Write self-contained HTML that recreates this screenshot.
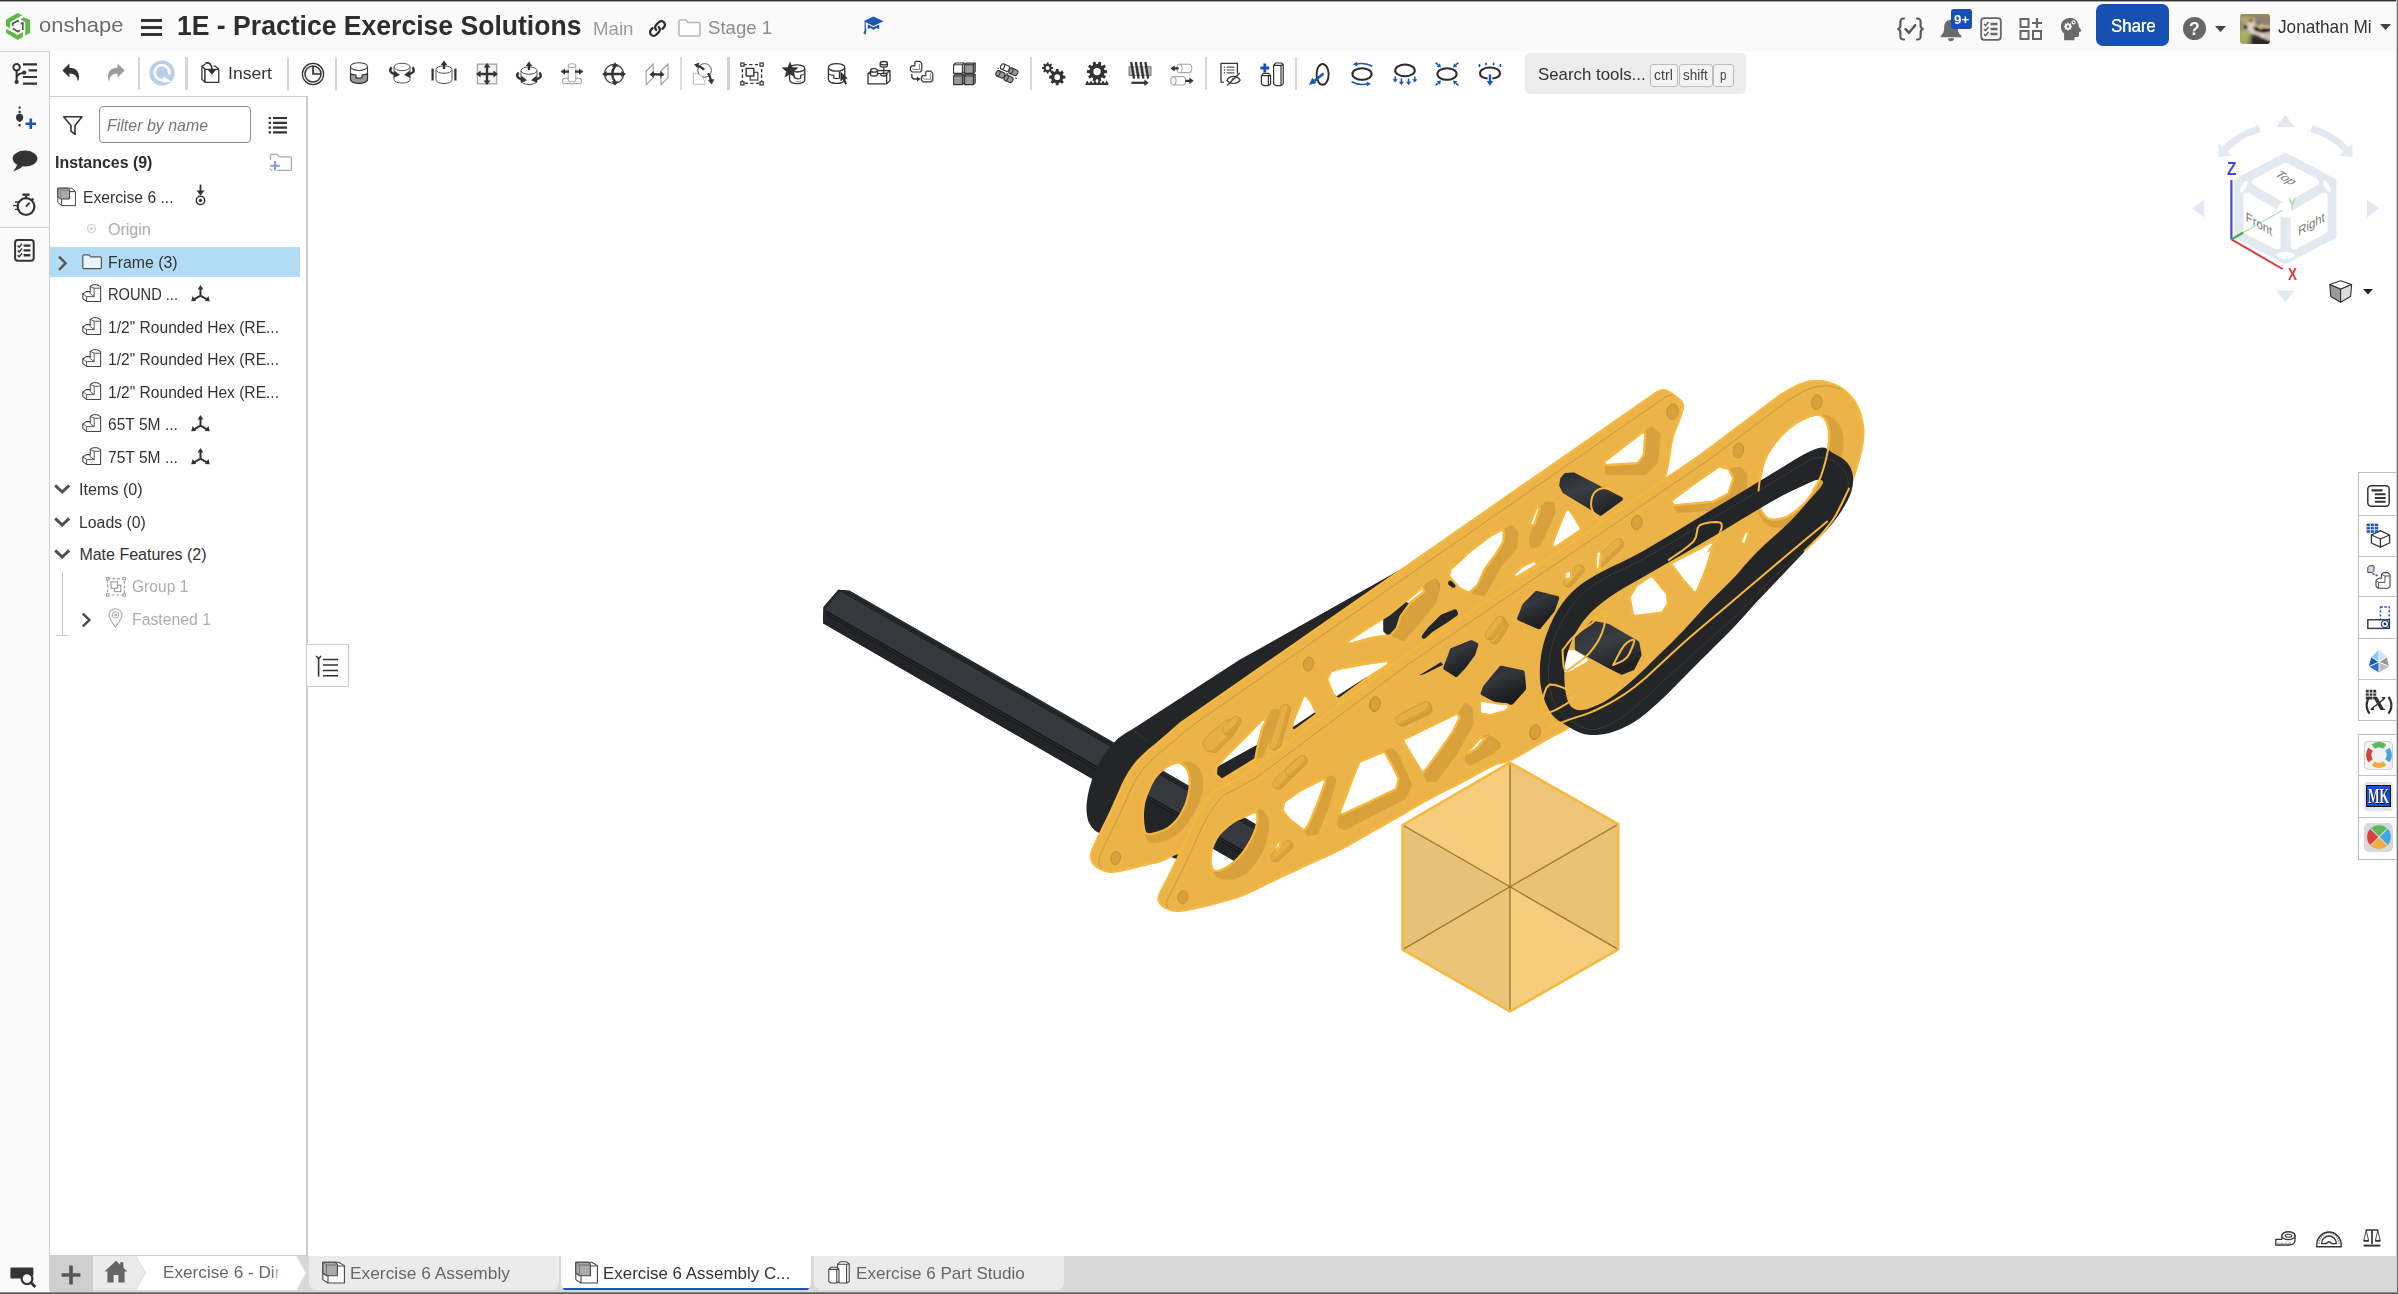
<!DOCTYPE html>
<html><head><meta charset="utf-8"><title>Onshape</title>
<style>
*{box-sizing:border-box;margin:0;padding:0}
html,body{width:2398px;height:1294px;overflow:hidden;background:#fff}
body{font-family:"Liberation Sans",sans-serif;color:#333;position:relative}
.abs{position:absolute}
.t{position:absolute;white-space:nowrap;transform-origin:0 0;line-height:1}
svg{position:absolute;overflow:visible}
#hdr{position:absolute;left:0;top:0;width:2398px;height:51px;background:#fafafa}
#topline{position:absolute;left:0;top:0;width:2398px;height:1px;background:#333;z-index:50}
#topline2{position:absolute;left:0;top:1px;width:2398px;height:1px;background:#a8a8a8;z-index:50}
#rightline{position:absolute;left:2396px;top:0;width:2px;height:1294px;background:linear-gradient(90deg,#d0d0d0 0,#d0d0d0 50%,#707070 50%);z-index:50}
#botline{position:absolute;left:0;top:1292px;width:2398px;height:2px;background:linear-gradient(#9a9a9a,#4a4a4a);z-index:50}
#side{position:absolute;left:0;top:51px;width:50px;height:1240px;background:#fafafa;border-right:1px solid #d0d0d0;border-top:1px solid #d6d6d6}
#panel{position:absolute;left:50px;top:96px;width:258px;height:1160px;background:#fff;border-top:1px solid #ccc;border-right:2px solid #ccc;border-bottom:1px solid #ccc}
#tabs{position:absolute;left:50px;top:1256px;width:2346px;height:36px;background:#d8d8d8}
.sep{position:absolute;top:57px;width:2px;height:33px;background:#d0d0d0}
.row{position:absolute;left:51px;width:249px;height:31px}
</style></head><body>
<div id="hdr"></div>
<div id="side"></div>
<div id="panel"></div>
<div id="tabs"></div>
<svg style="left:5.9px;top:12.9px" width="24.2" height="27.1" viewBox="100 150 415 465" preserveAspectRatio="none">
<polygon points="100,265 300,150 380,190 172,308 172,412 100,375" fill="#5cb947"/>
<polygon points="345,262 400,222 515,272 515,490 430,540 430,305" fill="#5cb947"/>
<polygon points="100,420 100,490 300,615 392,560 392,475 300,527" fill="#5cb947"/>
<path d="M215,372 L215,330 L300,285 L322,298 M352,332 L388,322 L388,440 M215,418 L300,468 L340,448" fill="none" stroke="#5a5a5a" stroke-width="30"/>
</svg>
<div class="t" style="left:39.1px;top:14.7px;font-size:20.8px;color:#6b6b6b;transform:scaleX(1.0576);">onshape</div>
<div class="abs" style="left:141px;top:18.5px;width:21px;height:3.2px;background:#333"></div>
<div class="abs" style="left:141px;top:25.7px;width:21px;height:3.2px;background:#333"></div>
<div class="abs" style="left:141px;top:33px;width:21px;height:3.2px;background:#333"></div>
<div class="t" style="left:177.2px;top:12.8px;font-size:26.8px;color:#2d2d2d;font-weight:bold;transform:scaleX(0.9911);">1E - Practice Exercise Solutions</div>
<div class="t" style="left:593.3px;top:20.1px;font-size:18.2px;color:#9a9a9a;transform:scaleX(1.0267);">Main</div>
<svg style="left:648px;top:19px" width="19" height="19" viewBox="0 0 19 19"><g fill="none" stroke="#2f2f2f" stroke-width="2.3" stroke-linecap="round">
<path d="M8.2,11 a3.6,3.6 0 0 1 0,-5.1 l2.6,-2.6 a3.6,3.6 0 0 1 5.1,5.1 l-1.5,1.5"/>
<path d="M10.8,8 a3.6,3.6 0 0 1 0,5.1 l-2.6,2.6 a3.6,3.6 0 0 1 -5.1,-5.1 l1.5,-1.5"/></g></svg>
<svg style="left:678px;top:18.5px" width="23" height="18" viewBox="0 0 23 18"><path d="M1,2.5 a1.5,1.5 0 0 1 1.5,-1.5 h5.5 l2,2.4 h10.5 a1.5,1.5 0 0 1 1.5,1.5 v10.6 a1.5,1.5 0 0 1 -1.5,1.5 h-18 a1.5,1.5 0 0 1 -1.5,-1.5 z" fill="#fdfdfd" stroke="#b8b8b8" stroke-width="1.5"/></svg>
<div class="t" style="left:707.5px;top:17.9px;font-size:19.2px;color:#8c8c8c;transform:scaleX(0.9700);">Stage 1</div>
<svg style="left:863px;top:16px" width="21" height="20" viewBox="0 0 21 20"><g fill="#1c55b3">
<polygon points="10.5,0.5 20.5,5.2 10.5,9.9 0.5,5.2"/>
<path d="M4.8,8.6 v4.6 c2,-1.6 3.8,-1.2 5.7,0.8 c1.9,-2 3.7,-2.4 5.7,-0.8 v-4.6 l-5.7,2.7 z"/>
<path d="M1.6,6.2 l1.2,0.5 v5.6 c0.9,1.6 0.6,4 -0.4,6.2 c-0.9,-0.3 -1.5,-0.8 -2,-1.6 c1.2,-1.6 1.4,-3.2 1.2,-4.6 z"/></g></svg>
<svg style="left:1897px;top:17px" width="27" height="24" viewBox="0 0 27 24"><g fill="none" stroke="#5a5a5a" stroke-width="2.2" stroke-linecap="round" stroke-linejoin="round">
<path d="M7,1.5 c-3,0 -3.6,1 -3.6,3.4 v3.6 c0,2 -1,3 -2.2,3.5 c1.2,0.5 2.2,1.5 2.2,3.5 v3.6 c0,2.4 0.6,3.4 3.6,3.4"/>
<path d="M20,1.5 c3,0 3.6,1 3.6,3.4 v3.6 c0,2 1,3 2.2,3.5 c-1.2,0.5 -2.2,1.5 -2.2,3.5 v3.6 c0,2.4 -0.6,3.4 -3.6,3.4"/>
<path d="M8.6,12.2 l3.4,3.6 l6.2,-7.6" stroke-width="2.6"/></g></svg>
<svg style="left:1940px;top:19px" width="22" height="22" viewBox="0 0 22 22"><path d="M11,0.8 c-4.4,0 -6.8,3.4 -6.8,7.4 c0,4.6 -1.2,6.6 -3.6,8.6 v1.4 h20.8 v-1.4 c-2.4,-2 -3.6,-4 -3.6,-8.6 c0,-4 -2.4,-7.4 -6.8,-7.4 z M8,19.2 a3,3 0 0 0 6,0 z" fill="#6a6a6a"/></svg>
<div class="abs" style="left:1951px;top:9px;width:20.5px;height:20px;background:#1650b3;border-radius:3px"></div>
<div class="t" style="left:1953.6px;top:12.8px;font-size:13px;color:#fff;font-weight:bold;transform:scaleX(1.0255);">9+</div>
<svg style="left:1980px;top:17px" width="22" height="24" viewBox="0 0 22 24"><rect x="1.2" y="1.2" width="19.6" height="21.6" rx="3" fill="none" stroke="#666" stroke-width="1.8"/>
<g stroke="#666" stroke-width="2.6"><path d="M10.5,7 h7 M10.5,12 h7 M10.5,17 h7"/></g>
<g fill="none" stroke="#666" stroke-width="1.5"><path d="M4,7 l1.6,1.6 l3,-3.6 M4,12 l1.6,1.6 l3,-3.6 M4,17 l1.6,1.6 l3,-3.6"/></g></svg>
<svg style="left:2019px;top:17px" width="24" height="24" viewBox="0 0 24 24"><g fill="none" stroke="#666" stroke-width="2"><rect x="1.5" y="2" width="8" height="8"/><rect x="1.5" y="14" width="8" height="8"/><rect x="14" y="14" width="8" height="8"/><path d="M18,1 v10 M13,6 h10" stroke-width="2.2"/></g></svg>
<svg style="left:2060px;top:17px" width="22" height="24" viewBox="0 0 22 24"><path d="M10.5,0.8 c-5.6,0 -9.6,3.8 -9.6,8.8 c0,3.4 1.4,5.4 3.2,7.2 v6.4 h10.4 v-3.2 h2.6 c1.2,0 1.9,-0.8 1.9,-2 v-2.8 l1.8,-0.8 c0.5,-0.3 0.5,-0.8 0.2,-1.3 l-2.2,-3.6 c-0.4,-5.2 -3.8,-8.7 -8.3,-8.7 z" fill="#6a6a6a"/>
<g fill="#fafafa"><circle cx="8" cy="9.5" r="3.1"/><circle cx="13.6" cy="5.4" r="2.1"/></g><g fill="#6a6a6a"><circle cx="8" cy="9.5" r="1.3"/><circle cx="13.6" cy="5.4" r="0.9"/></g>
<g stroke="#fafafa" stroke-width="1.3"><path d="M8,5.4 v8.2 M3.9,9.5 h8.2 M5.1,6.6 l5.8,5.8 M10.9,6.6 l-5.8,5.8"/></g><circle cx="8" cy="9.5" r="2.3" fill="#fafafa"/><circle cx="8" cy="9.5" r="1.2" fill="#6a6a6a"/></svg>
<div class="abs" style="left:2096px;top:4px;width:73px;height:42px;background:#1650b3;border-radius:7px"></div>
<div class="t" style="left:2110.5px;top:16.6px;font-size:18.4px;color:#fff;transform:scaleX(0.9064);text-shadow:0.4px 0 0 #fff;">Share</div>
<div class="abs" style="left:2183px;top:17px;width:23px;height:23px;background:#666;border-radius:50%"></div>
<div class="t" style="left:2189.3px;top:19.1px;font-size:19px;color:#fafafa;font-weight:bold;transform:scaleX(0.9220);">?</div>
<svg style="left:2215px;top:25.5px" width="11" height="6" viewBox="0 0 11 6"><polygon points="0,0 11,0 5.5,6" fill="#444"/></svg>
<svg style="left:2240px;top:14px" width="30" height="30" viewBox="0 0 30 30"><defs><clipPath id="av"><rect width="30" height="30" rx="2.4"/></clipPath><filter id="avb" x="-10%" y="-10%" width="120%" height="120%"><feGaussianBlur stdDeviation="1.15"/></filter></defs>
<g clip-path="url(#av)"><g filter="url(#avb)"><rect x="-2" y="-2" width="34" height="34" fill="#b3a27f"/>
<rect x="-2" y="-2" width="34" height="5" fill="#8c9550"/><path d="M-2,17 L12,19 L10,32 L-2,32 Z" fill="#a4ad5c"/><path d="M-2,6 L3,8 L2,18 L-2,18Z" fill="#8f9858"/>
<path d="M14,2 L32,3 L32,12 L22,10 L15,6 Z" fill="#8f8071"/>
<path d="M6,11 C9,7 14,6 18,8 L24,13 L31,12 L31,27 L20,24 L11,19 C8,17 6,14 6,11 Z" fill="#dcd2c4"/>
<path d="M13,13 L19,12 L24,14 L31,14 L31,18 L22,19 L15,17 Z" fill="#1d1916"/>
<path d="M11,20 L20,23 L31,27 L31,32 L8,32 Z" fill="#2c2722"/><path d="M8,24 L12,21 L11,32 L7,32Z" fill="#8d7b66"/>
<path d="M23,19 L31,18.5 L31,26 L25,25 Z" fill="#cfc2b0"/><path d="M14,20 L20,22 L18,25 L13,23Z" fill="#4a3a30"/>
<circle cx="5.6" cy="13.2" r="2.1" fill="#0d0c0b"/>
<path d="M8.4,5.4 L13.6,4.6 L15,8 L21.6,9.6 L23,14 L20.6,15.4 L15,11 L9.4,8.6 Z" fill="#d6bf78"/>
<ellipse cx="11" cy="6.3" rx="2.1" ry="1.3" fill="#3a332e" transform="rotate(-12 11 6.3)"/>
<ellipse cx="17.9" cy="9.2" rx="2.9" ry="1.9" fill="#56616e" transform="rotate(24 17.9 9.2)"/><ellipse cx="17.4" cy="8.6" rx="1.1" ry="0.7" fill="#aeb8c2" transform="rotate(24 17.4 8.6)"/>
</g></g></svg>
<div class="t" style="left:2278.0px;top:17.9px;font-size:18.2px;color:#333;transform:scaleX(0.9451);">Jonathan Mi</div>
<svg style="left:2379.5px;top:24px" width="11" height="6" viewBox="0 0 11 6"><polygon points="0,0 11,0 5.5,6" fill="#444"/></svg>
<svg style="left:12.0px;top:60.5px" width="26" height="26" viewBox="-13.0 -13.0 26 26"><g fill="none" stroke="#333" stroke-width="2"><circle cx="-8.4" cy="-6.8" r="3.2"/><path d="M-8.4,-3.6 V7.8 M-8.4,4.5 C-8.4,0 -5,-0.5 -1.6,-1.2"/></g>
<circle cx="-8.4" cy="8" r="2.1" fill="#333"/><circle cx="-0.8" cy="-1.4" r="2.1" fill="#333"/>
<g stroke="#333" stroke-width="2.1"><path d="M-2,-9.6 H12 M3.6,-3.6 H12 M-2,3 H12 M-2,9.6 H12"/></g></svg>
<svg style="left:58.0px;top:60.0px" width="26" height="26" viewBox="-13.0 -13.0 26 26"><path d="M-8.6,-2.6 L-1.6,-9.6 V-5.2 C5,-5.2 8.4,-1.2 8,4.6 C7.8,6.4 7.4,7.6 6.8,8.4 C6.4,3.2 3.6,0.4 -1.6,0.4 V4.4 Z" fill="#333"/></svg>
<svg style="left:102.5px;top:60.0px" width="26" height="26" viewBox="-13.0 -13.0 26 26"><path d="M8.6,-2.6 L1.6,-9.6 V-5.2 C-5,-5.2 -8.4,-1.2 -8,4.6 C-7.8,6.4 -7.4,7.6 -6.8,8.4 C-6.4,3.2 -3.6,0.4 1.6,0.4 V4.4 Z" fill="#9b9b9b"/></svg>
<div class="sep" style="left:137.8px;width:2px;background:#d6d6d6"></div>
<svg style="left:149.3px;top:60.3px" width="26" height="26" viewBox="-13.0 -13.0 26 26"><circle r="12.6" fill="#b9cfe8"/><path d="M3.5,6.2 A7.4,7.4 0 1 1 7.2,1.5" fill="none" stroke="#fff" stroke-width="2.6"/><polygon points="1.2,3.2 9.5,8.8 1.2,9.6" fill="#fff"/></svg>
<div class="sep" style="left:185.2px;width:2.4px;background:#d6d6d6"></div>
<svg style="left:197.0px;top:60.2px" width="26" height="26" viewBox="-13.0 -13.0 26 26"><g fill="#fff" stroke="#333" stroke-width="1.25" stroke-linejoin="round"><path d="M-8.1,-6.8 L-5,-3.7 V9.4 L-8.1,6.3 Z"/><path d="M-5,-3.7 H8.75 V9.4 H-5 Z"/><path d="M-8.1,-6.8 L-4.6,-9 M8.75,-3.7 L5.4,-6.9 H3.6" fill="none"/></g>
<path d="M-4.8,-9.8 C-1,-11.2 2,-9 1.9,-3.4" fill="none" stroke="#333" stroke-width="1.7"/><polygon points="-2,-3 5.8,-3 1.9,1.8" fill="#333"/><polygon points="-0.4,2.2 4.2,2.2 1.9,4.2" fill="#c8c8c8"/></svg>
<div class="t" style="left:228.0px;top:66.0px;font-size:16.6px;color:#333;transform:scaleX(1.0599);">Insert</div>
<div class="sep" style="left:286.9px;width:2.4px;background:#d6d6d6"></div>
<svg style="left:299.6px;top:60.599999999999994px" width="26" height="26" viewBox="-13.0 -13.0 26 26"><circle r="10.6" fill="#fff" stroke="#333" stroke-width="1.3"/><path d="M0,0 V-8 A8,8 0 0 1 8,0 Z" fill="#e9e9e9"/><circle r="8" fill="none" stroke="#333" stroke-width="1.5"/><path d="M0,-8 V0 H8" fill="none" stroke="#333" stroke-width="1.7"/></svg>
<div class="sep" style="left:335px;width:1.6px;background:#d6d6d6"></div>
<svg style="left:346.3px;top:60.2px" width="26" height="26" viewBox="-13.0 -13.0 26 26"><path d="M-8.5,-6.4 V6.5 A8.5,3.8 0 0 0 8.5,6.5 V-6.4" fill="#fff" stroke="#444" stroke-width="1.1"/><ellipse cx="0" cy="-6.4" rx="8.5" ry="3.9" fill="#fff" stroke="#444" stroke-width="1.1"/><path d="M-8.5,0.8 C-6,1.8 -4,2 -3,2 V4.6 C-1,5.4 1,5.4 3,4.6 V2 C4,2 6,1.8 8.5,0.8 V6.5 A8.5,3.8 0 0 1 -8.5,6.5 Z" fill="#9a9a9a" stroke="#333" stroke-width="1.2"/></svg>
<svg style="left:389.4px;top:60.2px" width="26" height="26" viewBox="-13.0 -13.0 26 26"><path d="M-8,-5.6 V6.5 A8,3.6 0 0 0 8,6.5 V-5.6" fill="#fff" stroke="#555" stroke-width="1"/><ellipse cx="0" cy="-6" rx="8" ry="3.7" fill="#fff" stroke="#555" stroke-width="1"/><g transform="translate(0,-2.2)"><path d="M-10.5,-3.6 C-13.4,0.4 -11,2.6 -6.6,3.4" fill="none" stroke="#333" stroke-width="2.4"/><polygon points="-7.6,-0.4 -2,4.2 -8.2,7" fill="#333"/>
<path d="M10.5,-3.6 C13.4,0.4 11,2.6 6.6,3.4" fill="none" stroke="#333" stroke-width="2.4"/><polygon points="7.6,-0.4 2,4.2 8.2,7" fill="#333"/></g></svg>
<svg style="left:431.3px;top:60.2px" width="26" height="26" viewBox="-13.0 -13.0 26 26"><path d="M-8,-3 V7 A8,3.5 0 0 0 8,7 V-3" fill="#fff" stroke="#555" stroke-width="1"/><ellipse cx="0" cy="-3.4" rx="8" ry="3.7" fill="#fff" stroke="#555" stroke-width="1"/>
<path d="M0,-4 V-9" stroke="#333" stroke-width="2.4"/><polygon points="-3.2,-8 3.2,-8 0,-12.4" fill="#333"/><path d="M-11.4,-4.6 V7.4 M11.4,-4.6 V7.4" stroke="#333" stroke-width="2.2"/></svg>
<svg style="left:474.4px;top:60.599999999999994px" width="26" height="26" viewBox="-13.0 -13.0 26 26"><rect x="-9.6" y="-9.8" width="19.2" height="19.6" fill="#f3f3f3" stroke="#aaa" stroke-width="1.4"/><path d="M0,-7 V7 M-7,0 H7" stroke="#333" stroke-width="2.4"/>
<polygon points="-3.4,-6.4 3.4,-6.4 0,-11" fill="#333"/><polygon points="-3.4,6.4 3.4,6.4 0,11" fill="#333"/><polygon points="-6.4,-3.4 -6.4,3.4 -11,0" fill="#333"/><polygon points="6.4,-3.4 6.4,3.4 11,0" fill="#333"/></svg>
<svg style="left:516.3px;top:60.8px" width="26" height="26" viewBox="-13.0 -13.0 26 26"><path d="M-8,-3 V7 A8,3.5 0 0 0 8,7 V-3" fill="#fff" stroke="#555" stroke-width="1"/><ellipse cx="0" cy="-3.4" rx="8" ry="3.7" fill="#fff" stroke="#555" stroke-width="1"/>
<path d="M0,-4 V-9" stroke="#333" stroke-width="2.4"/><polygon points="-3.2,-8 3.2,-8 0,-12.4" fill="#333"/><path d="M-10.5,-1.6 C-13.4,2.4 -11,4.6 -6.6,5.4" fill="none" stroke="#333" stroke-width="2.4"/><polygon points="-7.6,1.6 -2,6.2 -8.2,9" fill="#333"/>
<path d="M10.5,-1.6 C13.4,2.4 11,4.6 6.6,5.4" fill="none" stroke="#333" stroke-width="2.4"/><polygon points="7.6,1.6 2,6.2 8.2,9" fill="#333"/></svg>
<svg style="left:559.4px;top:60.2px" width="26" height="26" viewBox="-13.0 -13.0 26 26"><rect x="-9.4" y="5.4" width="18.8" height="5.2" rx="2.2" fill="#fff" stroke="#aaa" stroke-width="1.2"/><path d="M-3.8,-7 V7 A3.8,1.8 0 0 0 3.8,7 V-7" fill="#fff" stroke="#aaa" stroke-width="1.1"/><ellipse cx="0" cy="-7.4" rx="3.8" ry="1.9" fill="#fff" stroke="#aaa" stroke-width="1.1"/>
<path d="M-8,-1.4 H-3 M8,-1.4 H3" stroke="#333" stroke-width="2.2"/><polygon points="-7,-4.6 -7,1.8 -11.4,-1.4" fill="#333"/><polygon points="7,-4.6 7,1.8 11.4,-1.4" fill="#333"/></svg>
<svg style="left:601.4px;top:60.599999999999994px" width="26" height="26" viewBox="-13.0 -13.0 26 26"><circle r="9.6" fill="#fff" stroke="#444" stroke-width="1.2"/><path d="M-8,0 H8 M1.2,-8 C-2.6,-3 -2.6,3 1.2,8" fill="none" stroke="#333" stroke-width="2.3"/>
<polygon points="-2.4,-7.2 4.2,-7.2 1,-11.8" fill="#333"/><polygon points="-2.4,7.2 4.2,7.2 1,11.8" fill="#333"/><polygon points="-7.4,-3.3 -7.4,3.3 -12,0" fill="#333"/><polygon points="7.4,-3.3 7.4,3.3 12,0" fill="#333"/></svg>
<svg style="left:644.3px;top:60.599999999999994px" width="26" height="26" viewBox="-13.0 -13.0 26 26"><g fill="#fff" stroke="#999" stroke-width="1.1"><polygon points="-10.8,-3 -3.8,-10 -3.8,3.6 -10.8,10.6"/><polygon points="4,-3 11,-10 11,3.6 4,10.6"/></g><path d="M-4,0.4 H4" stroke="#333" stroke-width="2.4"/><polygon points="-3.2,-3 -3.2,3.8 -7.6,0.4" fill="#333"/><polygon points="3.2,-3 3.2,3.8 7.6,0.4" fill="#333"/></svg>
<div class="sep" style="left:680.2px;width:1.4px;background:#dcdcdc"></div>
<svg style="left:691.0px;top:60.599999999999994px" width="26" height="26" viewBox="-13.0 -13.0 26 26"><circle cx="0.6" cy="-3.6" r="6.8" fill="none" stroke="#555" stroke-width="1"/><path d="M-10.6,10.4 V-0.8 C-4,-0.8 1,4 1,10.4 Z" fill="#fff" stroke="#bbb" stroke-width="1"/>
<path d="M-7.6,-8.4 C-4.4,-8 -2,-6.6 0.2,-4.4" fill="none" stroke="#333" stroke-width="2.3"/><polygon points="-10,-9.6 -4.6,-11.4 -6.4,-6" fill="#333"/>
<path d="M4,-0.8 C5.6,1.4 6.6,3.8 7,6.6" fill="none" stroke="#333" stroke-width="2.3"/><polygon points="4,6 10.4,5 7.8,10.6" fill="#333"/></svg>
<div class="sep" style="left:727px;width:2.6px;background:#d2d2d2"></div>
<svg style="left:739.3px;top:60.599999999999994px" width="26" height="26" viewBox="-13.0 -13.0 26 26"><rect x="-9.6" y="-9.4" width="19.2" height="18.8" fill="none" stroke="#333" stroke-width="1.4" stroke-dasharray="3.2 2.4" stroke-dashoffset="-1.2"/>
<g fill="#fff" stroke="#333" stroke-width="1.2"><rect x="-11.2" y="-11" width="3.2" height="3.2"/><rect x="8" y="-11" width="3.2" height="3.2"/><rect x="-11.2" y="7.8" width="3.2" height="3.2"/><rect x="8" y="7.8" width="3.2" height="3.2"/></g>
<rect x="-1.8" y="-1.6" width="7.6" height="7.6" fill="#fff" stroke="#555" stroke-width="1.3"/><rect x="-5.8" y="-5.6" width="7.6" height="7.6" fill="#fff" stroke="#333" stroke-width="1.4"/></svg>
<svg style="left:781.6px;top:60.2px" width="26" height="26" viewBox="-13.0 -13.0 26 26"><path d="M-5.4,-4 V7 A7.6,3.6 0 0 0 9.8,7 V-4" fill="#fff" stroke="#333" stroke-width="1.3"/><ellipse cx="2.2" cy="-4.6" rx="7.6" ry="3.6" fill="#fff" stroke="#333" stroke-width="1.3"/>
<path d="M-1.6,3.6 C-0.6,5.8 3,6.4 5.6,5.2 V2.4 C7.4,2 8.6,1.4 9.8,0.4" fill="none" stroke="#333" stroke-width="1.2"/><path d="M0.6,8.4 C2,9 5,8.6 6,7.6" fill="none" stroke="#888" stroke-width="0.9"/>
<polygon points="-5,-11.6 -2.6,-5.8 3.6,-5.4 -1.2,-1.4 0.4,4.6 -5,1.3 -10.4,4.6 -8.8,-1.4 -13.6,-5.4 -7.4,-5.8" fill="#333"/></svg>
<svg style="left:823.8px;top:60.2px" width="26" height="26" viewBox="-13.0 -13.0 26 26"><path d="M-8.6,-5 V6.6 A8.2,3.8 0 0 0 7.8,6.6 V-5" fill="#fff" stroke="#333" stroke-width="1.3"/><ellipse cx="-0.4" cy="-5.6" rx="8.2" ry="3.8" fill="#fff" stroke="#333" stroke-width="1.3"/>
<path d="M-8.6,1 C-6,2.2 -4,2.4 -3.2,2.4 V5 C-1.4,5.8 0.6,5.8 2.4,5 V-1" fill="none" stroke="#333" stroke-width="1.2"/>
<polygon points="3.4,-1.6 3.4,8.6 5.8,6.6 8.2,11.4 10,10.4 7.8,5.8 11,5.4" fill="#333"/></svg>
<svg style="left:866.2px;top:60.2px" width="26" height="26" viewBox="-13.0 -13.0 26 26"><g fill="#fff" stroke="#333" stroke-width="1.3" stroke-linejoin="round"><path d="M-11,0.6 L-7,-2.4 H11 V7.6 L7.6,10.8 H-11 Z"/><path d="M-11,0.6 H7.6 V10.8 M7.6,0.6 L11,-2.4"/>
<path d="M-8.4,-2.4 V1.4 A3.4,1.6 0 0 0 -1.6,1.4 V-2.4"/><ellipse cx="-5" cy="-2.6" rx="3.4" ry="1.7"/>
<ellipse cx="4.8" cy="1.6" rx="3" ry="1.4"/><path d="M4.8,1.4 V-6" stroke-width="1.2"/>
<path d="M1.2,-9.6 V-7.4 A3.6,1.6 0 0 0 8.4,-7.4 V-9.6"/><ellipse cx="4.8" cy="-9.8" rx="3.6" ry="1.7"/></g></svg>
<svg style="left:909.4px;top:60.2px" width="26" height="26" viewBox="-13.0 -13.0 26 26"><g fill="#fff" stroke="#333" stroke-width="1.2" stroke-linejoin="round"><path d="M-11.6,-5.4 V-2.8 L-9.8,-1 H-1.8 L-0.2,-2.4 V-9.4 L-2.2,-11.6 H-6.4 L-7.2,-10.6 V-7.2 H-10.6 Z"/>
<path d="M-0.6,4.4 V7 L1.2,8.8 H9.2 L10.8,7.4 V0.4 L8.8,-1.8 H4.6 L3.8,-0.8 V2.6 H0.4 Z"/></g>
<path d="M-10.6,-5.6 L-9,-3.6 H-2.6 V-9.2 M-2.6,-3.6 L-0.8,-2.6 M0.4,4.2 L2,6.2 H8.4 V0.6 M8.4,6.2 L10.2,7.2" fill="none" stroke="#777" stroke-width="0.9"/>
<path d="M-10.2,1 V3.6 C-10.2,5.4 -9,6 -7.4,6 H-4" fill="none" stroke="#333" stroke-width="1.3"/><polygon points="-5,3.4 -5,8.6 -1.4,6" fill="#333"/></svg>
<svg style="left:951.6px;top:60.8px" width="26" height="26" viewBox="-13.0 -13.0 26 26"><g stroke="#333" stroke-width="1.1" stroke-linejoin="round"><path d="M-0.4,-9.2 L1.4,-11 H10.2 V-2.4000000000000004 L8.4,-0.5999999999999996 H-0.4 Z" fill="#9a9a9a"/><path d="M-0.4,-9.2 H8.4 V-0.5999999999999996 M8.4,-9.2 L10.2,-11" fill="none"/></g><g stroke="#333" stroke-width="1.1" stroke-linejoin="round"><path d="M-11.4,-9.2 L-9.6,-11 H-0.8000000000000007 V-2.4000000000000004 L-2.5999999999999996,-0.5999999999999996 H-11.4 Z" fill="#fff"/><path d="M-11.4,-9.2 H-2.5999999999999996 V-0.5999999999999996 M-2.5999999999999996,-9.2 L-0.8000000000000007,-11" fill="none"/></g><g stroke="#333" stroke-width="1.1" stroke-linejoin="round"><path d="M-0.4,2.0 L1.4,0.2 H10.2 V8.799999999999999 L8.4,10.6 H-0.4 Z" fill="#9a9a9a"/><path d="M-0.4,2.0 H8.4 V10.6 M8.4,2.0 L10.2,0.2" fill="none"/></g><g stroke="#333" stroke-width="1.1" stroke-linejoin="round"><path d="M-11.4,2.0 L-9.6,0.2 H-0.8000000000000007 V8.799999999999999 L-2.5999999999999996,10.6 H-11.4 Z" fill="#9a9a9a"/><path d="M-11.4,2.0 H-2.5999999999999996 V10.6 M-2.5999999999999996,2.0 L-0.8000000000000007,0.2" fill="none"/></g></svg>
<svg style="left:994.6px;top:60.8px" width="26" height="26" viewBox="-13.0 -13.0 26 26"><g transform="translate(-3,-6.4) rotate(24)" stroke="#333" stroke-width="1.1"><path d="M-2.6,-2.9 H2.6 A1.9,2.9 0 0 1 2.6,2.9 H-2.6 Z" fill="#fff"/><ellipse cx="-2.6" cy="0" rx="1.9" ry="2.9" fill="#fff"/></g><g transform="translate(-7.6,0.4) rotate(24)" stroke="#333" stroke-width="1.1"><path d="M-2.6,-2.9 H2.6 A1.9,2.9 0 0 1 2.6,2.9 H-2.6 Z" fill="#9a9a9a"/><ellipse cx="-2.6" cy="0" rx="1.9" ry="2.9" fill="#9a9a9a"/></g><g transform="translate(5.4,-2.2) rotate(24)" stroke="#333" stroke-width="1.1"><path d="M-2.6,-2.9 H2.6 A1.9,2.9 0 0 1 2.6,2.9 H-2.6 Z" fill="#9a9a9a"/><ellipse cx="-2.6" cy="0" rx="1.9" ry="2.9" fill="#9a9a9a"/></g><g transform="translate(0.6,4.8) rotate(24)" stroke="#333" stroke-width="1.1"><path d="M-2.6,-2.9 H2.6 A1.9,2.9 0 0 1 2.6,2.9 H-2.6 Z" fill="#9a9a9a"/><ellipse cx="-2.6" cy="0" rx="1.9" ry="2.9" fill="#9a9a9a"/></g><path d="M-10.6,-6 l1.6,0.6 M-1.6,-1 l2,0.8 M7,3.8 l2,0.8 M-9,-3 l0.6,0.4" stroke="#333" stroke-width="0.9"/></svg>
<div class="sep" style="left:1030.2px;width:1.6px;background:#d8d8d8"></div>
<svg style="left:1041.2px;top:60.599999999999994px" width="26" height="26" viewBox="-13.0 -13.0 26 26"><path d="M-2.45,-7.08 L-0.88,-6.92 L-0.88,-5.08 L-2.45,-4.92 L-2.84,-3.97 L-1.84,-2.74 L-3.14,-1.44 L-4.37,-2.44 L-5.32,-2.05 L-5.48,-0.48 L-7.32,-0.48 L-7.48,-2.05 L-8.43,-2.44 L-9.66,-1.44 L-10.96,-2.74 L-9.96,-3.97 L-10.35,-4.92 L-11.92,-5.08 L-11.92,-6.92 L-10.35,-7.08 L-9.96,-8.03 L-10.96,-9.26 L-9.66,-10.56 L-8.43,-9.56 L-7.48,-9.95 L-7.32,-11.52 L-5.48,-11.52 L-5.32,-9.95 L-4.37,-9.56 L-3.14,-10.56 L-1.84,-9.26 L-2.84,-8.03 Z M-4.5,-6 A1.9,1.9 0 1 0 -8.3,-6 A1.9,1.9 0 1 0 -4.5,-6 Z" fill="#333" fill-rule="evenodd"/><path d="M9.08,1.59 L11.29,1.85 L11.29,4.55 L9.08,4.81 L8.50,6.22 L9.87,7.97 L7.97,9.87 L6.22,8.50 L4.81,9.08 L4.55,11.29 L1.85,11.29 L1.59,9.08 L0.18,8.50 L-1.57,9.87 L-3.47,7.97 L-2.10,6.22 L-2.68,4.81 L-4.89,4.55 L-4.89,1.85 L-2.68,1.59 L-2.10,0.18 L-3.47,-1.57 L-1.57,-3.47 L0.18,-2.10 L1.59,-2.68 L1.85,-4.89 L4.55,-4.89 L4.81,-2.68 L6.22,-2.10 L7.97,-3.47 L9.87,-1.57 L8.50,0.18 Z M6.1,3.2 A2.9,2.9 0 1 0 0.30000000000000027,3.2 A2.9,2.9 0 1 0 6.1,3.2 Z" fill="#333" fill-rule="evenodd"/></svg>
<svg style="left:1084.2px;top:60.599999999999994px" width="26" height="26" viewBox="-13.0 -13.0 26 26"><path d="M7.43,-4.01 L10.11,-3.74 L10.11,-1.06 L7.43,-0.79 L6.96,0.66 L8.97,2.46 L7.39,4.63 L5.06,3.27 L3.83,4.17 L4.40,6.80 L1.85,7.63 L0.76,5.16 L-0.76,5.16 L-1.85,7.63 L-4.40,6.80 L-3.83,4.17 L-5.06,3.27 L-7.39,4.63 L-8.97,2.46 L-6.96,0.66 L-7.43,-0.79 L-10.11,-1.06 L-10.11,-3.74 L-7.43,-4.01 L-6.96,-5.46 L-8.97,-7.26 L-7.39,-9.43 L-5.06,-8.07 L-3.83,-8.97 L-4.40,-11.60 L-1.85,-12.43 L-0.76,-9.96 L0.76,-9.96 L1.85,-12.43 L4.40,-11.60 L3.83,-8.97 L5.06,-8.07 L7.39,-9.43 L8.97,-7.26 L6.96,-5.46 Z M3.7,-2.4 A3.7,3.7 0 1 0 -3.7,-2.4 A3.7,3.7 0 1 0 3.7,-2.4 Z" fill="#333" fill-rule="evenodd"/><path d="M-11.4,11 H11.4 V9.6 L9.6,6.6 L8,9.4 L6,6.6 L4.2,9.4 L2,6.6 L0,9.4 L-2,6.6 L-4.2,9.4 L-6,6.6 L-8,9.4 L-9.6,6.6 L-11.4,9.6 Z" fill="#333"/></svg>
<svg style="left:1126.6px;top:60.599999999999994px" width="26" height="26" viewBox="-13.0 -13.0 26 26"><rect x="-11" y="-7.2" width="22" height="8.6" fill="#bbb" stroke="#666" stroke-width="0.9"/>
<g stroke="#333" stroke-width="2.3"><path d="M-8.8,-12 L-6,4.6 M-4.2,-12 L-1.4,4.6 M0.6,-12 L3.4,4.6 M5.4,-12 L8.2,4.6"/></g><g stroke="#fff" stroke-width="0.8"><path d="M-6.4,-12 L-3.6,4.6 M-1.8,-12 L1,4.6 M3,-12 L5.8,4.6"/></g>
<path d="M-8.6,8.8 H5.6" stroke="#333" stroke-width="2.2"/><polygon points="4.4,5.6 4.4,12 8.6,8.8" fill="#333"/></svg>
<svg style="left:1169.2px;top:60.599999999999994px" width="26" height="26" viewBox="-13.0 -13.0 26 26"><g fill="#fff" stroke="#aaa" stroke-width="1.1"><path d="M-2.4,-9.8 H7.2 A2.6,4.2 0 0 1 7.2,-1.4 H-2.4"/><ellipse cx="-2.4" cy="-5.6" rx="2.6" ry="4.2"/>
<path d="M-8.6,2.6 H1 A2.6,4.2 0 0 1 1,11 H-8.6"/><ellipse cx="-8.6" cy="6.8" rx="2.6" ry="4.2"/></g>
<path d="M-8,-5.6 H-3.4 M3.4,6.8 H8" stroke="#333" stroke-width="2.2"/><polygon points="-7.4,-8.8 -7.4,-2.4 -11.6,-5.6" fill="#333"/><polygon points="7.4,3.6 7.4,10 11.6,6.8" fill="#333"/></svg>
<div class="sep" style="left:1205px;width:1.6px;background:#d8d8d8"></div>
<svg style="left:1217.4px;top:60.599999999999994px" width="26" height="26" viewBox="-13.0 -13.0 26 26"><path d="M-6.2,8.2 H-9 V-10.6 H7.4 V-0.4" fill="#fff" stroke="#333" stroke-width="1.3"/><g stroke="#555" stroke-width="1.2"><path d="M-3.4,-6.8 H4.4 M-3.4,-4 H4.4 M-3.4,-1.2 H4.4"/><path d="M-6.2,-6.8 H-5 M-6.2,-4 H-5 M-6.2,-1.2 H-5" stroke-width="1.4"/></g>
<path d="M-3.2,6.2 C0,1 7,1 10.2,6.2 C7,10.6 0,10.6 -3.2,6.2 Z" fill="#fff" stroke="#333" stroke-width="1.2"/><path d="M-3,11.6 L9.8,-1" stroke="#333" stroke-width="1.3"/><path d="M1.8,6.4 a2,2 0 0 1 3.4,-1.6" fill="none" stroke="#333" stroke-width="1"/></svg>
<svg style="left:1259.2px;top:60.599999999999994px" width="26" height="26" viewBox="-13.0 -13.0 26 26"><g fill="#fff" stroke="#333" stroke-width="1.2" stroke-linejoin="round"><path d="M1.6,-8.6 L4,-11 H9.6 L11.2,-9.4 V9.8 L9,11.6 H3.8 L1.6,9.8 Z"/><path d="M1.6,-8.6 H9 V11.6 M9,-8.6 L11.2,-9.4" fill="none"/>
<path d="M-10.6,1.6 L-8.6,-0.6 H-3.4 L-1.4,1.6 V10 L-3.4,11.6 H-8.4 L-10.6,10 Z"/><path d="M-10.6,1.6 H-3.6 V11.6 M-3.6,1.6 L-1.4,1.6" fill="none"/></g>
<path d="M-7.2,-10.4 V-1.6 M-11.6,-6 H-2.8" stroke="#1650b3" stroke-width="2.8"/></svg>
<div class="sep" style="left:1295.4px;width:1.6px;background:#d8d8d8"></div>
<svg style="left:1307.2px;top:60.599999999999994px" width="26" height="26" viewBox="-13.0 -13.0 26 26"><ellipse cx="2.6" cy="0.4" rx="6" ry="10.4" fill="none" stroke="#2a2a2a" stroke-width="1.9"/><path d="M3.6,-0.6 L-6.4,7.6" stroke="#1c55b8" stroke-width="2.6"/><polygon points="-11,11 -7.8,3.8 -3.4,9" fill="#1c55b8"/></svg>
<svg style="left:1349.4px;top:60.599999999999994px" width="26" height="26" viewBox="-13.0 -13.0 26 26"><ellipse cx="0" cy="0" rx="9.6" ry="5.8" fill="none" stroke="#2a2a2a" stroke-width="2"/>
<path d="M10.4,-7.8 C5,-10.8 -1,-11 -6,-9.8" fill="none" stroke="#1c55b8" stroke-width="1.6"/><polygon points="-4.8,-12.4 -4.8,-7.4 -8.8,-9.8" fill="#1c55b8"/>
<path d="M-10.4,7.8 C-5,10.8 1,11 6,9.8" fill="none" stroke="#1c55b8" stroke-width="1.6"/><polygon points="4.8,12.4 4.8,7.4 8.8,9.8" fill="#1c55b8"/></svg>
<svg style="left:1391.6px;top:60.599999999999994px" width="26" height="26" viewBox="-13.0 -13.0 26 26"><ellipse cx="0" cy="-3.6" rx="9.8" ry="5.8" fill="none" stroke="#2a2a2a" stroke-width="2"/><path d="M-9.8,2.6 V6.6" stroke="#1c55b8" stroke-width="1.6"/><polygon points="-12.4,5.199999999999999 -7.200000000000001,5.199999999999999 -9.8,8.6" fill="#1c55b8"/><path d="M-3.6,4.6 V9.2" stroke="#1c55b8" stroke-width="1.6"/><polygon points="-6.2,7.799999999999999 -1.0,7.799999999999999 -3.6,11.2" fill="#1c55b8"/><path d="M3.6,4.6 V9.2" stroke="#1c55b8" stroke-width="1.6"/><polygon points="1.0,7.799999999999999 6.2,7.799999999999999 3.6,11.2" fill="#1c55b8"/><path d="M9.8,2.6 V6.6" stroke="#1c55b8" stroke-width="1.6"/><polygon points="7.200000000000001,5.199999999999999 12.4,5.199999999999999 9.8,8.6" fill="#1c55b8"/></svg>
<svg style="left:1434.0px;top:60.599999999999994px" width="26" height="26" viewBox="-13.0 -13.0 26 26"><ellipse cx="0" cy="0" rx="9.6" ry="5.8" fill="none" stroke="#2a2a2a" stroke-width="2"/><path d="M-11.4,-11.4 L-8.7,-9.0" stroke="#1c55b8" stroke-width="1.6"/><polygon points="-10.3,-7.2 -7.1,-10.8 -6,-6.6" fill="#1c55b8"/><path d="M11.4,-11.4 L8.7,-9.0" stroke="#1c55b8" stroke-width="1.6"/><polygon points="7.1,-10.8 10.3,-7.2 6,-6.6" fill="#1c55b8"/><path d="M-11.4,11.4 L-8.7,9.0" stroke="#1c55b8" stroke-width="1.6"/><polygon points="-7.1,10.8 -10.3,7.2 -6,6.6" fill="#1c55b8"/><path d="M11.4,11.4 L8.7,9.0" stroke="#1c55b8" stroke-width="1.6"/><polygon points="10.3,7.2 7.1,10.8 6,6.6" fill="#1c55b8"/></svg>
<svg style="left:1476.6px;top:60.599999999999994px" width="26" height="26" viewBox="-13.0 -13.0 26 26"><path d="M-2.4,4.6 C-7,4 -10,2 -10,-0.8 C-10,-4.2 -5.6,-6.4 0,-6.4 C5.6,-6.4 10,-4.2 10,-0.8 C10,2 7,4 2.4,4.6" fill="none" stroke="#2a2a2a" stroke-width="2"/>
<path d="M0,0.4 V8" stroke="#1c55b8" stroke-width="2.4"/><polygon points="-3.4,7 3.4,7 0,11.8" fill="#1c55b8"/>
<g stroke="#1c55b8" stroke-width="1.8" stroke-linecap="round"><path d="M-10.6,-9.2 V-7.8 M-4,-10.6 V-9.4 M3.6,-10.6 V-9.4 M10.4,-9.2 V-7.8"/></g></svg>
<div class="abs" style="left:1525px;top:53px;width:221px;height:41px;background:#ececec;border-radius:5px"></div>
<div class="t" style="left:1538.0px;top:66.0px;font-size:17px;color:#333;transform:scaleX(0.9903);">Search tools...</div>
<div class="abs" style="left:1650.3px;top:64.2px;width:27.9px;height:22.6px;background:#f3f3f3;border:1px solid #bdbdbd;border-radius:3px"></div>
<div class="t" style="left:1654.4px;top:68.0px;font-size:14.2px;color:#444;transform:scaleX(0.9932);">ctrl</div>
<div class="abs" style="left:1678.7px;top:64.2px;width:33.9px;height:22.6px;background:#f3f3f3;border:1px solid #bdbdbd;border-radius:3px"></div>
<div class="t" style="left:1682.8px;top:68.0px;font-size:14.2px;color:#444;transform:scaleX(0.9523);">shift</div>
<div class="abs" style="left:1712.6px;top:64.2px;width:21.6px;height:22.6px;background:#f3f3f3;border:1px solid #bdbdbd;border-radius:3px"></div>
<div class="t" style="left:1719.6px;top:68.0px;font-size:14.2px;color:#444;transform:scaleX(0.8105);">p</div>
<svg style="left:12px;top:105px" width="26" height="26" viewBox="0 0 26 26"><path d="M7.6,1.4 V23.4" stroke="#333" stroke-width="2" stroke-dasharray="2.4 2"/><circle cx="7.6" cy="12.4" r="3.6" fill="#333"/><path d="M18.8,13.4 V24 M13.6,18.7 H24" stroke="#1650b3" stroke-width="2.6"/></svg>
<svg style="left:12px;top:150px" width="26" height="23" viewBox="0 0 26 23"><ellipse cx="13" cy="8.6" rx="12.4" ry="8" fill="#333"/><path d="M5.2,13 C5,16.4 3.4,19 0.8,21.4 C5.6,20 8.8,18.4 11,15.6 Z" fill="#333"/></svg>
<svg style="left:12px;top:193px" width="26" height="24" viewBox="0 0 26 24"><circle cx="14" cy="13.6" r="8.4" fill="none" stroke="#333" stroke-width="2.2"/><path d="M10.4,1.6 H17.6 M14,1.6 V5" stroke="#333" stroke-width="2.2"/><path d="M19.6,5.6 l1.8,1.6" stroke="#333" stroke-width="2"/><path d="M14,13.6 L17.6,9.6" stroke="#333" stroke-width="2"/>
<path d="M3,9 H8 M1,12.6 H7 M3,16.4 H7" stroke="#333" stroke-width="1.4"/><rect x="0" y="6" width="7.6" height="13" fill="#fafafa" opacity="0"/></svg>
<div class="abs" style="left:0;top:226.6px;width:49px;height:1.4px;background:#d2d2d2"></div>
<svg style="left:14px;top:239px" width="21" height="23" viewBox="0 0 21 23"><rect x="1.1" y="1.1" width="18.6" height="20.6" rx="2.6" fill="none" stroke="#333" stroke-width="2"/><g stroke="#333" stroke-width="2.4"><path d="M9.6,6.6 h6.8 M9.6,11.4 h6.8 M9.6,16.2 h6.8"/></g>
<g fill="none" stroke="#333" stroke-width="1.4"><path d="M3.6,6.6 l1.6,1.6 l2.8,-3.6 M3.6,11.4 l1.6,1.6 l2.8,-3.6 M3.6,16.2 l1.6,1.6 l2.8,-3.6"/></g></svg>
<svg style="left:10px;top:1266px" width="28" height="22" viewBox="0 0 28 22"><path d="M1.6,1.6 h20.6 a1.2,1.2 0 0 1 1.2,1.2 v7 a8,8 0 0 0 -12.8,2.8 h-9 a1.2,1.2 0 0 1 -1.2,-1.2 v-8.6 a1.2,1.2 0 0 1 1.2,-1.2 z" fill="#333"/><circle cx="17" cy="12.6" r="5.4" fill="#fafafa" stroke="#333" stroke-width="2.2"/><path d="M20.8,16.6 L25.4,21" stroke="#333" stroke-width="2.8"/></svg>
<svg style="left:62px;top:115px" width="22" height="22" viewBox="0 0 22 22"><path d="M1.6,1.8 H20 L13,10.4 V19.4 L9,16.2 V10.4 Z" fill="#fff" stroke="#333" stroke-width="1.6" stroke-linejoin="round"/></svg>
<div class="abs" style="left:99px;top:106px;width:152px;height:36.5px;border:1px solid #8e8e8e;border-radius:4px;background:#fff"></div>
<div class="t" style="left:107.4px;top:116.7px;font-size:16.4px;color:#777;font-style:italic;transform:scaleX(0.9741);">Filter by name</div>
<svg style="left:268px;top:115px" width="20" height="20" viewBox="0 0 20 20"><g stroke="#333" stroke-width="2.2"><path d="M5,3 H19 M5,7.8 H19 M5,12.6 H19 M5,17.4 H19"/><path d="M0.6,3 H3 M0.6,7.8 H3 M0.6,12.6 H3 M0.6,17.4 H3"/></g></svg>
<div class="t" style="left:55.0px;top:153.9px;font-size:17px;color:#2d2d2d;font-weight:bold;transform:scaleX(0.9373);">Instances (9)</div>
<svg style="left:269px;top:153px" width="24" height="19" viewBox="0 0 24 19"><path d="M1.4,7 V2.6 a1.2,1.2 0 0 1 1.2,-1.2 h5.6 l2,2.4 h11 a1.2,1.2 0 0 1 1.2,1.2 v11.2 a1.2,1.2 0 0 1 -1.2,1.2 h-13" fill="none" stroke="#a8a8a8" stroke-width="1.3"/><path d="M6,8 V17.6 M1.2,12.8 H10.8" stroke="#7f9fe0" stroke-width="2"/><path d="M1.4,15.6 v1.8 h2" fill="none" stroke="#a8a8a8" stroke-width="1.2" stroke-dasharray="1.4 1"/></svg>
<svg style="left:57px;top:187px" width="20" height="20" viewBox="0 0 20 20"><g stroke="#444" stroke-width="1" stroke-linejoin="round"><path d="M0.8,1.2 H14.6 L18.4,4.4 V18.6 H4.6 L0.8,15.4 Z" fill="#fff"/><path d="M0.8,15.4 H0.8 M4.6,18.6 V4.8 L0.8,1.2 M4.6,4.6 H18.4" fill="none"/><path d="M0.8,1.2 H11.2 L12.6,2.6 V12 H3.4 L0.8,10 Z" fill="#aaa"/><path d="M3.4,12 V3.4 H12.6 M3.4,3.4 L0.8,1.2" fill="none" stroke="#777" stroke-width="0.8"/></g></svg>
<div class="t" style="left:83.2px;top:190.4px;font-size:16px;color:#333;transform:scaleX(0.9787);">Exercise 6 ...</div>
<svg style="left:192px;top:184px" width="17" height="22" viewBox="0 0 17 22"><path d="M8.5,0.6 V8.6" stroke="#333" stroke-width="1.8"/><polygon points="4.4,6.4 12.6,6.4 8.5,11.4" fill="#333"/><circle cx="8.5" cy="16.4" r="4.2" fill="#fff" stroke="#333" stroke-width="1.5"/><circle cx="8.5" cy="16.4" r="1.7" fill="#333"/></svg>
<svg style="left:86px;top:223.4px" width="11" height="11" viewBox="0 0 11 11"><circle cx="5.5" cy="5.5" r="4" fill="none" stroke="#cfcfcf" stroke-width="1.2"/><circle cx="5.5" cy="5.5" r="1.6" fill="#cfcfcf"/></svg>
<div class="t" style="left:108.0px;top:222.0px;font-size:16px;color:#adadad;">Origin</div>
<div class="abs" style="left:50px;top:247px;width:250px;height:30px;background:#b2dcf6"></div>
<svg style="left:57px;top:254.5px" width="11" height="17" viewBox="0 0 11 17"><path d="M2,1.6 L8.6,8.2 L2,14.8" fill="none" stroke="#555" stroke-width="2.4"/></svg>
<svg style="left:81.5px;top:254px" width="20" height="15.5" viewBox="0 0 20 15.5"><path d="M0.8,2 a1.2,1.2 0 0 1 1.2,-1.2 h5 l1.8,2 h9.4 a1.2,1.2 0 0 1 1.2,1.2 v9.4 a1.2,1.2 0 0 1 -1.2,1.2 h-16.2 a1.2,1.2 0 0 1 -1.2,-1.2 z" fill="#eaf4fc" stroke="#555" stroke-width="1.2"/></svg>
<div class="t" style="left:108.0px;top:255.1px;font-size:16px;color:#333;transform:scaleX(0.9897);">Frame (3)</div>
<svg style="left:81.5px;top:284.4px" width="20" height="18.5" viewBox="0 0 20 18.5"><g stroke="#444" stroke-width="1.05" stroke-linejoin="round" fill="#fff"><path d="M0.8,10 L4.2,7.6 H8.2 V2.4 L11.2,0.7 H15.4 L18.6,2.6 V17.4 H4.6 L0.8,14.6 Z"/><path d="M0.8,10 L4.6,12.6 V17.4 M4.6,12.6 H12.2 V4.2 H18.4 M12.2,4.2 L8.2,2.4 M12.2,12.6 L8.2,9.6 V7.6" fill="none" stroke-width="0.9"/></g></svg>
<div class="t" style="left:108.0px;top:287.3px;font-size:16px;color:#333;transform:scaleX(0.9157);">ROUND ...</div>
<svg style="left:191px;top:285px" width="19" height="17" viewBox="0 0 19 17"><path d="M9.5,2 V10.6 L2.6,14.6 M9.5,10.6 L16.4,14.6" fill="none" stroke="#333" stroke-width="2"/><polygon points="6.6,4.6 12.4,4.6 9.5,0" fill="#333"/><polygon points="0.2,16.2 1.6,11 5.2,16" fill="#333"/><polygon points="18.8,16.2 17.4,11 13.8,16" fill="#333"/></svg>
<svg style="left:81.5px;top:316.9px" width="20" height="18.5" viewBox="0 0 20 18.5"><g stroke="#444" stroke-width="1.05" stroke-linejoin="round" fill="#fff"><path d="M0.8,10 L4.2,7.6 H8.2 V2.4 L11.2,0.7 H15.4 L18.6,2.6 V17.4 H4.6 L0.8,14.6 Z"/><path d="M0.8,10 L4.6,12.6 V17.4 M4.6,12.6 H12.2 V4.2 H18.4 M12.2,4.2 L8.2,2.4 M12.2,12.6 L8.2,9.6 V7.6" fill="none" stroke-width="0.9"/></g></svg>
<div class="t" style="left:108.0px;top:319.8px;font-size:16px;color:#333;transform:scaleX(0.9742);">1/2&quot; Rounded Hex (RE...</div>
<svg style="left:81.5px;top:349.4px" width="20" height="18.5" viewBox="0 0 20 18.5"><g stroke="#444" stroke-width="1.05" stroke-linejoin="round" fill="#fff"><path d="M0.8,10 L4.2,7.6 H8.2 V2.4 L11.2,0.7 H15.4 L18.6,2.6 V17.4 H4.6 L0.8,14.6 Z"/><path d="M0.8,10 L4.6,12.6 V17.4 M4.6,12.6 H12.2 V4.2 H18.4 M12.2,4.2 L8.2,2.4 M12.2,12.6 L8.2,9.6 V7.6" fill="none" stroke-width="0.9"/></g></svg>
<div class="t" style="left:108.0px;top:352.3px;font-size:16px;color:#333;transform:scaleX(0.9742);">1/2&quot; Rounded Hex (RE...</div>
<svg style="left:81.5px;top:381.9px" width="20" height="18.5" viewBox="0 0 20 18.5"><g stroke="#444" stroke-width="1.05" stroke-linejoin="round" fill="#fff"><path d="M0.8,10 L4.2,7.6 H8.2 V2.4 L11.2,0.7 H15.4 L18.6,2.6 V17.4 H4.6 L0.8,14.6 Z"/><path d="M0.8,10 L4.6,12.6 V17.4 M4.6,12.6 H12.2 V4.2 H18.4 M12.2,4.2 L8.2,2.4 M12.2,12.6 L8.2,9.6 V7.6" fill="none" stroke-width="0.9"/></g></svg>
<div class="t" style="left:108.0px;top:384.8px;font-size:16px;color:#333;transform:scaleX(0.9742);">1/2&quot; Rounded Hex (RE...</div>
<svg style="left:81.5px;top:414px" width="20" height="18.5" viewBox="0 0 20 18.5"><g stroke="#444" stroke-width="1.05" stroke-linejoin="round" fill="#fff"><path d="M0.8,10 L4.2,7.6 H8.2 V2.4 L11.2,0.7 H15.4 L18.6,2.6 V17.4 H4.6 L0.8,14.6 Z"/><path d="M0.8,10 L4.6,12.6 V17.4 M4.6,12.6 H12.2 V4.2 H18.4 M12.2,4.2 L8.2,2.4 M12.2,12.6 L8.2,9.6 V7.6" fill="none" stroke-width="0.9"/></g></svg>
<div class="t" style="left:107.7px;top:417.0px;font-size:16px;color:#333;transform:scaleX(0.9745);">65T 5M ...</div>
<svg style="left:191px;top:414.6px" width="19" height="17" viewBox="0 0 19 17"><path d="M9.5,2 V10.6 L2.6,14.6 M9.5,10.6 L16.4,14.6" fill="none" stroke="#333" stroke-width="2"/><polygon points="6.6,4.6 12.4,4.6 9.5,0" fill="#333"/><polygon points="0.2,16.2 1.6,11 5.2,16" fill="#333"/><polygon points="18.8,16.2 17.4,11 13.8,16" fill="#333"/></svg>
<svg style="left:81.5px;top:447px" width="20" height="18.5" viewBox="0 0 20 18.5"><g stroke="#444" stroke-width="1.05" stroke-linejoin="round" fill="#fff"><path d="M0.8,10 L4.2,7.6 H8.2 V2.4 L11.2,0.7 H15.4 L18.6,2.6 V17.4 H4.6 L0.8,14.6 Z"/><path d="M0.8,10 L4.6,12.6 V17.4 M4.6,12.6 H12.2 V4.2 H18.4 M12.2,4.2 L8.2,2.4 M12.2,12.6 L8.2,9.6 V7.6" fill="none" stroke-width="0.9"/></g></svg>
<div class="t" style="left:107.7px;top:450.0px;font-size:16px;color:#333;transform:scaleX(0.9745);">75T 5M ...</div>
<svg style="left:191px;top:447.6px" width="19" height="17" viewBox="0 0 19 17"><path d="M9.5,2 V10.6 L2.6,14.6 M9.5,10.6 L16.4,14.6" fill="none" stroke="#333" stroke-width="2"/><polygon points="6.6,4.6 12.4,4.6 9.5,0" fill="#333"/><polygon points="0.2,16.2 1.6,11 5.2,16" fill="#333"/><polygon points="18.8,16.2 17.4,11 13.8,16" fill="#333"/></svg>
<svg style="left:54.4px;top:484.3px" width="17" height="11" viewBox="0 0 17 11"><path d="M1.2,1.4 L8.2,8 L15.2,1.4" fill="none" stroke="#505050" stroke-width="2.9"/></svg>
<div class="t" style="left:79.4px;top:481.9px;font-size:16px;color:#333;transform:scaleX(1.0093);">Items (0)</div>
<svg style="left:54.4px;top:517.0999999999999px" width="17" height="11" viewBox="0 0 17 11"><path d="M1.2,1.4 L8.2,8 L15.2,1.4" fill="none" stroke="#505050" stroke-width="2.9"/></svg>
<div class="t" style="left:79.4px;top:514.7px;font-size:16px;color:#333;transform:scaleX(0.9883);">Loads (0)</div>
<svg style="left:54.4px;top:549.1999999999999px" width="17" height="11" viewBox="0 0 17 11"><path d="M1.2,1.4 L8.2,8 L15.2,1.4" fill="none" stroke="#505050" stroke-width="2.9"/></svg>
<div class="t" style="left:79.4px;top:546.8px;font-size:16px;color:#333;">Mate Features (2)</div>
<div class="abs" style="left:61.6px;top:571px;width:1.2px;height:64px;background:#ccc"></div><div class="abs" style="left:56px;top:634.6px;width:12.4px;height:1.2px;background:#ccc"></div>
<svg style="left:106px;top:577px" width="20" height="20" viewBox="0 0 20 20"><rect x="1.6" y="1.6" width="16.8" height="16.4" fill="none" stroke="#999" stroke-width="1.1" stroke-dasharray="2.8 2"/><g fill="#fff" stroke="#999" stroke-width="0.9"><rect x="0.5" y="0.5" width="2.4" height="2.4"/><rect x="17" y="0.5" width="2.4" height="2.4"/><rect x="0.5" y="16.8" width="2.4" height="2.4"/><rect x="17" y="16.8" width="2.4" height="2.4"/></g>
<rect x="8.4" y="8.2" width="6.4" height="6.4" fill="#fff" stroke="#999" stroke-width="1.1"/><rect x="5" y="4.8" width="6.4" height="6.4" fill="#fff" stroke="#999" stroke-width="1.1"/></svg>
<div class="t" style="left:131.7px;top:579.4px;font-size:16px;color:#adadad;transform:scaleX(0.9739);">Group 1</div>
<svg style="left:81.4px;top:611.6px" width="11" height="17" viewBox="0 0 11 17"><path d="M1.8,1.6 L8.4,8 L1.8,14.4" fill="none" stroke="#444" stroke-width="2.3"/></svg>
<svg style="left:108px;top:608.4px" width="15" height="20" viewBox="0 0 15 20"><path d="M7.5,19 C3.6,13.6 1,10.6 1,7.2 a6.5,6.5 0 0 1 13,0 C14,10.6 11.4,13.6 7.5,19 Z" fill="#fff" stroke="#aaa" stroke-width="1.1"/><circle cx="7.5" cy="7" r="3.2" fill="none" stroke="#aaa" stroke-width="1"/><circle cx="7.5" cy="7" r="1.3" fill="#aaa"/></svg>
<div class="t" style="left:131.7px;top:611.7px;font-size:16px;color:#adadad;transform:scaleX(0.9869);">Fastened 1</div>
<div class="abs" style="left:307px;top:644px;width:41.5px;height:43px;background:#fff;border:1px solid #ccc;border-left:none"></div>
<svg style="left:315px;top:655px" width="24" height="23" viewBox="0 0 24 23"><path d="M1.2,1 L3.6,3.8 L6,1" fill="none" stroke="#333" stroke-width="1.5"/><path d="M3.6,4 V21.6" stroke="#333" stroke-width="1.6"/><g stroke="#333" stroke-width="1.5"><path d="M8,4.6 H23 M8,10 H23 M8,15.4 H23 M8,20.8 H23"/></g></svg>
<div class="abs" style="left:50px;top:1256px;width:42.5px;height:36px;background:#cfcfcf"></div>
<svg style="left:61px;top:1264.5px" width="20" height="20" viewBox="0 0 20 20"><path d="M10,0.6 V19.4 M0.6,10 H19.4" stroke="#555" stroke-width="3.6"/></svg>
<div class="abs" style="left:92.5px;top:1256px;width:52px;height:34px;background:#ebebeb"></div>
<svg style="left:104px;top:1260px" width="24" height="23" viewBox="0 0 24 23"><path d="M12,0.8 L0.6,11.6 H3.4 V22.4 H9.6 V15 H14.4 V22.4 H20.6 V11.6 H23.4 L19.4,7.8 V2.2 H16.2 V4.8 Z" fill="#666"/></svg>
<svg style="left:135px;top:1256px" width="172" height="34" viewBox="0 0 172 34"><polygon points="0.5,0 161.6,0 171,17 161.6,34 0.5,34 10.5,17" fill="#fff"/><path d="M0.5,0 L10.5,17 L0.5,34" fill="none" stroke="#dcdcdc" stroke-width="1"/><path d="M161.6,0 L171,17 L161.6,34" fill="none" stroke="#e4e4e4" stroke-width="1"/></svg>
<div class="abs" style="left:163px;top:1258px;width:119px;height:30px;overflow:hidden"><div class="t" style="left:0.0px;top:5.9px;font-size:16.4px;color:#666;transform:scaleX(1.0478);">Exercise 6 - Dire</div><div class="abs" style="left:108px;top:0;width:11px;height:30px;background:linear-gradient(90deg,rgba(255,255,255,0),#fff)"></div></div>
<div class="abs" style="left:308.7px;top:1256px;width:250.0px;height:33.6px;background:#ebebeb;border-radius:0 0 7px 7px;box-shadow:0 0.6px 0 #cfcfcf;"></div>
<svg style="left:322px;top:1261px" width="24" height="23" viewBox="0 0 24 23"><g stroke="#444" stroke-width="1.1" stroke-linejoin="round"><path d="M0.8,1.2 H16.6 L22.4,4.6 V22 H6 L0.8,18.6 Z" fill="#fff"/><path d="M6,22 V5 L0.8,1.2 M6,5 H22.4" fill="none"/><path d="M0.8,1.2 H13 L15.4,3.2 V14.8 H4.4 L0.8,12 Z" fill="#aaa"/><path d="M4.4,14.8 V4 H15.4 M4.4,4 L0.8,1.2" fill="none" stroke="#666" stroke-width="0.9"/></g></svg>
<div class="t" style="left:350.3px;top:1266.1px;font-size:16.6px;color:#666;transform:scaleX(1.0448);">Exercise 6 Assembly</div>
<div class="abs" style="left:561px;top:1256px;width:250.0px;height:33.6px;background:#fff;border-radius:0 0 7px 7px;"></div><div class="abs" style="left:563px;top:1287.6px;width:246.0px;height:2.6px;background:#1a55b8;border-radius:0 0 3px 3px"></div>
<svg style="left:575px;top:1261px" width="24" height="23" viewBox="0 0 24 23"><g stroke="#444" stroke-width="1.1" stroke-linejoin="round"><path d="M0.8,1.2 H16.6 L22.4,4.6 V22 H6 L0.8,18.6 Z" fill="#fff"/><path d="M6,22 V5 L0.8,1.2 M6,5 H22.4" fill="none"/><path d="M0.8,1.2 H13 L15.4,3.2 V14.8 H4.4 L0.8,12 Z" fill="#aaa"/><path d="M4.4,14.8 V4 H15.4 M4.4,4 L0.8,1.2" fill="none" stroke="#666" stroke-width="0.9"/></g></svg>
<div class="t" style="left:603.0px;top:1266.1px;font-size:16.6px;color:#333;transform:scaleX(1.0203);">Exercise 6 Assembly C...</div>
<div class="abs" style="left:813.7px;top:1256px;width:250.6px;height:33.6px;background:#ebebeb;border-radius:0 0 7px 7px;box-shadow:0 0.6px 0 #cfcfcf;"></div>
<svg style="left:828.4px;top:1261.4px" width="22" height="23" viewBox="0 0 22 23"><g stroke="#444" stroke-width="1.1" stroke-linejoin="round" fill="#fff"><path d="M9.6,3.2 L12.4,0.8 H18.6 L21.2,3 V20.6 L18.6,22 H12 L9.6,20.4 Z"/><path d="M9.6,3.2 H18.6 V22 M18.6,3.2 L21.2,3" fill="none"/>
<path d="M0.8,8.4 L3.2,6.2 H8.6 L11,8.4 V20.4 L8.8,22 H3 L0.8,20.4 Z"/><path d="M0.8,8.4 H8.8 V22 M8.8,8.4 L11,8.4" fill="none"/></g></svg>
<div class="t" style="left:855.7px;top:1266.1px;font-size:16.6px;color:#666;transform:scaleX(1.0285);">Exercise 6 Part Studio</div>
<div class="abs" style="left:2358px;top:472px;width:42px;height:249px;background:#fff;border:1px solid #bdbdbd"></div>
<div class="abs" style="left:2359px;top:514.5px;width:40px;height:1px;background:#c4c4c4"></div>
<div class="abs" style="left:2359px;top:555.8px;width:40px;height:1px;background:#c4c4c4"></div>
<div class="abs" style="left:2359px;top:596.4px;width:40px;height:1px;background:#c4c4c4"></div>
<div class="abs" style="left:2359px;top:637.6px;width:40px;height:1px;background:#c4c4c4"></div>
<div class="abs" style="left:2359px;top:679.2px;width:40px;height:1px;background:#c4c4c4"></div>
<div class="abs" style="left:2358px;top:734px;width:42px;height:125.5px;background:#fff;border:1px solid #bdbdbd"></div>
<div class="abs" style="left:2359px;top:775px;width:40px;height:1px;background:#c4c4c4"></div>
<div class="abs" style="left:2359px;top:816.5px;width:40px;height:1px;background:#c4c4c4"></div>
<svg style="left:2366.6px;top:484.6px" width="23" height="22" viewBox="0 0 23 22"><rect x="0.8" y="0.8" width="21.4" height="20.4" rx="3.4" fill="#fff" stroke="#333" stroke-width="1.5"/><g stroke="#333" stroke-width="1.9"><path d="M4.6,5.4 H15.6 M7.8,9.2 H18.6 M7.8,13 H18.6 M7.8,16.8 H18.6" stroke-width="2.1"/></g></svg>
<svg style="left:2366px;top:523.4px" width="25" height="25" viewBox="0 0 25 25"><g fill="#fff" stroke="#333" stroke-width="1.3" stroke-linejoin="round"><path d="M5.4,12 L14.4,7.6 L23.6,12 V20 L14.4,24.2 L5.4,20 Z"/><path d="M5.4,12 L14.4,16 L23.6,12 M14.4,16 V24.2" fill="none"/></g>
<rect x="0.6" y="0.6" width="11.6" height="9.2" fill="#1c55b8"/><path d="M4.4,0.6 V9.8 M8.4,0.6 V9.8 M0.6,3.6 H12.2 M0.6,6.8 H12.2" stroke="#fff" stroke-width="0.8"/></svg>
<svg style="left:2366.6px;top:565px" width="24" height="24" viewBox="0 0 24 24"><g fill="#ddd" stroke="#444" stroke-width="1" stroke-linejoin="round"><path d="M0.8,2.6 L2.4,0.8 H7 V5.6 L5.4,7.4 H0.8 Z"/></g>
<g fill="#fff" stroke="#444" stroke-width="1.1" stroke-linejoin="round"><path d="M9,15.4 L11.6,13.2 H14.4 V9.4 L16.8,7.6 H20.6 L23,9.4 V21.6 L20.8,23.2 H11.6 L9,21.2 Z"/><path d="M9,15.4 L11.6,17.4 V23.2 M11.6,17.4 H18 V11 H23 M18,11 L14.4,9.4" fill="none" stroke-width="0.9"/></g>
<path d="M5.4,8.6 L11,11" stroke="#1c55b8" stroke-width="1.6" stroke-dasharray="2.2 1.2"/></svg>
<svg style="left:2366.6px;top:606px" width="24" height="24" viewBox="0 0 24 24"><rect x="13.4" y="1" width="8.8" height="14" fill="#fff" stroke="#1c55b8" stroke-width="1.4" stroke-dasharray="2.4 1.6"/><rect x="0.8" y="13.8" width="21.6" height="8.6" fill="#fff" stroke="#333" stroke-width="1.4"/>
<circle cx="18" cy="18" r="3.6" fill="#fff" stroke="#1c55b8" stroke-width="1.4"/><circle cx="18" cy="18" r="1.4" fill="#333"/></svg>
<svg style="left:2367.6px;top:648.6px" width="22" height="24" viewBox="0 0 22 24"><polygon points="11,0.6 3.4,8 11,13" fill="#8dc9ee"/><polygon points="11,0.6 18.6,8 11,13" fill="#c8e6f7"/><polygon points="3.4,8 0.8,17.6 11,13" fill="#1c55b8"/><polygon points="18.6,8 21.2,17.6 11,13" fill="#9a9a9a"/><polygon points="0.8,17.6 11,23.4 11,13" fill="#2f6fd0"/><polygon points="21.2,17.6 11,23.4 11,13" fill="#bdbdbd"/>
<path d="M11,0.6 V23.4 M3.4,8 L11,13 L18.6,8 M0.8,17.6 L11,13 L21.2,17.6" stroke="#fff" stroke-width="0.9" fill="none"/></svg>
<svg style="left:2365px;top:688.6px" width="28" height="26" viewBox="0 0 28 26"><rect x="0.8" y="0.8" width="10.4" height="9.6" fill="#333"/><path d="M4.2,0.8 V10.4 M7.8,0.8 V10.4 M0.8,4 H11.2 M0.8,7.2 H11.2" stroke="#fff" stroke-width="0.9"/>
<path d="M4.6,8 C0.6,12.6 0.6,19.8 4.6,24.6" fill="none" stroke="#333" stroke-width="2.1"/><path d="M23.4,8 C27.4,12.6 27.4,19.8 23.4,24.6" fill="none" stroke="#333" stroke-width="2.1"/></svg>
<div class="t" style="left:2370.6px;top:687.7px;font-size:27px;color:#333;font-weight:bold;font-style:italic;transform:scaleX(1.1322);font-family:'Liberation Serif',serif;">x</div>
<div class="abs" style="left:2364.4px;top:740.6px;width:29px;height:29px;background:#f2f2f2;border:1px solid #d4d4d4;border-radius:4px"></div>
<svg style="left:2366px;top:742px" width="26" height="26" viewBox="0 0 26 26"><g fill="none" stroke-width="5.4"><path d="M7.2,4.6 A10,10 0 0 1 18.8,4.6" stroke="#5cb85c"/><path d="M21.4,7.2 A10,10 0 0 1 21.4,18.8" stroke="#42a5e8"/><path d="M18.8,21.4 A10,10 0 0 1 7.2,21.4" stroke="#f0ad3e"/><path d="M4.6,18.8 A10,10 0 0 1 4.6,7.2" stroke="#d9423a"/></g></svg>
<div class="abs" style="left:2364.4px;top:781.6px;width:29px;height:29px;background:#e4e4e4;border-radius:4px"></div><div class="abs" style="left:2366.4px;top:785.4px;width:25px;height:21.6px;background:#1650d8;border:1.4px solid #111"></div>
<div class="t" style="left:2368.2px;top:786.4px;font-size:21px;font-weight:bold;color:#fff;font-family:'Liberation Serif',serif;transform:scaleX(0.58);text-shadow:0 0 1px #000,0.8px 0.8px 0 #000;">MK</div>
<div class="abs" style="left:2364.4px;top:822.6px;width:29px;height:29px;background:#d9d9d9;border-radius:5px"></div>
<svg style="left:2366px;top:824.4px" width="26" height="26" viewBox="0 0 26 26"><path d="M13,13 L4.6,4.6 A11.9,11.9 0 0 1 21.4,4.6 Z" fill="#5cb85c"/><path d="M13,13 L21.4,4.6 A11.9,11.9 0 0 1 21.4,21.4 Z" fill="#42a5e8"/><path d="M13,13 L21.4,21.4 A11.9,11.9 0 0 1 4.6,21.4 Z" fill="#f0ad3e"/><path d="M13,13 L4.6,21.4 A11.9,11.9 0 0 1 4.6,4.6 Z" fill="#d9423a"/><path d="M4.6,4.6 L21.4,21.4 M21.4,4.6 L4.6,21.4" stroke="#d9d9d9" stroke-width="1.2"/></svg>
<svg style="left:2275px;top:1231px" width="21" height="15" viewBox="0 0 21 15"><path d="M0.8,8.4 H12 V14.2 H0.8 Z" fill="#fff" stroke="#333" stroke-width="1.3"/><path d="M6.8,8 V4.6 A6.6,3.8 0 0 1 20,4.6 V9.6 C20,12.6 17,14.2 12,14.2" fill="#fff" stroke="#333" stroke-width="1.3"/><ellipse cx="13.4" cy="4.8" rx="6.6" ry="3.9" fill="#fff" stroke="#333" stroke-width="1.3"/><ellipse cx="13.4" cy="4.8" rx="3.2" ry="1.5" fill="none" stroke="#333" stroke-width="1.1"/>
<path d="M3,14 V11.6 M5,14 V12.4 M7,14 V11.6 M9,14 V12.4 M11,14 V11.6 M13,14 V12.4 M15,13.4 V11.6" stroke="#333" stroke-width="0.8"/></svg>
<svg style="left:2315.6px;top:1230.6px" width="26" height="17" viewBox="0 0 26 17"><path d="M0.8,15.8 V14 A12.2,13 0 0 1 25.2,14 V15.8 Z" fill="#fff" stroke="#333" stroke-width="1.4" stroke-linejoin="round"/><path d="M5.6,12.6 A7.4,7.6 0 0 1 20.4,12.6 H16 L13,10.6 L10,12.6 Z" fill="#fff" stroke="#333" stroke-width="1.3" stroke-linejoin="round"/>
<path d="M3.2,12.4 A9.8,10.4 0 0 1 22.8,12.4" fill="none" stroke="#333" stroke-width="1.6" stroke-dasharray="0.7 1.5"/></svg>
<svg style="left:2363.4px;top:1229.4px" width="18" height="18" viewBox="0 0 18 18"><path d="M2.6,1 H15.4" stroke="#333" stroke-width="1.5"/><path d="M9,1 V15" stroke="#333" stroke-width="1.7"/><path d="M0.6,16.6 H17.4" stroke="#333" stroke-width="2"/><path d="M3.2,1.4 L0.8,11.4 H5.6 Z M14.8,1.4 L12.4,11.4 H17.2 Z" fill="none" stroke="#333" stroke-width="0.9"/><path d="M0.6,11.8 H5.8 M12.2,11.8 H17.4" stroke="#333" stroke-width="1.8"/></svg>
<svg style="left:2180px;top:105px" width="210" height="205" viewBox="2180 105 210 205">
<g fill="#e2e9f1">
<polygon points="2285.5,115 2276.3,127 2294.7,127"/>
<polygon points="2285.5,302.4 2276.3,290.4 2294.7,290.4"/>
<polygon points="2192.2,208.5 2204.2,199.4 2204.2,217.6"/>
<polygon points="2379,208.5 2367,199.4 2367,217.6"/>
</g>
<path d="M2259.6,128.6 C2245,133 2233,140 2224.6,150" fill="none" stroke="#e2e9f1" stroke-width="7"/><polygon points="2218.4,143.4 2218.6,157 2232,155.6" fill="#e2e9f1"/>
<path d="M2311.4,128.6 C2326,133 2338,140 2346.4,150" fill="none" stroke="#e2e9f1" stroke-width="7"/><polygon points="2352.6,143.4 2352.4,157 2339,155.6" fill="#e2e9f1"/>
<polygon points="2285.5,157.1 2332.5,181.8 2332.5,235.2 2285.5,259.9 2238.5,235.2 2238.5,181.8" fill="#e2e9f1" stroke="#e2e9f1" stroke-width="8" stroke-linejoin="round"/>
<polygon points="2285.5,166.2 2315.6,182.0 2285.5,199.4 2255.4,182.0" fill="#fff" stroke="#fff" stroke-width="7" stroke-linejoin="round"/>
<polygon points="2247.0,196.1 2277.0,213.5 2277.0,246.1 2247.0,230.3" fill="#fff" stroke="#fff" stroke-width="7" stroke-linejoin="round"/>
<polygon points="2294.0,213.5 2324.0,196.1 2324.0,230.3 2294.0,246.1" fill="#fff" stroke="#fff" stroke-width="7" stroke-linejoin="round"/>
<ellipse cx="2285.5" cy="209.5" rx="8.2" ry="8.2" fill="#fff" transform="rotate(0 2285.5 209.5)"/>
<ellipse cx="2244.0" cy="186.3" rx="2.6" ry="6.4" fill="#fff" transform="rotate(30 2244.0 186.3)"/>
<ellipse cx="2327.0" cy="186.3" rx="2.6" ry="6.4" fill="#fff" transform="rotate(-30 2327.0 186.3)"/>
<ellipse cx="2285.5" cy="255.4" rx="9" ry="3.4" fill="#fff" transform="rotate(0 2285.5 255.4)"/>
<path d="M2231.4,180 V239.4" stroke="#4a4ae0" stroke-width="2.2"/>
<path d="M2231.4,239.4 L2282.6,269" stroke="#e03a3a" stroke-width="2"/>
<path d="M2231.4,239.4 L2243,232.8" stroke="#3aa83a" stroke-width="2.2"/><path d="M2243,232.8 L2283,210" stroke="#7fd07f" stroke-width="1" opacity="0.8"/>
<text x="0" y="0" transform="matrix(0.87,0.5,-0.87,0.5,2286.0,178.0) " text-anchor="middle" font-size="12.5" font-style="normal" fill="#7a7a7a" font-family="Liberation Sans" dy="4.2">Top</text>
<text transform="matrix(0.87,0.5,0,1,2259.0,224.0)" text-anchor="middle" font-size="13" fill="#7a7a7a" font-family="Liberation Sans" dy="4.4">Front</text>
<text transform="matrix(0.87,-0.5,0,1,2311.5,224.0)" text-anchor="middle" font-size="13" fill="#7a7a7a" font-family="Liberation Sans" dy="4.4">Right</text>
</svg>
<div class="t" style="left:2226.6px;top:160.9px;font-size:17.6px;color:#4545e0;font-weight:bold;transform:scaleX(0.8744);">Z</div>
<div class="t" style="left:2288.0px;top:266.3px;font-size:17.4px;color:#e03a3a;font-weight:bold;transform:scaleX(0.7754);">X</div>
<div class="t" style="left:2287.6px;top:195.9px;font-size:17.4px;color:#a3dba3;transform:scaleX(0.7237);">Y</div>
<svg style="left:2329px;top:280px" width="24" height="23" viewBox="0 0 24 23"><g stroke="#333" stroke-width="1.1" stroke-linejoin="round"><polygon points="11.6,0.8 22.6,4.6 11.6,9.2 0.8,4.6" fill="#fff"/><polygon points="0.8,4.6 11.6,9.2 11.6,22.2 1.8,16.6" fill="#9a9a9a"/><polygon points="22.6,4.6 11.6,9.2 11.6,22.2 21.6,16.6" fill="#dcdcdc"/></g></svg>
<svg style="left:2363px;top:288.6px" width="10" height="6" viewBox="0 0 10 6"><polygon points="0,0 10,0 5,5.6" fill="#222"/></svg>
<svg style="left:0;top:0" width="2398" height="1294" viewBox="0 0 2398 1294">
<path d="M838.4,589.8 849.6,590.4 1262.0,827.5 1266.0,841.5 1264.0,868.9 1254.0,872.3 823.0,623.2 823.6,607.1Z" fill="#2a2c30" fill-rule="evenodd"/>
<path d="M838.3,589.9 823.6,607.1 823.5,608.9 1264.5,862.5 1266.0,841.5 1264.1,834.7Z" fill="#35383d" fill-rule="evenodd"/>
<path d="M844.6,590.1 842.3,590.0 1263.3,832.1 1262.9,830.6Z" fill="#1d1e21" fill-rule="evenodd"/>
<path d="M840.0,589.9 838.4,589.8 838.2,590.0 1264.1,834.9 1263.7,833.5Z" fill="#1d1e21" fill-rule="evenodd"/>
<path d="M823.5,608.9 823.5,610.4 1264.4,863.9 1264.5,862.5Z" fill="#17181a" fill-rule="evenodd"/>
<path d="M823.4,611.8 823.4,613.3 1264.2,866.8 1264.3,865.3Z" fill="#17181a" fill-rule="evenodd"/>
<path d="M823.4,613.3 823.0,623.2 1254.0,872.3 1264.0,868.9 1264.2,866.8Z" fill="#222427" fill-rule="evenodd"/>
<path d="M838.4,589.8 823.6,607.1 823.0,623.2 825.5,622.0 826.0,608.0 840.0,591.5Z" fill="#26282b" fill-rule="evenodd"/>
<path d="M1414.0,562.0 1240.0,659.6 1132.7,728.9 1130.6,730.2 1127.7,731.8 1124.3,733.9 1120.7,736.4 1117.4,739.1 1114.3,742.3 1111.0,745.8 1107.9,749.7 1104.8,753.7 1102.1,757.8 1099.7,762.0 1097.4,766.4 1095.4,770.9 1093.5,775.4 1091.9,779.9 1090.5,784.4 1089.2,789.0 1088.2,793.5 1087.4,797.9 1086.8,802.0 1086.5,805.9 1086.5,809.5 1086.7,813.0 1087.1,816.1 1087.7,819.0 1088.5,821.6 1089.5,823.8 1090.8,825.8 1092.2,827.6 1093.6,829.2 1095.3,830.7 1097.2,831.9 1099.2,832.9 1100.9,833.7 1102.1,834.3 1180.0,860.0 1300.0,780.0 1420.0,640.0Z" fill="#242527" fill-rule="evenodd"/>
<path d="M1133.1,729.9 L1146.7,740.5" fill="none" stroke="#3a3b3e" stroke-width="1" stroke-linecap="round" stroke-linejoin="round"/>
<path d="M1175.2,853.9 1173.4,854.9 1170.8,856.3 1167.7,857.9 1164.6,859.4 1161.6,860.7 1159.0,861.6 1156.3,862.3 1153.7,862.8 1151.0,863.4 1148.0,864.1 1144.8,864.9 1141.5,865.8 1138.0,866.7 1134.5,867.5 1131.0,868.3 1127.5,869.1 1123.8,870.0 1120.2,870.7 1116.9,871.3 1114.0,871.7 1111.8,871.9 1110.1,871.9 1108.6,871.7 1107.2,871.4 1105.5,870.9 1103.5,870.2 1101.3,869.3 1099.0,868.2 1097.0,867.0 1095.3,865.8 1094.0,864.4 1092.9,862.9 1092.1,861.3 1091.5,859.7 1091.1,858.1 1090.8,856.8 1090.8,855.6 1091.0,854.4 1091.4,853.0 1091.9,851.3 1092.6,849.4 1093.4,847.3 1094.4,845.1 1095.6,842.4 1097.0,839.4 1098.7,835.9 1100.8,831.9 1102.9,827.6 1105.1,823.2 1107.2,819.0 1109.1,814.9 1111.0,810.9 1112.9,806.8 1114.7,802.7 1116.6,798.6 1118.4,794.5 1120.3,790.2 1122.1,786.0 1124.0,782.0 1125.9,778.2 1127.9,774.8 1129.8,771.6 1131.9,768.5 1134.0,765.7 1136.1,762.9 1138.4,760.2 1140.9,757.7 1143.4,755.3 1145.8,753.1 1148.0,751.0 1149.8,749.4 1151.2,748.3 1152.6,747.2 1154.6,745.7 1157.4,743.4 1161.7,739.6 1167.3,734.8 1173.2,729.7 1178.4,725.2 1182.0,722.1 1657.0,392.2 1658.0,391.8 1659.4,391.2 1661.0,390.5 1662.8,390.2 1664.7,390.3 1666.9,391.1 1669.3,392.3 1671.9,393.8 1674.3,395.4 1676.3,397.1 1678.2,398.5 1679.9,400.0 1681.5,401.6 1682.6,403.5 1683.1,405.7 1682.9,408.6 1682.0,411.8 1680.8,415.3 1679.5,418.8 1678.3,422.2 1677.1,425.2 1675.9,428.1 1674.7,430.9 1673.5,434.1 1672.5,437.6 1671.6,441.9 1670.7,446.8 1670.0,451.9 1669.3,456.7 1668.6,460.8 1667.9,464.4 1667.2,467.6 1666.6,470.4 1666.1,472.7 1665.7,474.3 1640.0,560.0 1500.0,640.0 1350.0,740.0 1250.0,830.0Z" fill="#ecb348" fill-rule="evenodd" stroke="#f6b93f" stroke-width="2.2" stroke-linejoin="round"/>
<path d="M1101.5,868.7 L1100.9,867.9 L1100.1,866.3 L1099.5,864.7 L1099.1,863.1 L1098.8,861.8 L1098.8,860.6 L1099.0,859.4 L1099.4,858.0 L1099.9,856.3 L1100.6,854.4 L1101.4,852.3 L1102.4,850.1 L1103.6,847.4 L1105.0,844.4 L1106.7,840.9 L1108.8,836.9 L1110.9,832.6 L1113.1,828.2 L1115.2,824.0 L1117.1,819.9 L1119.0,815.9 L1120.9,811.8 L1122.7,807.7 L1124.6,803.6 L1126.4,799.5 L1128.3,795.2 L1130.1,791.0 L1132.0,787.0 L1133.9,783.2 L1135.9,779.8 L1137.8,776.6 L1139.9,773.5 L1142.0,770.7 L1144.1,767.9 L1146.4,765.2 L1148.9,762.7 L1151.4,760.3 L1153.8,758.1 L1156.0,756.0 L1157.8,754.4 L1159.2,753.3 L1160.6,752.2 L1162.6,750.7 L1165.4,748.4 L1169.7,744.6 L1175.3,739.8 L1181.2,734.7 L1186.4,730.2 L1190.0,727.1 L1665.0,397.2 L1666.0,396.8 L1667.4,396.2 L1669.0,395.5 L1670.8,395.2 L1672.7,395.3 L1673.2,395.5" fill="none" stroke="#b98a2e" stroke-width="0.9" stroke-linecap="round" stroke-linejoin="round" opacity="0.75"/>
<path d="M1206.3,750.1 1206.7,750.6 1207.0,750.9 1207.7,751.2 1207.9,751.2 1214.8,752.5 1215.0,752.5 1215.7,752.5 1216.1,752.3 1216.8,752.0 1216.9,751.8 1232.8,735.9 1232.9,735.9 1233.1,735.5 1233.2,735.4 1238.4,726.5 1238.5,726.3 1238.7,725.7 1238.7,725.3 1238.6,724.6 1238.6,724.4 1237.1,720.5 1237.0,720.3 1236.8,719.9 1236.6,719.7 1236.2,719.4 1236.0,719.2 1235.5,719.1 1235.3,719.0 1234.7,719.0 1234.6,719.0 1226.9,720.3 1226.7,720.4 1225.9,720.7 1225.7,720.8 1209.5,733.8 1209.4,733.9 1209.1,734.2 1209.0,734.2 1203.4,741.3 1203.3,741.5 1203.0,742.0 1202.9,742.3 1202.9,742.8 1202.9,743.1 1203.0,743.7 1203.1,743.8 1206.1,749.9Z" fill="#d9a13b" fill-rule="evenodd"/>
<path d="M1211.4,750.4 1211.6,750.4 1212.3,750.4 1212.7,750.2 1213.4,749.9 1213.5,749.7 1229.4,733.8 1229.5,733.8 1229.7,733.4 1229.8,733.3 1235.0,724.4 1235.1,724.2 1235.3,723.6 1235.3,723.2 1235.2,722.5 1235.2,722.3 1234.0,719.1 1226.9,720.3 1226.7,720.4 1225.9,720.7 1225.7,720.8 1209.5,733.8 1209.4,733.9 1209.1,734.2 1209.0,734.2 1203.4,741.3 1203.3,741.5 1203.0,742.0 1202.9,742.3 1202.9,742.8 1202.9,743.1 1203.0,743.7 1203.1,743.8 1205.9,749.4Z" fill="#e7ae45" fill-rule="evenodd"/>
<path d="M1206.3,750.1 1206.7,750.6 1207.0,750.9 1207.7,751.2 1207.9,751.2 1214.8,752.5 1215.0,752.5 1215.7,752.5 1216.1,752.3 1216.8,752.0 1216.9,751.8 1232.8,735.9 1232.9,735.9 1233.1,735.5 1233.2,735.4 1238.4,726.5 1238.5,726.3 1238.7,725.7 1238.7,725.3 1238.6,724.6 1238.6,724.4 1237.1,720.5 1237.0,720.3 1236.8,719.9 1236.6,719.7 1236.2,719.4 1236.0,719.2 1235.5,719.1 1235.3,719.0 1234.7,719.0 1234.6,719.0 1226.9,720.3 1226.7,720.4 1225.9,720.7 1225.7,720.8 1209.5,733.8 1209.4,733.9 1209.1,734.2 1209.0,734.2 1203.4,741.3 1203.3,741.5 1203.0,742.0 1202.9,742.3 1202.9,742.8 1202.9,743.1 1203.0,743.7 1203.1,743.8 1206.1,749.9Z" fill="none" fill-rule="evenodd" stroke="#b98a2e" stroke-width="0.7" stroke-linejoin="round" opacity="0.7"/>
<path d="M1240.5,724.0 1241.0,722.8 1241.2,721.5 1241.0,720.2 1240.5,719.0 1239.7,718.0 1238.7,717.2 1237.4,716.7 1236.2,716.5 1234.9,716.7 1233.7,717.2 1232.6,718.0 1224.1,726.5 1223.3,727.5 1222.8,728.7 1222.7,730.0 1222.8,731.3 1223.3,732.5 1224.1,733.6 1225.2,734.4 1226.4,734.9 1227.7,735.0 1228.9,734.9 1230.2,734.4 1231.2,733.6 1239.7,725.1Z" fill="#d9a13b" fill-rule="evenodd"/>
<path d="M1237.6,720.7 1237.8,719.4 1237.6,718.1 1237.1,716.9 1236.8,716.6 1236.2,716.5 1234.9,716.7 1233.7,717.2 1232.6,718.0 1224.1,726.5 1223.3,727.5 1222.8,728.7 1222.7,730.0 1222.8,731.3 1223.3,732.5 1223.6,732.8 1224.3,732.9 1225.5,732.8 1226.8,732.3 1227.8,731.5 1236.3,723.0 1237.1,721.9Z" fill="#e7ae45" fill-rule="evenodd"/>
<path d="M1240.5,724.0 1241.0,722.8 1241.2,721.5 1241.0,720.2 1240.5,719.0 1239.7,718.0 1238.7,717.2 1237.4,716.7 1236.2,716.5 1234.9,716.7 1233.7,717.2 1232.6,718.0 1224.1,726.5 1223.3,727.5 1222.8,728.7 1222.7,730.0 1222.8,731.3 1223.3,732.5 1224.1,733.6 1225.2,734.4 1226.4,734.9 1227.7,735.0 1228.9,734.9 1230.2,734.4 1231.2,733.6 1239.7,725.1Z" fill="none" fill-rule="evenodd" stroke="#b98a2e" stroke-width="0.7" stroke-linejoin="round" opacity="0.7"/>
<path d="M1290.7,709.7 1290.6,708.4 1290.1,707.1 1289.2,706.0 1288.2,705.1 1286.9,704.6 1285.6,704.4 1284.2,704.5 1282.9,705.0 1281.8,705.9 1281.0,706.9 1280.4,708.2 1270.2,743.9 1270.0,745.3 1270.2,746.6 1270.7,747.9 1271.5,749.0 1272.6,749.8 1273.8,750.4 1275.2,750.6 1276.5,750.4 1277.8,749.9 1278.9,749.1 1279.8,748.0 1280.3,746.8 1290.5,711.1Z" fill="#d9a13b" fill-rule="evenodd"/>
<path d="M1287.2,706.3 1286.7,705.0 1286.3,704.5 1285.6,704.4 1284.2,704.5 1282.9,705.0 1281.8,705.9 1281.0,706.9 1280.4,708.2 1270.2,743.9 1270.0,745.3 1270.2,746.6 1270.7,747.9 1271.0,748.4 1271.8,748.5 1273.1,748.3 1274.4,747.8 1275.5,747.0 1276.4,745.9 1276.9,744.7 1287.1,709.0 1287.3,707.6Z" fill="#e7ae45" fill-rule="evenodd"/>
<path d="M1290.7,709.7 1290.6,708.4 1290.1,707.1 1289.2,706.0 1288.2,705.1 1286.9,704.6 1285.6,704.4 1284.2,704.5 1282.9,705.0 1281.8,705.9 1281.0,706.9 1280.4,708.2 1270.2,743.9 1270.0,745.3 1270.2,746.6 1270.7,747.9 1271.5,749.0 1272.6,749.8 1273.8,750.4 1275.2,750.6 1276.5,750.4 1277.8,749.9 1278.9,749.1 1279.8,748.0 1280.3,746.8 1290.5,711.1Z" fill="none" fill-rule="evenodd" stroke="#b98a2e" stroke-width="0.7" stroke-linejoin="round" opacity="0.7"/>
<path d="M1439.4,585.5 1439.4,584.2 1439.2,583.0 1438.6,581.8 1437.8,580.8 1436.7,580.1 1435.5,579.6 1434.2,579.5 1432.9,579.8 1431.7,580.4 1430.7,581.2 1430.0,582.3 1425.7,590.8 1425.3,592.0 1425.2,593.3 1425.5,594.6 1426.0,595.8 1426.9,596.8 1428.0,597.5 1429.2,597.9 1430.5,598.0 1431.8,597.8 1433.0,597.2 1433.9,596.4 1434.7,595.3 1438.9,586.8Z" fill="#d9a13b" fill-rule="evenodd"/>
<path d="M1436.0,582.1 1435.8,580.9 1435.2,579.7 1435.2,579.6 1434.2,579.5 1432.9,579.8 1431.7,580.4 1430.7,581.2 1430.0,582.3 1425.7,590.8 1425.3,592.0 1425.2,593.3 1425.5,594.6 1426.0,595.8 1426.1,595.9 1427.1,595.9 1428.4,595.7 1429.6,595.1 1430.5,594.3 1431.3,593.2 1435.5,584.7 1436.0,583.4Z" fill="#e7ae45" fill-rule="evenodd"/>
<path d="M1439.4,585.5 1439.4,584.2 1439.2,583.0 1438.6,581.8 1437.8,580.8 1436.7,580.1 1435.5,579.6 1434.2,579.5 1432.9,579.8 1431.7,580.4 1430.7,581.2 1430.0,582.3 1425.7,590.8 1425.3,592.0 1425.2,593.3 1425.5,594.6 1426.0,595.8 1426.9,596.8 1428.0,597.5 1429.2,597.9 1430.5,598.0 1431.8,597.8 1433.0,597.2 1433.9,596.4 1434.7,595.3 1438.9,586.8Z" fill="none" fill-rule="evenodd" stroke="#b98a2e" stroke-width="0.7" stroke-linejoin="round" opacity="0.7"/>
<path d="M1439.8,588.8 1439.8,587.4 1439.5,586.1 1438.8,584.9 1437.8,583.9 1436.7,583.2 1435.3,582.9 1434.0,582.8 1432.6,583.2 1431.4,583.9 1430.5,584.8 1429.8,586.0 1424.7,597.9 1424.3,599.2 1424.3,600.6 1424.6,601.9 1425.3,603.1 1426.2,604.1 1427.4,604.8 1428.7,605.2 1430.1,605.2 1431.4,604.8 1432.6,604.2 1433.6,603.2 1434.3,602.0 1439.4,590.1Z" fill="#d9a13b" fill-rule="evenodd"/>
<path d="M1436.4,585.3 1436.1,584.0 1435.4,582.9 1435.3,582.9 1434.0,582.8 1432.6,583.2 1431.4,583.9 1430.5,584.8 1429.8,586.0 1424.7,597.9 1424.3,599.2 1424.3,600.6 1424.6,601.9 1425.2,603.0 1425.3,603.1 1426.7,603.1 1428.0,602.7 1429.2,602.1 1430.2,601.1 1430.9,599.9 1436.0,588.0 1436.4,586.7Z" fill="#e7ae45" fill-rule="evenodd"/>
<path d="M1439.8,588.8 1439.8,587.4 1439.5,586.1 1438.8,584.9 1437.8,583.9 1436.7,583.2 1435.3,582.9 1434.0,582.8 1432.6,583.2 1431.4,583.9 1430.5,584.8 1429.8,586.0 1424.7,597.9 1424.3,599.2 1424.3,600.6 1424.6,601.9 1425.3,603.1 1426.2,604.1 1427.4,604.8 1428.7,605.2 1430.1,605.2 1431.4,604.8 1432.6,604.2 1433.6,603.2 1434.3,602.0 1439.4,590.1Z" fill="none" fill-rule="evenodd" stroke="#b98a2e" stroke-width="0.7" stroke-linejoin="round" opacity="0.7"/>
<path d="M1144.4,830.6 1145.2,834.9 1146.4,838.5 1148.0,841.1 1150.1,842.6 1152.7,843.2 1155.6,843.1 1158.6,842.6 1161.6,842.0 1164.6,841.1 1167.7,839.9 1170.8,838.4 1173.9,836.5 1176.9,834.3 1179.8,831.8 1182.6,829.0 1185.4,825.9 1188.0,822.5 1190.5,819.0 1192.9,815.2 1195.2,811.1 1197.4,806.8 1199.2,802.6 1200.7,798.6 1201.8,794.9 1202.6,791.4 1203.1,788.0 1203.3,784.7 1203.3,781.6 1202.9,778.6 1202.3,775.6 1201.4,772.7 1200.3,770.2 1199.0,768.0 1197.6,766.2 1196.0,764.8 1194.3,763.6 1192.4,762.7 1190.5,762.1 1188.5,761.7 1186.4,761.8 1184.2,762.0 1182.2,762.3 1180.3,762.6 1179.6,762.6 1180.3,762.9 1181.9,763.9 1183.6,765.4 1185.3,767.2 1186.8,769.2 1188.0,771.4 1188.8,773.8 1189.3,776.3 1189.6,779.1 1189.8,782.0 1189.7,785.0 1189.4,788.2 1188.9,791.7 1188.2,795.2 1187.3,798.7 1186.3,802.0 1185.1,805.3 1183.6,808.5 1182.1,811.7 1180.4,814.6 1178.6,817.3 1176.8,819.8 1174.8,822.0 1172.7,824.1 1170.6,825.9 1168.4,827.5 1166.1,828.9 1163.7,830.1 1161.2,831.1 1158.8,832.0 1156.5,832.6 1154.3,833.3 1152.0,833.8 1149.8,834.2 1147.9,834.1 1146.3,833.5 1145.2,832.1 1144.4,830.2 1144.1,828.7ZM1143.3,808.6 1143.0,811.9 1142.9,815.3 1143.0,818.9 1143.3,822.4 1143.1,819.4 1143.0,815.9 1143.1,812.3 1143.4,808.7 1143.8,805.4Z" fill="#d9a13b" fill-rule="evenodd"/>
<path d="M1271.6,710.2 1271.5,710.2 1271.0,710.6 1270.8,710.8 1270.5,711.3 1270.4,711.4 1267.9,717.0 1267.9,717.0 1267.9,717.0 1267.9,717.0 1262.1,728.7 1262.0,728.7 1261.9,729.1 1261.9,729.2 1257.7,745.5 1257.7,745.5 1257.7,745.6 1257.7,745.7 1255.7,756.0 1255.7,756.1 1255.7,756.7 1255.8,757.0 1256.0,757.5 1256.2,757.8 1256.5,758.1 1256.8,758.3 1257.3,758.5 1257.6,758.6 1258.2,758.6 1258.4,758.6 1261.5,758.0 1261.7,758.0 1262.2,757.8 1262.4,757.7 1262.7,757.4 1262.9,757.2 1263.2,756.8 1263.3,756.6 1270.4,739.1 1280.7,713.8 1280.8,713.6 1280.9,713.1 1280.9,712.8 1280.8,712.3 1280.7,712.0 1280.5,711.6 1280.3,711.4 1279.9,711.0 1279.8,710.9 1276.6,709.1 1276.4,709.0 1275.7,708.8 1275.3,708.8 1274.6,708.9 1274.4,709.0Z" fill="#d9a13b" fill-rule="evenodd"/>
<path d="M1397.0,627.6 1396.9,627.8 1396.8,628.0 1396.7,628.2 1396.6,628.3 1392.4,632.9 1392.3,633.1 1392.0,633.5 1391.9,633.8 1391.8,634.3 1391.8,634.6 1391.9,635.1 1392.0,635.4 1392.3,635.8 1392.5,636.1 1392.9,636.4 1393.1,636.5 1402.0,640.8 1402.2,640.9 1402.9,641.1 1403.2,641.1 1403.8,641.0 1404.1,640.8 1404.7,640.4 1404.8,640.3 1415.5,628.0 1415.5,628.0 1415.6,628.0 1415.6,628.0 1436.3,603.1 1436.4,602.9 1436.8,602.0 1436.9,601.7 1438.4,588.0 1438.4,587.9 1438.4,587.4 1438.3,587.1 1438.1,586.6 1438.1,586.5 1435.1,581.8 1435.0,581.7 1434.6,581.2 1434.3,581.0 1433.8,580.8 1433.4,580.7 1432.8,580.7 1432.6,580.8 1427.5,581.9 1427.3,582.0 1426.8,582.2 1426.6,582.3 1426.2,582.7 1426.1,582.9 1423.1,587.0 1423.0,587.2 1422.7,587.9 1422.6,588.3 1422.7,589.0 1422.8,589.2 1423.3,590.8 1423.3,590.9 1423.4,591.1 1423.4,591.3 1423.4,591.4 1423.4,591.6 1423.3,591.8 1423.3,591.9 1423.2,592.1 1423.2,592.2 1423.1,592.4 1423.0,592.5 1422.9,592.6 1422.7,592.7 1410.7,602.3 1410.6,602.4 1410.3,602.7 1410.2,602.8 1400.8,615.8 1400.8,615.9 1400.5,616.4 1400.5,616.5Z" fill="#d9a13b" fill-rule="evenodd"/>
<path d="M1477.9,584.2 1477.9,584.4 1477.8,584.5 1477.7,584.6 1477.6,584.8 1472.2,590.1 1472.1,590.3 1471.7,590.8 1471.6,591.2 1471.5,591.7 1471.6,592.1 1471.7,592.6 1471.9,592.9 1472.3,593.4 1472.5,593.6 1473.1,593.9 1473.3,593.9 1482.9,596.1 1483.1,596.1 1483.8,596.1 1484.1,596.0 1484.6,595.8 1484.9,595.6 1485.4,595.1 1485.5,594.9 1491.4,584.6 1491.4,584.5 1501.5,566.0 1501.6,565.8 1501.8,565.7 1516.4,549.4 1516.5,549.3 1516.7,548.9 1516.9,548.6 1517.0,548.2 1517.0,548.0 1518.5,533.0 1518.5,532.8 1518.4,532.1 1518.3,531.7 1517.9,531.2 1517.8,531.0 1513.0,526.2 1512.8,526.0 1512.3,525.7 1512.0,525.6 1511.5,525.5 1511.1,525.5 1510.5,525.6 1510.4,525.7 1505.5,527.8 1505.3,527.9 1504.9,528.2 1504.6,528.5 1504.4,528.8 1504.2,529.1 1504.1,529.7 1504.1,529.8 1503.3,541.6 1503.3,541.8 1503.3,541.9 1503.2,542.1 1503.2,542.2 1503.1,542.4 1494.9,555.6 1494.8,555.6 1494.8,555.6 1494.8,555.7 1484.8,569.0 1484.7,569.1 1484.5,569.4 1484.5,569.5Z" fill="#d9a13b" fill-rule="evenodd"/>
<path d="M1539.8,507.6 1539.7,507.7 1539.3,508.4 1539.2,508.6 1533.6,525.0 1533.6,525.0 1529.0,538.0 1529.0,538.2 1528.9,539.1 1528.9,539.3 1530.1,546.5 1530.2,546.7 1530.4,547.2 1530.6,547.5 1530.9,547.9 1531.2,548.1 1531.7,548.3 1532.1,548.4 1532.7,548.4 1532.8,548.4 1538.0,547.3 1538.1,547.3 1538.7,547.0 1539.0,546.8 1539.5,546.3 1539.6,546.2 1545.8,535.4 1545.8,535.3 1545.9,535.1 1545.9,535.1 1555.7,512.1 1555.8,511.9 1555.9,510.9 1555.9,510.6 1554.6,503.8 1554.6,503.6 1554.3,503.0 1554.1,502.7 1553.7,502.3 1553.4,502.1 1552.8,501.9 1552.6,501.9 1547.0,501.3 1546.8,501.3 1546.1,501.4 1545.7,501.6 1545.2,501.9 1545.0,502.1Z" fill="#d9a13b" fill-rule="evenodd"/>
<path d="M1638.2,462.5 1638.1,462.6 1637.9,462.7 1637.8,462.8 1637.7,462.9 1637.5,463.0 1637.4,463.1 1637.2,463.1 1637.0,463.2 1636.9,463.2 1607.0,464.9 1606.8,465.0 1606.3,465.1 1606.0,465.3 1605.6,465.5 1605.3,465.8 1605.1,466.2 1605.0,466.5 1604.8,467.1 1604.8,467.2 1604.8,473.0 1604.8,473.2 1605.0,473.8 1605.1,474.1 1605.4,474.5 1605.6,474.8 1606.0,475.1 1606.4,475.2 1606.9,475.3 1607.1,475.3 1644.4,475.3 1644.6,475.3 1645.2,475.2 1645.5,475.1 1646.0,474.7 1646.1,474.6 1657.4,463.4 1657.5,463.2 1657.8,462.8 1657.9,462.5 1658.0,462.0 1658.1,461.9 1660.7,435.0 1660.7,434.9 1660.7,434.4 1660.6,434.1 1660.5,433.7 1660.3,433.5 1660.0,433.1 1659.9,433.0 1652.5,427.1 1652.4,427.0 1651.8,426.7 1651.5,426.6 1650.9,426.6 1650.6,426.7 1650.0,426.9 1649.8,427.0 1646.4,429.2 1646.2,429.4 1645.8,429.9 1645.6,430.2 1645.4,430.9 1645.3,431.1 1643.9,454.5 1643.9,454.7 1643.8,454.8 1643.8,455.0 1643.7,455.2 1643.6,455.3 1643.5,455.4Z" fill="#d9a13b" fill-rule="evenodd"/>
<path d="M1180.3,762.9 1181.9,763.9 1183.6,765.4 1185.3,767.2 1186.8,769.2 1188.0,771.4 1188.8,773.8 1189.3,776.3 1189.6,779.1 1189.8,782.0 1189.7,785.0 1189.4,788.2 1188.9,791.7 1188.2,795.2 1187.3,798.7 1186.3,802.0 1185.1,805.3 1183.6,808.5 1182.1,811.7 1180.4,814.6 1178.6,817.3 1176.8,819.8 1174.8,822.0 1172.7,824.1 1170.6,825.9 1168.4,827.5 1166.1,828.9 1163.7,830.1 1161.2,831.1 1158.8,832.0 1156.5,832.6 1154.3,833.3 1152.0,833.8 1149.8,834.2 1147.9,834.1 1146.3,833.5 1145.2,832.1 1144.4,830.2 1143.9,827.8 1143.5,825.2 1143.3,822.4 1143.1,819.4 1143.0,815.9 1143.1,812.3 1143.4,808.7 1143.8,805.4 1144.3,802.5 1145.1,799.7 1146.0,797.1 1146.9,794.5 1148.0,791.8 1149.2,789.0 1150.4,786.2 1151.7,783.4 1153.2,780.7 1154.8,778.2 1156.7,775.9 1158.7,773.6 1160.9,771.5 1163.0,769.6 1165.0,768.0 1166.9,766.7 1168.6,765.7 1170.3,764.9 1172.0,764.3 1173.5,763.8 1175.0,763.2 1176.3,762.7 1177.6,762.4 1178.9,762.4Z" fill="#fff" fill-rule="evenodd" stroke="#f6b93f" stroke-width="2" stroke-linejoin="round"/>
<path d="M1261.9,729.1 1262.0,728.9 1262.0,728.7 1265.1,722.7 1265.1,722.5 1265.3,721.9 1265.3,721.6 1265.2,721.1 1265.1,720.7 1264.8,720.3 1264.6,720.0 1264.1,719.7 1263.8,719.6 1263.3,719.5 1263.0,719.5 1262.4,719.6 1262.1,719.7 1261.6,720.1 1261.5,720.2 1246.7,735.7 1246.6,735.7 1246.6,735.7 1246.6,735.7 1224.6,757.7 1224.6,757.8 1224.5,757.9 1224.5,757.9 1217.1,766.6 1217.0,766.7 1216.7,767.1 1216.6,767.3 1216.5,767.8 1216.5,768.0 1216.1,773.6 1216.1,773.8 1216.3,774.5 1216.4,774.9 1216.9,775.5 1217.0,775.6 1220.7,778.6 1220.9,778.7 1221.4,778.9 1221.8,779.0 1222.3,779.1 1222.6,779.0 1223.2,778.8 1223.4,778.7 1254.2,759.7 1254.4,759.6 1254.8,759.2 1255.0,758.9 1255.3,758.3 1255.3,758.1 1257.7,745.6 1257.7,745.6 1257.7,745.6 1257.7,745.5Z" fill="#fff" fill-rule="evenodd" stroke="#f6b93f" stroke-width="2" stroke-linejoin="round"/>
<path d="M1291.8,727.4 1291.8,727.6 1291.8,728.2 1291.9,728.5 1292.1,729.0 1292.3,729.3 1292.6,729.6 1292.9,729.8 1293.4,730.0 1293.8,730.1 1294.3,730.1 1294.6,730.0 1295.2,729.7 1295.3,729.7 1315.4,715.0 1315.5,714.9 1315.8,714.5 1316.0,714.3 1316.2,713.9 1316.3,713.6 1316.3,713.1 1316.3,712.8 1316.1,712.3 1316.1,712.2 1311.1,702.3 1311.1,702.2 1310.8,701.8 1310.8,701.7 1306.7,696.9 1306.6,696.7 1306.1,696.3 1305.8,696.2 1305.3,696.0 1304.9,696.0 1304.4,696.1 1304.1,696.2 1303.6,696.5 1303.3,696.7 1303.0,697.3 1302.9,697.4 1299.9,704.5 1299.9,704.5 1293.2,721.3 1293.2,721.4 1293.1,721.7 1293.1,721.8Z" fill="#fff" fill-rule="evenodd" stroke="#f6b93f" stroke-width="2" stroke-linejoin="round"/>
<path d="M1331.9,671.1 1331.7,671.1 1331.2,671.4 1330.9,671.7 1330.5,672.2 1330.4,672.3 1327.6,678.4 1327.5,678.6 1327.4,679.2 1327.4,679.6 1327.5,680.2 1327.5,680.3 1332.4,692.6 1332.5,692.7 1332.8,693.2 1332.9,693.3 1336.8,697.8 1336.9,697.9 1337.4,698.3 1337.6,698.4 1338.1,698.6 1338.4,698.6 1338.9,698.6 1339.2,698.5 1339.7,698.3 1339.9,698.2 1364.5,679.9 1364.5,679.9 1364.5,679.9 1364.6,679.8 1387.2,665.1 1387.4,665.0 1387.8,664.6 1388.0,664.3 1388.2,663.8 1388.3,663.5 1388.3,663.0 1388.2,662.7 1388.0,662.2 1387.9,661.9 1387.5,661.6 1387.2,661.4 1386.8,661.1 1386.5,661.1 1385.9,661.0 1385.7,661.0 1364.6,664.1 1364.6,664.1 1364.5,664.1 1364.5,664.1 1339.2,668.8 1339.1,668.8 1338.9,668.9 1338.9,668.9Z" fill="#fff" fill-rule="evenodd" stroke="#f6b93f" stroke-width="2" stroke-linejoin="round"/>
<path d="M1347.9,641.1 1347.9,641.2 1347.7,641.4 1347.6,641.5 1347.5,641.7 1347.5,641.8 1347.5,642.0 1347.5,642.2 1347.6,642.4 1347.7,642.5 1347.9,642.7 1348.0,642.7 1349.2,643.5 1349.3,643.5 1349.5,643.6 1349.7,643.6 1349.9,643.6 1350.0,643.6 1373.0,637.5 1373.0,637.5 1373.0,637.5 1373.1,637.5 1390.0,635.2 1390.1,635.2 1390.3,635.1 1390.4,635.1 1390.6,634.9 1390.6,634.9 1396.7,628.2 1396.7,628.1 1396.9,627.9 1396.9,627.8 1400.5,616.2 1400.6,616.2 1400.6,616.1 1400.7,616.0 1410.4,602.6 1410.4,602.5 1410.5,602.5 1410.5,602.4 1423.8,592.1 1423.8,592.0 1424.0,591.8 1424.1,591.7 1424.1,591.4 1424.1,591.3 1424.1,591.0 1424.0,590.9 1422.9,588.6 1422.8,588.5 1422.7,588.3 1422.6,588.3 1422.4,588.2 1422.3,588.1 1422.1,588.1 1422.0,588.1 1421.8,588.1 1421.7,588.1 1421.5,588.2 1421.4,588.3 1390.1,614.0 1390.0,614.1 1390.0,614.1 1390.0,614.1 1367.9,628.0 1367.9,628.0Z" fill="#fff" fill-rule="evenodd" stroke="#f6b93f" stroke-width="2" stroke-linejoin="round"/>
<path d="M1484.5,569.4 1484.6,569.2 1484.7,569.1 1494.7,555.7 1494.8,555.7 1494.9,555.6 1494.9,555.5 1503.0,542.6 1503.1,542.4 1503.3,541.6 1503.4,541.4 1503.9,532.4 1503.9,532.3 1503.8,531.6 1503.7,531.3 1503.4,530.8 1503.1,530.6 1502.7,530.3 1502.3,530.1 1501.8,530.0 1501.4,530.1 1500.8,530.2 1500.6,530.3 1491.6,535.1 1491.5,535.2 1491.3,535.3 1491.3,535.3 1471.1,550.4 1471.1,550.5 1470.9,550.6 1470.9,550.6 1451.2,568.7 1451.0,568.9 1450.5,569.8 1450.4,570.0 1449.2,574.8 1449.2,575.0 1449.2,575.8 1449.3,576.2 1449.6,576.8 1449.7,577.0 1458.8,587.5 1458.9,587.7 1459.4,588.1 1459.6,588.2 1467.8,592.3 1468.0,592.3 1468.6,592.5 1469.0,592.5 1469.5,592.4 1469.8,592.3 1470.4,592.0 1470.5,591.8 1477.5,584.9 1477.6,584.8 1477.9,584.2 1478.0,584.1Z" fill="#fff" fill-rule="evenodd" stroke="#f6b93f" stroke-width="2" stroke-linejoin="round"/>
<path d="M1569.4,510.2 1569.3,510.1 1568.8,509.6 1568.5,509.5 1568.0,509.3 1567.6,509.3 1567.1,509.4 1566.8,509.5 1566.3,509.8 1566.0,510.0 1565.7,510.5 1565.6,510.7 1559.5,525.0 1559.4,525.0 1559.4,525.1 1559.4,525.1 1552.6,543.0 1552.5,543.2 1552.4,543.6 1552.4,543.9 1552.4,544.3 1552.5,544.4 1552.7,545.6 1552.8,545.7 1553.0,546.3 1553.2,546.6 1553.6,546.9 1553.9,547.1 1554.3,547.3 1554.7,547.3 1555.2,547.3 1555.5,547.2 1556.1,547.0 1556.2,546.9 1579.8,530.5 1579.9,530.4 1580.3,530.0 1580.5,529.7 1580.7,529.3 1580.8,528.9 1580.8,528.4 1580.7,528.1 1580.5,527.6 1580.5,527.4 1573.1,515.0 1573.1,514.9 1573.0,514.7 1572.9,514.7Z" fill="#fff" fill-rule="evenodd" stroke="#f6b93f" stroke-width="2" stroke-linejoin="round"/>
<path d="M1530.2,523.2 1530.1,523.3 1530.1,523.5 1530.1,523.6 1530.1,523.8 1530.2,523.9 1530.3,524.1 1530.4,524.2 1530.6,524.3 1530.6,524.3 1533.1,525.4 1533.2,525.4 1533.4,525.4 1533.5,525.4 1533.7,525.4 1533.8,525.3 1534.0,525.2 1534.1,525.1 1534.2,524.9 1534.2,524.9 1539.7,508.8 1539.7,508.7 1539.7,508.5 1539.7,508.4 1539.7,508.2 1539.6,508.1 1539.5,507.9 1539.4,507.9 1539.3,507.8 1539.2,507.7 1539.0,507.7 1538.9,507.7 1537.2,507.7 1537.1,507.7 1536.9,507.7 1536.8,507.8 1536.7,507.9 1536.6,508.0 1536.5,508.1 1536.4,508.2Z" fill="#fff" fill-rule="evenodd" stroke="#f6b93f" stroke-width="2" stroke-linejoin="round"/>
<path d="M1515.0,573.1 1514.9,573.2 1514.5,573.6 1514.4,573.9 1514.3,574.4 1514.2,574.7 1514.3,575.2 1514.4,575.5 1514.6,575.9 1514.8,576.2 1515.1,576.5 1515.4,576.7 1515.8,576.9 1516.2,576.9 1516.6,576.9 1517.0,576.9 1517.5,576.7 1517.6,576.6 1535.6,565.5 1535.7,565.4 1536.1,565.0 1536.3,564.8 1536.6,564.3 1536.6,564.0 1536.7,563.5 1536.6,563.2 1536.5,562.7 1536.3,562.4 1536.0,562.1 1535.8,561.8 1535.3,561.6 1535.0,561.5 1534.4,561.4 1534.3,561.4 1532.7,561.5 1532.6,561.6 1531.9,561.8 1531.8,561.8 1522.3,566.5 1522.2,566.6 1521.8,566.8 1521.8,566.9Z" fill="#fff" fill-rule="evenodd" stroke="#f6b93f" stroke-width="2" stroke-linejoin="round"/>
<path d="M1605.2,461.0 1605.1,461.1 1604.7,461.6 1604.5,461.9 1604.3,462.4 1604.3,462.8 1604.4,463.4 1604.5,463.7 1604.8,464.2 1605.1,464.4 1605.5,464.7 1605.9,464.9 1606.5,465.0 1606.7,465.0 1636.6,463.2 1636.8,463.2 1637.4,463.0 1637.7,462.8 1638.2,462.4 1638.4,462.3 1643.4,455.6 1643.5,455.5 1643.7,455.1 1643.8,454.9 1643.9,454.4 1643.9,454.3 1645.1,434.8 1645.1,434.7 1645.0,434.1 1644.9,433.8 1644.7,433.3 1644.5,433.1 1644.1,432.8 1643.8,432.6 1643.3,432.5 1643.0,432.4 1642.5,432.5 1642.2,432.6 1641.6,432.8 1641.5,432.9 1624.2,446.3Z" fill="#fff" fill-rule="evenodd" stroke="#f6b93f" stroke-width="2" stroke-linejoin="round"/>
<path d="M1150.4,786.2 1149.2,789.0 1148.0,791.8 1146.9,794.5 1146.0,797.1 1145.1,799.7 1144.3,802.5 1143.8,805.4 1143.4,808.7 1143.1,812.3 1143.0,815.9 1143.1,819.4 1143.3,822.4 1143.5,825.2 1143.9,827.8 1144.4,830.2 1145.2,832.1 1146.3,833.5 1147.9,834.1 1149.8,834.2 1152.0,833.8 1154.3,833.3 1156.5,832.6 1158.8,832.0 1161.2,831.1 1163.7,830.1 1166.1,828.9 1168.4,827.5 1170.6,825.9 1172.7,824.1 1174.8,822.0 1176.8,819.8 1178.6,817.3 1180.4,814.6 1182.1,811.7 1183.6,808.5 1185.1,805.3 1185.7,803.6 1151.5,784.0Z" fill="#242527" fill-rule="evenodd"/>
<path d="M1216.8,767.0 1216.7,767.1 1216.6,767.3 1216.5,767.8 1216.5,768.0 1216.1,773.1 1217.2,775.7 1220.7,778.6 1220.9,778.7 1221.4,778.9 1221.8,779.0 1222.3,779.1 1222.6,779.0 1223.2,778.8 1223.4,778.7 1254.2,759.7 1254.4,759.6 1254.8,759.2 1255.0,758.9 1255.3,758.3 1255.3,758.1 1257.7,745.6 1257.7,745.6 1257.7,745.6 1257.7,745.5 1258.0,744.3Z" fill="#242527" fill-rule="evenodd"/>
<path d="M1291.8,727.8 1291.8,728.2 1291.9,728.5 1292.1,729.0 1292.3,729.3 1292.6,729.6 1292.9,729.8 1293.4,730.0 1293.8,730.1 1294.3,730.1 1294.6,730.0 1295.2,729.7 1295.3,729.7 1315.4,715.0 1315.5,714.9 1315.8,714.5 1316.0,714.3 1316.2,713.9 1316.3,713.6 1316.3,713.1 1316.3,712.8 1316.1,712.3 1316.1,712.2 1315.8,711.7Z" fill="#242527" fill-rule="evenodd"/>
<path d="M1366.2,677.3 1335.8,696.7 1336.8,697.8 1336.9,697.9 1337.4,698.3 1337.6,698.4 1338.1,698.6 1338.4,698.6 1338.9,698.6 1339.2,698.5 1339.7,698.3 1339.9,698.2 1364.5,679.9 1364.5,679.9 1364.5,679.9 1364.6,679.8 1367.0,678.3Z" fill="#242527" fill-rule="evenodd"/>
<path d="M1383.2,630.4 1383.3,630.6 1383.4,631.2 1383.5,631.5 1383.8,632.0 1383.9,632.1 1387.4,635.6 1390.0,635.2 1390.1,635.2 1390.3,635.1 1390.4,635.1 1390.6,634.9 1390.6,634.9 1396.7,628.2 1396.7,628.1 1396.9,627.9 1396.9,627.8 1400.5,616.2 1400.6,616.2 1400.6,616.1 1400.7,616.0 1409.6,603.6 1409.2,603.3 1409.1,603.2 1406.5,602.2 1406.3,602.1 1405.6,602.0 1405.2,602.0 1404.5,602.3 1404.4,602.3 1390.1,614.0 1390.0,614.1 1390.0,614.1 1390.0,614.1 1383.2,618.4Z" fill="#26282b" fill-rule="evenodd"/>
<path d="M1422.2,635.2 1422.1,635.4 1421.8,636.0 1421.7,636.3 1421.7,636.9 1421.8,637.2 1422.0,637.7 1422.2,638.0 1422.6,638.4 1423.0,638.6 1423.5,638.7 1423.8,638.8 1424.4,638.7 1424.7,638.6 1425.3,638.3 1425.4,638.2 1432.4,631.9 1432.6,631.8 1432.7,631.7 1446.1,623.3 1446.1,623.3 1446.2,623.2 1446.2,623.2 1457.0,615.7 1457.1,615.6 1457.6,615.1 1457.7,614.8 1457.9,614.3 1458.0,613.9 1457.9,613.3 1457.9,613.1 1457.1,610.8 1457.0,610.6 1456.7,610.1 1456.5,609.8 1456.1,609.5 1455.7,609.4 1455.2,609.2 1454.9,609.2 1454.2,609.3 1454.1,609.4 1441.5,614.6 1441.4,614.6 1440.8,615.0 1440.7,615.1 1427.6,627.9 1427.6,627.9 1427.4,628.1 1427.3,628.2Z" fill="#242527" fill-rule="evenodd"/>
<path d="M1451.6,581.1 1451.4,581.0 1450.9,580.7 1450.6,580.7 1450.2,580.6 1449.8,580.7 1449.4,580.8 1449.1,581.0 1448.7,581.2 1448.5,581.5 1448.3,581.9 1448.2,582.2 1448.1,582.7 1448.1,582.9 1448.1,583.3 1448.1,583.5 1448.3,584.2 1448.4,584.6 1448.9,585.1 1449.1,585.3 1452.0,587.3 1452.2,587.4 1452.7,587.7 1453.1,587.8 1453.6,587.8 1454.0,587.7 1454.5,587.5 1454.7,587.3 1455.2,586.8 1455.3,586.7 1455.5,586.4 1455.5,586.2 1455.7,585.7 1455.8,585.4 1455.8,584.9 1455.7,584.5 1455.5,584.1 1455.3,583.8 1454.9,583.4 1454.8,583.3Z" fill="#242527" fill-rule="evenodd"/>
<path d="M1162.3,770.2 1160.9,771.5 1158.7,773.6 1156.7,775.9 1154.8,778.2 1153.2,780.7 1151.7,783.4 1150.4,786.2 1149.2,789.0 1148.0,791.8 1146.9,794.5 1146.0,797.1 1145.1,799.7 1144.3,802.5 1143.8,805.4 1143.4,808.4 1171.8,824.8 1172.7,824.1 1174.8,822.0 1176.8,819.8 1178.6,817.3 1180.4,814.6 1182.1,811.7 1183.6,808.5 1185.1,805.3 1186.3,802.0 1187.3,798.7 1188.2,795.2 1188.9,791.7 1189.4,788.2 1189.6,785.9Z" fill="#2a2c30" fill-rule="evenodd"/>
<path d="M1180.6,814.2 1182.1,811.7 1183.6,808.5 1185.1,805.3 1186.3,802.0 1187.3,798.7 1188.2,795.2 1188.9,791.7 1188.9,791.5 1158.4,774.0 1156.7,775.9 1154.8,778.2 1153.2,780.7 1151.7,783.4 1150.4,786.2 1149.2,789.0 1148.0,791.8 1146.9,794.5 1146.8,794.8Z" fill="#35383d" fill-rule="evenodd"/>
<path d="M1189.2,789.5 1189.4,788.4 1160.6,771.8 1159.8,772.6Z" fill="#1d1e21" fill-rule="evenodd"/>
<path d="M1188.9,791.7 1188.9,791.7 1189.0,790.6 1159.0,773.3 1158.7,773.6 1158.3,774.1Z" fill="#1d1e21" fill-rule="evenodd"/>
<path d="M1179.9,815.3 1180.4,814.6 1180.6,814.2 1146.8,794.8 1146.4,796.0Z" fill="#17181a" fill-rule="evenodd"/>
<path d="M1178.5,817.5 1178.6,817.3 1179.2,816.4 1145.9,797.3 1145.5,798.5Z" fill="#17181a" fill-rule="evenodd"/>
<path d="M1171.8,824.8 1172.7,824.1 1174.8,822.0 1176.8,819.8 1178.5,817.5 1145.5,798.5 1145.1,799.7 1144.3,802.5 1143.8,805.4 1143.4,808.4Z" fill="#222427" fill-rule="evenodd"/>
<path d="M1180.3,762.9 1181.9,763.9 1183.6,765.4 1185.3,767.2 1186.8,769.2 1188.0,771.4 1188.8,773.8 1189.3,776.3 1189.6,779.1 1189.8,782.0 1189.7,785.0 1189.4,788.2 1188.9,791.7 1188.2,795.2 1187.3,798.7 1186.3,802.0 1185.1,805.3 1183.6,808.5 1182.1,811.7 1180.4,814.6 1178.6,817.3 1176.8,819.8 1174.8,822.0 1172.7,824.1 1170.6,825.9 1168.4,827.5 1166.1,828.9 1163.7,830.1 1161.2,831.1 1158.8,832.0 1156.5,832.6 1154.3,833.3 1152.0,833.8 1149.8,834.2 1147.9,834.1 1146.3,833.5 1145.2,832.1 1144.4,830.2 1143.9,827.8 1143.5,825.2 1143.3,822.4 1143.1,819.4 1143.0,815.9 1143.1,812.3 1143.4,808.7 1143.8,805.4 1144.3,802.5 1145.1,799.7 1146.0,797.1 1146.9,794.5 1148.0,791.8 1149.2,789.0 1150.4,786.2 1151.7,783.4 1153.2,780.7 1154.8,778.2 1156.7,775.9 1158.7,773.6 1160.9,771.5 1163.0,769.6 1165.0,768.0 1166.9,766.7 1168.6,765.7 1170.3,764.9 1172.0,764.3 1173.5,763.8 1175.0,763.2 1176.3,762.7 1177.6,762.4 1178.9,762.4Z" fill="none" fill-rule="evenodd" stroke="#f6b93f" stroke-width="2" stroke-linejoin="round"/>
<path d="M1261.9,729.1 1262.0,728.9 1262.0,728.7 1265.1,722.7 1265.1,722.5 1265.3,721.9 1265.3,721.6 1265.2,721.1 1265.1,720.7 1264.8,720.3 1264.6,720.0 1264.1,719.7 1263.8,719.6 1263.3,719.5 1263.0,719.5 1262.4,719.6 1262.1,719.7 1261.6,720.1 1261.5,720.2 1246.7,735.7 1246.6,735.7 1246.6,735.7 1246.6,735.7 1224.6,757.7 1224.6,757.8 1224.5,757.9 1224.5,757.9 1217.1,766.6 1217.0,766.7 1216.7,767.1 1216.6,767.3 1216.5,767.8 1216.5,768.0 1216.1,773.6 1216.1,773.8 1216.3,774.5 1216.4,774.9 1216.9,775.5 1217.0,775.6 1220.7,778.6 1220.9,778.7 1221.4,778.9 1221.8,779.0 1222.3,779.1 1222.6,779.0 1223.2,778.8 1223.4,778.7 1254.2,759.7 1254.4,759.6 1254.8,759.2 1255.0,758.9 1255.3,758.3 1255.3,758.1 1257.7,745.6 1257.7,745.6 1257.7,745.6 1257.7,745.5Z" fill="none" fill-rule="evenodd" stroke="#f6b93f" stroke-width="2" stroke-linejoin="round"/>
<path d="M1291.8,727.4 1291.8,727.6 1291.8,728.2 1291.9,728.5 1292.1,729.0 1292.3,729.3 1292.6,729.6 1292.9,729.8 1293.4,730.0 1293.8,730.1 1294.3,730.1 1294.6,730.0 1295.2,729.7 1295.3,729.7 1315.4,715.0 1315.5,714.9 1315.8,714.5 1316.0,714.3 1316.2,713.9 1316.3,713.6 1316.3,713.1 1316.3,712.8 1316.1,712.3 1316.1,712.2 1311.1,702.3 1311.1,702.2 1310.8,701.8 1310.8,701.7 1306.7,696.9 1306.6,696.7 1306.1,696.3 1305.8,696.2 1305.3,696.0 1304.9,696.0 1304.4,696.1 1304.1,696.2 1303.6,696.5 1303.3,696.7 1303.0,697.3 1302.9,697.4 1299.9,704.5 1299.9,704.5 1293.2,721.3 1293.2,721.4 1293.1,721.7 1293.1,721.8Z" fill="none" fill-rule="evenodd" stroke="#f6b93f" stroke-width="2" stroke-linejoin="round"/>
<path d="M1331.9,671.1 1331.7,671.1 1331.2,671.4 1330.9,671.7 1330.5,672.2 1330.4,672.3 1327.6,678.4 1327.5,678.6 1327.4,679.2 1327.4,679.6 1327.5,680.2 1327.5,680.3 1332.4,692.6 1332.5,692.7 1332.8,693.2 1332.9,693.3 1336.8,697.8 1336.9,697.9 1337.4,698.3 1337.6,698.4 1338.1,698.6 1338.4,698.6 1338.9,698.6 1339.2,698.5 1339.7,698.3 1339.9,698.2 1364.5,679.9 1364.5,679.9 1364.5,679.9 1364.6,679.8 1387.2,665.1 1387.4,665.0 1387.8,664.6 1388.0,664.3 1388.2,663.8 1388.3,663.5 1388.3,663.0 1388.2,662.7 1388.0,662.2 1387.9,661.9 1387.5,661.6 1387.2,661.4 1386.8,661.1 1386.5,661.1 1385.9,661.0 1385.7,661.0 1364.6,664.1 1364.6,664.1 1364.5,664.1 1364.5,664.1 1339.2,668.8 1339.1,668.8 1338.9,668.9 1338.9,668.9Z" fill="none" fill-rule="evenodd" stroke="#f6b93f" stroke-width="2" stroke-linejoin="round"/>
<path d="M1347.9,641.1 1347.9,641.2 1347.7,641.4 1347.6,641.5 1347.5,641.7 1347.5,641.8 1347.5,642.0 1347.5,642.2 1347.6,642.4 1347.7,642.5 1347.9,642.7 1348.0,642.7 1349.2,643.5 1349.3,643.5 1349.5,643.6 1349.7,643.6 1349.9,643.6 1350.0,643.6 1373.0,637.5 1373.0,637.5 1373.0,637.5 1373.1,637.5 1390.0,635.2 1390.1,635.2 1390.3,635.1 1390.4,635.1 1390.6,634.9 1390.6,634.9 1396.7,628.2 1396.7,628.1 1396.9,627.9 1396.9,627.8 1400.5,616.2 1400.6,616.2 1400.6,616.1 1400.7,616.0 1410.4,602.6 1410.4,602.5 1410.5,602.5 1410.5,602.4 1423.8,592.1 1423.8,592.0 1424.0,591.8 1424.1,591.7 1424.1,591.4 1424.1,591.3 1424.1,591.0 1424.0,590.9 1422.9,588.6 1422.8,588.5 1422.7,588.3 1422.6,588.3 1422.4,588.2 1422.3,588.1 1422.1,588.1 1422.0,588.1 1421.8,588.1 1421.7,588.1 1421.5,588.2 1421.4,588.3 1390.1,614.0 1390.0,614.1 1390.0,614.1 1390.0,614.1 1367.9,628.0 1367.9,628.0Z" fill="none" fill-rule="evenodd" stroke="#f6b93f" stroke-width="2" stroke-linejoin="round"/>
<path d="M1484.5,569.4 1484.6,569.2 1484.7,569.1 1494.7,555.7 1494.8,555.7 1494.9,555.6 1494.9,555.5 1503.0,542.6 1503.1,542.4 1503.3,541.6 1503.4,541.4 1503.9,532.4 1503.9,532.3 1503.8,531.6 1503.7,531.3 1503.4,530.8 1503.1,530.6 1502.7,530.3 1502.3,530.1 1501.8,530.0 1501.4,530.1 1500.8,530.2 1500.6,530.3 1491.6,535.1 1491.5,535.2 1491.3,535.3 1491.3,535.3 1471.1,550.4 1471.1,550.5 1470.9,550.6 1470.9,550.6 1451.2,568.7 1451.0,568.9 1450.5,569.8 1450.4,570.0 1449.2,574.8 1449.2,575.0 1449.2,575.8 1449.3,576.2 1449.6,576.8 1449.7,577.0 1458.8,587.5 1458.9,587.7 1459.4,588.1 1459.6,588.2 1467.8,592.3 1468.0,592.3 1468.6,592.5 1469.0,592.5 1469.5,592.4 1469.8,592.3 1470.4,592.0 1470.5,591.8 1477.5,584.9 1477.6,584.8 1477.9,584.2 1478.0,584.1Z" fill="none" fill-rule="evenodd" stroke="#f6b93f" stroke-width="2" stroke-linejoin="round"/>
<path d="M1569.4,510.2 1569.3,510.1 1568.8,509.6 1568.5,509.5 1568.0,509.3 1567.6,509.3 1567.1,509.4 1566.8,509.5 1566.3,509.8 1566.0,510.0 1565.7,510.5 1565.6,510.7 1559.5,525.0 1559.4,525.0 1559.4,525.1 1559.4,525.1 1552.6,543.0 1552.5,543.2 1552.4,543.6 1552.4,543.9 1552.4,544.3 1552.5,544.4 1552.7,545.6 1552.8,545.7 1553.0,546.3 1553.2,546.6 1553.6,546.9 1553.9,547.1 1554.3,547.3 1554.7,547.3 1555.2,547.3 1555.5,547.2 1556.1,547.0 1556.2,546.9 1579.8,530.5 1579.9,530.4 1580.3,530.0 1580.5,529.7 1580.7,529.3 1580.8,528.9 1580.8,528.4 1580.7,528.1 1580.5,527.6 1580.5,527.4 1573.1,515.0 1573.1,514.9 1573.0,514.7 1572.9,514.7Z" fill="none" fill-rule="evenodd" stroke="#f6b93f" stroke-width="2" stroke-linejoin="round"/>
<path d="M1530.2,523.2 1530.1,523.3 1530.1,523.5 1530.1,523.6 1530.1,523.8 1530.2,523.9 1530.3,524.1 1530.4,524.2 1530.6,524.3 1530.6,524.3 1533.1,525.4 1533.2,525.4 1533.4,525.4 1533.5,525.4 1533.7,525.4 1533.8,525.3 1534.0,525.2 1534.1,525.1 1534.2,524.9 1534.2,524.9 1539.7,508.8 1539.7,508.7 1539.7,508.5 1539.7,508.4 1539.7,508.2 1539.6,508.1 1539.5,507.9 1539.4,507.9 1539.3,507.8 1539.2,507.7 1539.0,507.7 1538.9,507.7 1537.2,507.7 1537.1,507.7 1536.9,507.7 1536.8,507.8 1536.7,507.9 1536.6,508.0 1536.5,508.1 1536.4,508.2Z" fill="none" fill-rule="evenodd" stroke="#f6b93f" stroke-width="2" stroke-linejoin="round"/>
<path d="M1515.0,573.1 1514.9,573.2 1514.5,573.6 1514.4,573.9 1514.3,574.4 1514.2,574.7 1514.3,575.2 1514.4,575.5 1514.6,575.9 1514.8,576.2 1515.1,576.5 1515.4,576.7 1515.8,576.9 1516.2,576.9 1516.6,576.9 1517.0,576.9 1517.5,576.7 1517.6,576.6 1535.6,565.5 1535.7,565.4 1536.1,565.0 1536.3,564.8 1536.6,564.3 1536.6,564.0 1536.7,563.5 1536.6,563.2 1536.5,562.7 1536.3,562.4 1536.0,562.1 1535.8,561.8 1535.3,561.6 1535.0,561.5 1534.4,561.4 1534.3,561.4 1532.7,561.5 1532.6,561.6 1531.9,561.8 1531.8,561.8 1522.3,566.5 1522.2,566.6 1521.8,566.8 1521.8,566.9Z" fill="none" fill-rule="evenodd" stroke="#f6b93f" stroke-width="2" stroke-linejoin="round"/>
<path d="M1605.2,461.0 1605.1,461.1 1604.7,461.6 1604.5,461.9 1604.3,462.4 1604.3,462.8 1604.4,463.4 1604.5,463.7 1604.8,464.2 1605.1,464.4 1605.5,464.7 1605.9,464.9 1606.5,465.0 1606.7,465.0 1636.6,463.2 1636.8,463.2 1637.4,463.0 1637.7,462.8 1638.2,462.4 1638.4,462.3 1643.4,455.6 1643.5,455.5 1643.7,455.1 1643.8,454.9 1643.9,454.4 1643.9,454.3 1645.1,434.8 1645.1,434.7 1645.0,434.1 1644.9,433.8 1644.7,433.3 1644.5,433.1 1644.1,432.8 1643.8,432.6 1643.3,432.5 1643.0,432.4 1642.5,432.5 1642.2,432.6 1641.6,432.8 1641.5,432.9 1624.2,446.3Z" fill="none" fill-rule="evenodd" stroke="#f6b93f" stroke-width="2" stroke-linejoin="round"/>
<path d="M1120.4,859.0 1120.2,860.0 1119.8,860.9 1119.4,861.8 1118.9,862.6 1118.2,863.3 1117.6,863.9 1116.8,864.3 1116.1,864.6 1115.3,864.7 1114.6,864.6 1113.8,864.4 1113.2,864.1 1112.5,863.5 1112.0,862.9 1111.6,862.1 1111.2,861.3 1111.0,860.3 1110.9,859.4 1110.9,858.3 1111.0,857.3 1111.2,856.3 1111.6,855.3 1112.0,854.4 1112.6,853.6 1113.2,853.0 1113.9,852.4 1114.6,852.0 1115.3,851.7 1116.1,851.6 1116.9,851.6 1117.6,851.8 1118.3,852.2 1118.9,852.7 1119.4,853.4 1119.9,854.1 1120.2,855.0 1120.4,855.9 1120.6,856.9 1120.6,857.9Z" fill="#d9a13b" fill-rule="evenodd" stroke="#b98a2e" stroke-width="0.8" stroke-linejoin="round"/>
<path d="M1678.0,412.5 1677.7,413.7 1677.3,414.8 1676.8,415.8 1676.1,416.7 1675.4,417.5 1674.6,418.2 1673.8,418.7 1672.9,419.0 1672.0,419.1 1671.1,419.0 1670.3,418.8 1669.5,418.4 1668.8,417.8 1668.2,417.0 1667.6,416.2 1667.2,415.2 1667.0,414.1 1666.8,412.9 1666.8,411.8 1666.9,410.6 1667.2,409.4 1667.6,408.3 1668.1,407.3 1668.8,406.4 1669.5,405.6 1670.3,404.9 1671.1,404.4 1672.0,404.1 1672.9,404.0 1673.8,404.1 1674.6,404.3 1675.4,404.7 1676.1,405.3 1676.8,406.1 1677.3,406.9 1677.7,407.9 1678.0,409.0 1678.1,410.2 1678.1,411.3Z" fill="#d9a13b" fill-rule="evenodd" stroke="#b98a2e" stroke-width="0.8" stroke-linejoin="round"/>
<path d="M1313.3,664.9 1313.1,666.0 1312.7,667.0 1312.3,668.0 1311.7,668.8 1311.0,669.6 1310.3,670.2 1309.6,670.6 1308.8,670.9 1308.0,671.0 1307.2,671.0 1306.4,670.7 1305.7,670.4 1305.1,669.8 1304.5,669.1 1304.1,668.3 1303.7,667.4 1303.5,666.4 1303.4,665.4 1303.4,664.3 1303.5,663.2 1303.7,662.1 1304.1,661.1 1304.6,660.2 1305.2,659.3 1305.8,658.6 1306.5,658.0 1307.3,657.5 1308.1,657.2 1308.9,657.1 1309.6,657.2 1310.4,657.4 1311.1,657.8 1311.7,658.3 1312.3,659.0 1312.8,659.8 1313.1,660.7 1313.4,661.7 1313.5,662.8 1313.5,663.8Z" fill="#d9a13b" fill-rule="evenodd" stroke="#b98a2e" stroke-width="0.8" stroke-linejoin="round"/>
<defs><linearGradient id="cg" x1="0" y1="0" x2="0.5" y2="1"><stop offset="0" stop-color="#25272a"/><stop offset="0.45" stop-color="#3a3d42"/><stop offset="1" stop-color="#222427"/></linearGradient></defs>
<path d="M1565.5,473.1 1565.4,473.1 1564.8,473.3 1564.5,473.4 1564.0,473.8 1563.9,473.9 1560.7,477.7 1560.6,477.9 1560.2,478.7 1560.2,479.0 1559.2,484.8 1559.2,484.9 1559.2,485.4 1559.2,485.7 1559.4,486.1 1559.4,486.3 1562.5,492.4 1562.6,492.6 1563.3,493.3 1563.5,493.4 1593.4,511.4 1593.4,511.4 1593.4,511.4 1593.5,511.4 1599.2,515.3 1599.4,515.4 1600.0,515.6 1600.3,515.7 1600.8,515.7 1601.2,515.6 1601.7,515.3 1601.9,515.2 1621.9,500.8 1622.0,500.7 1622.5,500.2 1622.7,499.9 1622.8,499.4 1622.9,499.1 1622.8,498.5 1622.7,498.2 1622.5,497.7 1622.3,497.5 1621.8,497.1 1621.6,497.0 1574.6,472.7 1574.3,472.6 1573.4,472.4 1573.1,472.4Z" fill="url(#cg)" fill-rule="evenodd"/>
<path d="M1624.2,496.6 L1621.9,495.1 L1618.6,493.0 L1615.0,490.9 L1611.6,489.4 L1608.5,488.7 L1605.5,488.3 L1602.6,488.3 L1600.0,488.8 L1597.8,489.8 L1595.8,491.2 L1594.1,493.1 L1592.9,495.2 L1591.9,497.9 L1591.3,501.0 L1591.1,504.2 L1591.3,507.2 L1592.2,509.9 L1593.6,512.6 L1595.2,515.1 L1596.7,517.2 L1598.3,519.1 L1600.0,520.8 L1601.5,522.1 L1602.5,523.0" fill="none" stroke="#f6b93f" stroke-width="2" stroke-linecap="round" stroke-linejoin="round"/>
<path d="M1246.6,773.4 1241.6,776.3 1235.9,779.5 1230.5,782.6 1226.2,785.0 1223.3,786.5 1221.2,787.3 1219.5,788.0 1217.9,788.8 1216.0,790.1 1214.0,792.0 1212.0,794.1 1209.9,796.6 1207.9,799.2 1205.8,802.0 1203.8,805.0 1201.7,808.2 1199.7,811.6 1197.7,815.2 1195.6,819.0 1193.6,823.1 1191.5,827.5 1189.5,832.0 1187.5,836.6 1185.4,841.1 1183.4,845.6 1181.3,850.1 1179.3,854.5 1177.3,858.9 1175.2,863.2 1173.1,867.6 1170.9,871.9 1168.8,876.2 1166.8,880.1 1165.0,883.6 1163.4,886.6 1162.0,889.2 1160.8,891.5 1159.8,893.6 1159.1,895.5 1158.7,897.4 1158.6,899.0 1158.8,900.5 1159.3,901.9 1159.9,903.2 1160.8,904.4 1162.0,905.5 1163.5,906.6 1165.0,907.5 1166.7,908.3 1168.5,909.0 1170.4,909.7 1172.4,910.3 1174.6,910.7 1176.9,910.8 1179.2,910.8 1181.5,910.7 1184.1,910.3 1187.0,909.8 1190.5,909.1 1194.9,908.3 1199.9,907.2 1205.3,905.9 1210.7,904.6 1216.0,903.2 1221.1,901.8 1226.2,900.5 1231.3,899.0 1236.4,897.4 1241.5,895.5 1246.5,893.5 1251.3,891.3 1256.2,888.9 1261.4,886.4 1267.0,883.6 1273.2,880.7 1279.8,877.6 1286.7,874.3 1293.8,870.9 1301.1,867.5 1308.6,864.0 1316.5,860.5 1324.6,856.9 1332.5,853.3 1340.0,849.6 1347.2,845.8 1354.3,841.8 1361.1,837.8 1367.5,834.0 1373.5,830.6 1378.7,827.7 1383.3,825.2 1387.6,822.8 1392.0,820.4 1396.9,817.6 1402.3,814.5 1407.9,811.1 1413.7,807.6 1419.8,804.1 1426.0,800.6 1432.5,797.1 1439.2,793.6 1446.2,790.1 1453.1,786.6 1460.0,783.0 1467.1,779.2 1474.4,775.2 1481.6,771.3 1488.2,767.8 1494.0,765.0 1498.3,763.3 1501.4,762.6 1504.1,762.1 1507.4,761.2 1512.0,759.2 1518.6,755.7 1526.7,751.1 1535.2,746.1 1543.3,741.4 1550.0,737.5 1554.7,735.0 1558.1,733.3 1561.1,731.9 1564.4,730.1 1568.9,727.4 1574.9,723.4 1581.9,718.7 1589.4,713.4 1597.1,708.1 1604.5,703.0 1611.3,698.6 1617.7,694.6 1624.4,690.4 1631.8,685.4 1640.6,679.0 1651.1,670.8 1663.1,661.3 1675.8,651.0 1688.6,640.4 1701.0,630.0 1713.3,619.3 1726.0,608.0 1738.4,596.9 1749.9,586.8 1760.0,578.5 1768.3,572.6 1775.2,568.6 1781.2,565.6 1786.9,562.7 1792.7,559.0 1797.5,555.4 1799.3,553.5 1799.3,553.5 1805.5,547.1 1805.5,547.0 1811.9,540.8 1811.9,540.8 1818.4,534.7 1824.5,528.7 1830.1,522.5 1835.1,515.8 1836.9,513.2 1837.8,511.6 1840.8,505.9 1843.8,499.9 1846.6,494.0 1849.0,488.6 1851.0,483.9 1852.7,479.5 1854.2,475.3 1855.6,471.1 1857.0,466.5 1858.4,461.4 1859.9,456.1 1861.2,450.6 1862.3,445.3 1863.0,440.4 1863.3,436.0 1863.4,431.8 1863.2,427.9 1862.7,424.1 1862.0,420.3 1861.1,416.5 1860.0,412.6 1858.6,408.9 1856.9,405.4 1855.0,402.0 1852.7,398.8 1850.2,395.8 1847.4,392.9 1844.3,390.3 1841.0,388.0 1837.4,386.0 1833.4,384.2 1829.2,382.7 1824.9,381.6 1820.8,381.0 1816.8,380.8 1812.8,381.1 1808.7,381.7 1804.7,382.7 1800.7,384.0 1796.4,385.9 1791.7,388.4 1787.2,391.0 1783.3,393.4 1780.6,395.0 1700.0,455.4 1400.0,659.4 1250.0,771.4Z" fill="#ecb348" fill-rule="evenodd" stroke="#f6b93f" stroke-width="2.2" stroke-linejoin="round"/>
<path d="M1254.6,778.4 L1249.6,781.3 L1243.9,784.5 L1238.5,787.6 L1234.2,790.0 L1231.3,791.5 L1229.2,792.3 L1227.5,793.0 L1225.9,793.8 L1224.0,795.1 L1222.0,797.0 L1220.0,799.1 L1217.9,801.6 L1215.9,804.2 L1213.8,807.0 L1211.8,810.0 L1209.7,813.2 L1207.7,816.6 L1205.7,820.2 L1203.6,824.0 L1201.6,828.1 L1199.5,832.5 L1197.5,837.0 L1195.5,841.6 L1193.4,846.1 L1191.4,850.6 L1189.3,855.1 L1187.3,859.5 L1185.3,863.9 L1183.2,868.2 L1181.1,872.6 L1178.9,876.9 L1176.8,881.2 L1174.8,885.1 L1173.0,888.6 L1171.4,891.6 L1170.0,894.2 L1168.8,896.5 L1167.8,898.6 L1167.1,900.5 L1166.7,902.4 L1166.6,904.0 L1166.8,905.5 L1167.3,906.9 L1167.9,908.1" fill="none" stroke="#b98a2e" stroke-width="0.9" stroke-linecap="round" stroke-linejoin="round" opacity="0.75"/>
<path d="M1842.3,389.6 L1841.4,389.2 L1837.2,387.7 L1832.9,386.6 L1828.8,386.0 L1824.8,385.8 L1820.8,386.1 L1816.7,386.7 L1812.7,387.7 L1808.7,389.0 L1804.4,390.9 L1799.7,393.4 L1795.2,396.0 L1791.3,398.4 L1788.6,400.0 L1708.0,460.4 L1408.0,664.4 L1258.0,776.4 L1254.6,778.4" fill="none" stroke="#b98a2e" stroke-width="0.9" stroke-linecap="round" stroke-linejoin="round" opacity="0.75"/>
<path d="M1303.0,766.4 1303.6,765.1 1303.8,763.8 1303.6,762.4 1303.0,761.1 1302.2,760.1 1301.1,759.2 1299.9,758.7 1298.5,758.5 1297.1,758.7 1295.9,759.2 1294.8,760.1 1274.4,780.5 1273.5,781.5 1273.0,782.8 1272.8,784.2 1273.0,785.5 1273.5,786.8 1274.4,787.9 1275.5,788.7 1276.7,789.2 1278.1,789.4 1279.5,789.2 1280.7,788.7 1281.8,787.9 1302.2,767.5Z" fill="#d9a13b" fill-rule="evenodd"/>
<path d="M1300.2,763.0 1300.4,761.7 1300.2,760.3 1299.6,759.0 1299.3,758.6 1298.5,758.5 1297.1,758.7 1295.9,759.2 1294.8,760.1 1274.4,780.5 1273.5,781.5 1273.0,782.8 1272.8,784.2 1273.0,785.5 1273.5,786.8 1273.9,787.2 1274.7,787.3 1276.1,787.1 1277.3,786.6 1278.4,785.8 1298.8,765.4 1299.6,764.3Z" fill="#e7ae45" fill-rule="evenodd"/>
<path d="M1303.0,766.4 1303.6,765.1 1303.8,763.8 1303.6,762.4 1303.0,761.1 1302.2,760.1 1301.1,759.2 1299.9,758.7 1298.5,758.5 1297.1,758.7 1295.9,759.2 1294.8,760.1 1274.4,780.5 1273.5,781.5 1273.0,782.8 1272.8,784.2 1273.0,785.5 1273.5,786.8 1274.4,787.9 1275.5,788.7 1276.7,789.2 1278.1,789.4 1279.5,789.2 1280.7,788.7 1281.8,787.9 1302.2,767.5Z" fill="none" fill-rule="evenodd" stroke="#b98a2e" stroke-width="0.7" stroke-linejoin="round" opacity="0.7"/>
<path d="M1292.3,847.9 1292.8,846.8 1293.0,845.5 1292.9,844.3 1292.5,843.2 1291.8,842.1 1290.8,841.4 1289.7,840.8 1288.5,840.6 1287.2,840.8 1286.1,841.2 1285.1,841.9 1272.3,853.8 1271.5,854.8 1271.0,855.9 1270.8,857.1 1270.9,858.4 1271.4,859.5 1272.1,860.5 1273.0,861.3 1274.2,861.8 1275.4,862.0 1276.6,861.9 1277.8,861.5 1278.8,860.8 1291.5,848.9Z" fill="#d9a13b" fill-rule="evenodd"/>
<path d="M1289.4,844.7 1289.6,843.4 1289.5,842.2 1289.1,841.1 1288.8,840.7 1288.5,840.6 1287.2,840.8 1286.1,841.2 1285.1,841.9 1272.3,853.8 1271.5,854.8 1271.0,855.9 1270.8,857.1 1270.9,858.4 1271.4,859.5 1271.6,859.9 1272.0,859.9 1273.2,859.8 1274.4,859.4 1275.4,858.7 1288.1,846.8 1288.9,845.8Z" fill="#e7ae45" fill-rule="evenodd"/>
<path d="M1292.3,847.9 1292.8,846.8 1293.0,845.5 1292.9,844.3 1292.5,843.2 1291.8,842.1 1290.8,841.4 1289.7,840.8 1288.5,840.6 1287.2,840.8 1286.1,841.2 1285.1,841.9 1272.3,853.8 1271.5,854.8 1271.0,855.9 1270.8,857.1 1270.9,858.4 1271.4,859.5 1272.1,860.5 1273.0,861.3 1274.2,861.8 1275.4,862.0 1276.6,861.9 1277.8,861.5 1278.8,860.8 1291.5,848.9Z" fill="none" fill-rule="evenodd" stroke="#b98a2e" stroke-width="0.7" stroke-linejoin="round" opacity="0.7"/>
<path d="M1430.1,713.9 1431.1,712.8 1431.8,711.5 1432.1,710.1 1432.0,708.7 1431.6,707.3 1430.8,706.1 1429.8,705.1 1428.5,704.5 1427.1,704.2 1425.7,704.2 1424.3,704.6 1400.5,715.7 1399.3,716.5 1398.3,717.5 1397.6,718.8 1397.3,720.2 1397.4,721.6 1397.8,723.0 1398.6,724.2 1399.6,725.2 1400.9,725.9 1402.3,726.2 1403.7,726.1 1405.1,725.7 1428.9,714.6Z" fill="#d9a13b" fill-rule="evenodd"/>
<path d="M1427.7,710.7 1428.4,709.4 1428.7,708.0 1428.6,706.6 1428.2,705.2 1427.6,704.3 1427.1,704.2 1425.7,704.2 1424.3,704.6 1400.5,715.7 1399.3,716.5 1398.3,717.5 1397.6,718.8 1397.3,720.2 1397.4,721.6 1397.8,723.0 1398.4,724.0 1398.9,724.1 1400.3,724.0 1401.7,723.6 1425.5,712.5 1426.7,711.8Z" fill="#e7ae45" fill-rule="evenodd"/>
<path d="M1430.1,713.9 1431.1,712.8 1431.8,711.5 1432.1,710.1 1432.0,708.7 1431.6,707.3 1430.8,706.1 1429.8,705.1 1428.5,704.5 1427.1,704.2 1425.7,704.2 1424.3,704.6 1400.5,715.7 1399.3,716.5 1398.3,717.5 1397.6,718.8 1397.3,720.2 1397.4,721.6 1397.8,723.0 1398.6,724.2 1399.6,725.2 1400.9,725.9 1402.3,726.2 1403.7,726.1 1405.1,725.7 1428.9,714.6Z" fill="none" fill-rule="evenodd" stroke="#b98a2e" stroke-width="0.7" stroke-linejoin="round" opacity="0.7"/>
<path d="M1623.1,546.8 1623.7,545.5 1623.9,544.1 1623.7,542.8 1623.2,541.5 1622.4,540.4 1621.3,539.6 1620.0,539.0 1618.7,538.8 1617.3,539.0 1616.0,539.5 1614.9,540.3 1596.9,557.8 1596.1,558.9 1595.5,560.1 1595.3,561.5 1595.5,562.9 1596.0,564.1 1596.8,565.2 1597.9,566.1 1599.2,566.6 1600.5,566.8 1601.9,566.7 1603.1,566.2 1604.2,565.3 1622.3,547.8Z" fill="#d9a13b" fill-rule="evenodd"/>
<path d="M1620.3,543.4 1620.5,542.0 1620.3,540.7 1619.8,539.4 1619.4,538.9 1618.7,538.8 1617.3,539.0 1616.0,539.5 1614.9,540.3 1596.9,557.8 1596.1,558.9 1595.5,560.1 1595.3,561.5 1595.5,562.9 1596.0,564.1 1596.4,564.6 1597.1,564.7 1598.5,564.6 1599.7,564.1 1600.8,563.2 1618.9,545.7 1619.7,544.7Z" fill="#e7ae45" fill-rule="evenodd"/>
<path d="M1623.1,546.8 1623.7,545.5 1623.9,544.1 1623.7,542.8 1623.2,541.5 1622.4,540.4 1621.3,539.6 1620.0,539.0 1618.7,538.8 1617.3,539.0 1616.0,539.5 1614.9,540.3 1596.9,557.8 1596.1,558.9 1595.5,560.1 1595.3,561.5 1595.5,562.9 1596.0,564.1 1596.8,565.2 1597.9,566.1 1599.2,566.6 1600.5,566.8 1601.9,566.7 1603.1,566.2 1604.2,565.3 1622.3,547.8Z" fill="none" fill-rule="evenodd" stroke="#b98a2e" stroke-width="0.7" stroke-linejoin="round" opacity="0.7"/>
<path d="M1583.8,571.6 1584.2,570.5 1584.2,569.2 1584.0,568.0 1583.4,566.9 1582.6,566.0 1581.6,565.3 1580.4,564.9 1579.2,564.8 1577.9,565.1 1576.8,565.6 1575.9,566.5 1564.7,579.4 1564.0,580.4 1563.6,581.6 1563.5,582.8 1563.8,584.0 1564.3,585.2 1565.2,586.1 1566.2,586.8 1567.4,587.2 1568.6,587.2 1569.8,587.0 1570.9,586.4 1571.9,585.6 1583.1,572.7Z" fill="#d9a13b" fill-rule="evenodd"/>
<path d="M1580.8,568.4 1580.8,567.1 1580.6,565.9 1580.1,564.9 1579.2,564.8 1577.9,565.1 1576.8,565.6 1575.9,566.5 1564.7,579.4 1564.0,580.4 1563.6,581.6 1563.5,582.8 1563.8,584.0 1564.3,585.1 1565.2,585.1 1566.4,584.9 1567.5,584.3 1568.5,583.5 1579.7,570.6 1580.4,569.5Z" fill="#e7ae45" fill-rule="evenodd"/>
<path d="M1583.8,571.6 1584.2,570.5 1584.2,569.2 1584.0,568.0 1583.4,566.9 1582.6,566.0 1581.6,565.3 1580.4,564.9 1579.2,564.8 1577.9,565.1 1576.8,565.6 1575.9,566.5 1564.7,579.4 1564.0,580.4 1563.6,581.6 1563.5,582.8 1563.8,584.0 1564.3,585.2 1565.2,586.1 1566.2,586.8 1567.4,587.2 1568.6,587.2 1569.8,587.0 1570.9,586.4 1571.9,585.6 1583.1,572.7Z" fill="none" fill-rule="evenodd" stroke="#b98a2e" stroke-width="0.7" stroke-linejoin="round" opacity="0.7"/>
<path d="M1429.7,711.3 1430.7,710.2 1431.3,708.9 1431.5,707.5 1431.4,706.0 1430.9,704.7 1430.1,703.5 1429.0,702.6 1427.7,702.0 1426.3,701.7 1424.9,701.8 1423.5,702.3 1398.8,715.1 1397.7,715.9 1396.7,717.0 1396.1,718.3 1395.9,719.7 1396.0,721.1 1396.5,722.5 1397.3,723.7 1398.4,724.6 1399.7,725.2 1401.1,725.5 1402.6,725.3 1403.9,724.8 1428.6,712.1Z" fill="#d9a13b" fill-rule="evenodd"/>
<path d="M1427.3,708.1 1427.9,706.8 1428.1,705.4 1428.0,703.9 1427.5,702.6 1427.0,701.8 1426.3,701.7 1424.9,701.8 1423.5,702.3 1398.8,715.1 1397.7,715.9 1396.7,717.0 1396.1,718.3 1395.9,719.7 1396.0,721.1 1396.5,722.5 1397.0,723.2 1397.7,723.4 1399.2,723.2 1400.5,722.7 1425.2,710.0 1426.3,709.2Z" fill="#e7ae45" fill-rule="evenodd"/>
<path d="M1429.7,711.3 1430.7,710.2 1431.3,708.9 1431.5,707.5 1431.4,706.0 1430.9,704.7 1430.1,703.5 1429.0,702.6 1427.7,702.0 1426.3,701.7 1424.9,701.8 1423.5,702.3 1398.8,715.1 1397.7,715.9 1396.7,717.0 1396.1,718.3 1395.9,719.7 1396.0,721.1 1396.5,722.5 1397.3,723.7 1398.4,724.6 1399.7,725.2 1401.1,725.5 1402.6,725.3 1403.9,724.8 1428.6,712.1Z" fill="none" fill-rule="evenodd" stroke="#b98a2e" stroke-width="0.7" stroke-linejoin="round" opacity="0.7"/>
<path d="M1496.9,747.2 1497.6,746.1 1498.1,744.9 1498.2,743.6 1498.0,742.3 1497.4,741.1 1496.6,740.1 1495.5,739.3 1494.3,738.9 1493.0,738.8 1491.7,739.0 1490.5,739.5 1467.6,754.0 1466.6,754.8 1465.8,755.9 1465.4,757.1 1465.2,758.4 1465.5,759.7 1466.0,760.9 1466.8,761.9 1467.9,762.6 1469.1,763.1 1470.4,763.2 1471.7,763.0 1472.9,762.4 1495.9,748.0Z" fill="#d9a13b" fill-rule="evenodd"/>
<path d="M1494.2,744.0 1494.7,742.8 1494.8,741.5 1494.6,740.2 1494.0,739.0 1493.9,738.9 1493.0,738.8 1491.7,739.0 1490.5,739.5 1467.6,754.0 1466.6,754.8 1465.8,755.9 1465.4,757.1 1465.2,758.4 1465.5,759.7 1466.0,760.9 1466.1,761.0 1467.0,761.1 1468.3,760.9 1469.5,760.3 1492.5,745.9 1493.5,745.1Z" fill="#e7ae45" fill-rule="evenodd"/>
<path d="M1496.9,747.2 1497.6,746.1 1498.1,744.9 1498.2,743.6 1498.0,742.3 1497.4,741.1 1496.6,740.1 1495.5,739.3 1494.3,738.9 1493.0,738.8 1491.7,739.0 1490.5,739.5 1467.6,754.0 1466.6,754.8 1465.8,755.9 1465.4,757.1 1465.2,758.4 1465.5,759.7 1466.0,760.9 1466.8,761.9 1467.9,762.6 1469.1,763.1 1470.4,763.2 1471.7,763.0 1472.9,762.4 1495.9,748.0Z" fill="none" fill-rule="evenodd" stroke="#b98a2e" stroke-width="0.7" stroke-linejoin="round" opacity="0.7"/>
<path d="M1306.7,763.3 1307.2,762.1 1307.5,760.8 1307.3,759.5 1306.9,758.3 1306.1,757.2 1305.1,756.4 1303.9,755.9 1302.7,755.6 1301.4,755.8 1300.1,756.2 1299.1,757.0 1287.2,768.0 1286.3,769.0 1285.8,770.2 1285.6,771.5 1285.7,772.8 1286.1,774.0 1286.9,775.1 1287.9,775.9 1289.1,776.5 1290.4,776.7 1291.7,776.6 1292.9,776.1 1294.0,775.4 1305.9,764.3Z" fill="#d9a13b" fill-rule="evenodd"/>
<path d="M1303.8,760.0 1304.1,758.7 1303.9,757.4 1303.5,756.2 1303.2,755.7 1302.7,755.6 1301.4,755.8 1300.1,756.2 1299.1,757.0 1287.2,768.0 1286.3,769.0 1285.8,770.2 1285.6,771.5 1285.7,772.8 1286.1,774.0 1286.5,774.5 1287.0,774.6 1288.3,774.5 1289.5,774.0 1290.6,773.3 1302.5,762.2 1303.3,761.2Z" fill="#e7ae45" fill-rule="evenodd"/>
<path d="M1306.7,763.3 1307.2,762.1 1307.5,760.8 1307.3,759.5 1306.9,758.3 1306.1,757.2 1305.1,756.4 1303.9,755.9 1302.7,755.6 1301.4,755.8 1300.1,756.2 1299.1,757.0 1287.2,768.0 1286.3,769.0 1285.8,770.2 1285.6,771.5 1285.7,772.8 1286.1,774.0 1286.9,775.1 1287.9,775.9 1289.1,776.5 1290.4,776.7 1291.7,776.6 1292.9,776.1 1294.0,775.4 1305.9,764.3Z" fill="none" fill-rule="evenodd" stroke="#b98a2e" stroke-width="0.7" stroke-linejoin="round" opacity="0.7"/>
<path d="M1508.1,626.8 1508.3,625.5 1508.2,624.2 1507.7,623.0 1507.0,621.9 1506.0,621.1 1504.8,620.6 1503.5,620.3 1502.2,620.5 1501.0,620.9 1499.9,621.7 1499.1,622.7 1490.6,636.3 1490.0,637.5 1489.8,638.8 1489.9,640.1 1490.4,641.3 1491.2,642.4 1492.2,643.2 1493.4,643.7 1494.6,643.9 1495.9,643.8 1497.2,643.4 1498.2,642.6 1499.1,641.6 1507.6,628.0Z" fill="#d9a13b" fill-rule="evenodd"/>
<path d="M1504.9,623.4 1504.8,622.1 1504.3,620.9 1504.0,620.4 1503.5,620.3 1502.2,620.5 1501.0,620.9 1499.9,621.7 1499.1,622.7 1490.6,636.3 1490.0,637.5 1489.8,638.8 1489.9,640.1 1490.4,641.3 1490.7,641.8 1491.2,641.8 1492.5,641.7 1493.8,641.3 1494.8,640.5 1495.7,639.5 1504.2,625.9 1504.7,624.7Z" fill="#e7ae45" fill-rule="evenodd"/>
<path d="M1508.1,626.8 1508.3,625.5 1508.2,624.2 1507.7,623.0 1507.0,621.9 1506.0,621.1 1504.8,620.6 1503.5,620.3 1502.2,620.5 1501.0,620.9 1499.9,621.7 1499.1,622.7 1490.6,636.3 1490.0,637.5 1489.8,638.8 1489.9,640.1 1490.4,641.3 1491.2,642.4 1492.2,643.2 1493.4,643.7 1494.6,643.9 1495.9,643.8 1497.2,643.4 1498.2,642.6 1499.1,641.6 1507.6,628.0Z" fill="none" fill-rule="evenodd" stroke="#b98a2e" stroke-width="0.7" stroke-linejoin="round" opacity="0.7"/>
<path d="M1505.0,623.1 1505.4,621.8 1505.4,620.5 1505.0,619.2 1504.3,618.1 1503.4,617.2 1502.3,616.6 1501.0,616.2 1499.7,616.3 1498.4,616.6 1497.3,617.3 1496.4,618.2 1486.2,631.8 1485.6,633.0 1485.2,634.2 1485.3,635.5 1485.6,636.8 1486.3,637.9 1487.2,638.8 1488.3,639.5 1489.6,639.8 1490.9,639.8 1492.2,639.4 1493.3,638.8 1494.2,637.8 1504.4,624.2Z" fill="#d9a13b" fill-rule="evenodd"/>
<path d="M1502.0,619.7 1502.0,618.4 1501.6,617.1 1501.1,616.3 1501.0,616.2 1499.7,616.3 1498.4,616.6 1497.3,617.3 1496.4,618.2 1486.2,631.8 1485.6,633.0 1485.2,634.2 1485.3,635.5 1485.6,636.8 1486.1,637.7 1486.2,637.7 1487.5,637.7 1488.8,637.3 1489.9,636.7 1490.8,635.7 1501.0,622.1 1501.6,621.0Z" fill="#e7ae45" fill-rule="evenodd"/>
<path d="M1505.0,623.1 1505.4,621.8 1505.4,620.5 1505.0,619.2 1504.3,618.1 1503.4,617.2 1502.3,616.6 1501.0,616.2 1499.7,616.3 1498.4,616.6 1497.3,617.3 1496.4,618.2 1486.2,631.8 1485.6,633.0 1485.2,634.2 1485.3,635.5 1485.6,636.8 1486.3,637.9 1487.2,638.8 1488.3,639.5 1489.6,639.8 1490.9,639.8 1492.2,639.4 1493.3,638.8 1494.2,637.8 1504.4,624.2Z" fill="none" fill-rule="evenodd" stroke="#b98a2e" stroke-width="0.7" stroke-linejoin="round" opacity="0.7"/>
<path d="M1493.9,750.1 1495.2,750.3 1496.5,750.2 1497.7,749.7 1498.8,748.9 1499.6,747.9 1500.1,746.7 1500.3,745.4 1500.2,744.1 1499.7,742.9 1498.9,741.9 1497.9,741.1 1489.4,736.0 1488.2,735.4 1486.9,735.2 1485.6,735.4 1484.4,735.9 1483.3,736.6 1482.5,737.7 1482.0,738.9 1481.8,740.2 1482.0,741.5 1482.4,742.7 1483.2,743.7 1484.2,744.5 1492.7,749.6Z" fill="#d9a13b" fill-rule="evenodd"/>
<path d="M1491.8,748.2 1493.1,748.1 1494.3,747.6 1495.4,746.8 1496.2,745.8 1496.7,744.6 1496.9,743.3 1496.8,742.0 1496.3,740.8 1495.5,739.8 1494.8,739.2 1489.4,736.0 1488.2,735.4 1486.9,735.2 1485.6,735.4 1484.4,735.9 1483.3,736.6 1482.5,737.7 1482.0,738.9 1481.8,740.2 1482.0,741.5 1482.4,742.7 1483.2,743.7 1483.9,744.3 1489.3,747.5 1490.5,748.0Z" fill="#e7ae45" fill-rule="evenodd"/>
<path d="M1493.9,750.1 1495.2,750.3 1496.5,750.2 1497.7,749.7 1498.8,748.9 1499.6,747.9 1500.1,746.7 1500.3,745.4 1500.2,744.1 1499.7,742.9 1498.9,741.9 1497.9,741.1 1489.4,736.0 1488.2,735.4 1486.9,735.2 1485.6,735.4 1484.4,735.9 1483.3,736.6 1482.5,737.7 1482.0,738.9 1481.8,740.2 1482.0,741.5 1482.4,742.7 1483.2,743.7 1484.2,744.5 1492.7,749.6Z" fill="none" fill-rule="evenodd" stroke="#b98a2e" stroke-width="0.7" stroke-linejoin="round" opacity="0.7"/>
<path d="M1211.7,868.2 1213.2,873.1 1216.0,876.8 1220.8,879.0 1226.9,879.8 1233.0,879.4 1238.8,877.6 1244.6,874.4 1250.0,870.0 1255.1,864.1 1259.9,856.8 1263.6,849.6 1266.2,842.6 1267.9,835.5 1268.7,829.2 1268.9,823.9 1268.2,819.4 1267.0,815.6 1265.1,812.5 1262.5,810.1 1260.2,808.8 1259.0,808.9 1257.9,809.9 1256.0,811.4 1253.5,812.5 1256.0,812.2 1257.4,814.7 1257.6,819.2 1256.8,824.1 1255.3,829.4 1253.0,835.3 1250.0,841.1 1246.5,847.1 1242.4,853.0 1238.1,858.1 1233.6,862.3 1228.9,865.8 1224.5,868.3 1220.6,870.1 1217.1,871.1 1214.3,870.9 1212.5,869.3 1211.5,866.6 1210.9,863.2ZM1210.8,854.3 1210.5,858.8 1210.9,863.2 1210.6,859.2 1210.8,854.5 1211.8,849.6Z" fill="#d9a13b" fill-rule="evenodd"/>
<path d="M1327.5,776.9 1327.4,777.0 1326.9,777.4 1326.6,777.7 1326.3,778.2 1326.3,778.4 1324.9,783.3 1324.9,783.3 1324.9,783.3 1324.8,783.4 1318.1,802.0 1318.1,802.0 1318.1,802.0 1318.0,802.1 1309.6,822.3 1309.6,822.4 1309.5,822.4 1309.5,822.6 1305.2,829.7 1305.1,829.8 1304.9,830.4 1304.9,830.7 1304.9,831.2 1305.0,831.5 1305.2,832.0 1305.3,832.2 1307.0,834.8 1307.1,834.9 1307.5,835.3 1307.8,835.5 1308.3,835.7 1308.6,835.8 1309.2,835.8 1309.3,835.8 1316.8,834.5 1316.9,834.5 1317.4,834.3 1317.7,834.2 1318.0,833.9 1318.2,833.7 1318.5,833.2 1318.5,833.1 1328.2,808.9 1328.2,808.9 1328.3,808.7 1328.3,808.7 1336.4,781.2 1336.4,781.1 1336.5,780.6 1336.4,780.2 1336.3,779.8 1336.2,779.5 1335.9,779.1 1335.8,778.9 1332.8,776.0 1332.7,775.9 1332.2,775.5 1331.8,775.4 1331.3,775.3 1330.9,775.3 1330.3,775.5 1330.2,775.6Z" fill="#d9a13b" fill-rule="evenodd"/>
<path d="M1343.3,814.1 1343.1,814.1 1343.0,814.2 1342.8,814.2 1342.6,814.2 1342.4,814.2 1342.3,814.2 1342.1,814.2 1341.6,814.1 1341.5,814.0 1340.8,814.0 1340.5,814.1 1340.0,814.3 1339.7,814.4 1339.3,814.8 1339.1,815.1 1338.9,815.7 1338.8,815.8 1337.1,824.6 1337.1,824.8 1337.1,825.4 1337.2,825.7 1337.4,826.2 1337.6,826.5 1338.1,827.0 1338.2,827.1 1343.3,829.9 1343.5,829.9 1343.9,830.1 1344.2,830.2 1344.6,830.2 1344.9,830.1 1345.4,830.0 1345.5,829.9 1404.9,799.4 1405.0,799.3 1405.4,799.0 1405.6,798.8 1405.9,798.4 1406.0,798.3 1411.9,786.4 1412.0,786.3 1412.1,785.6 1412.2,785.2 1412.0,784.6 1412.0,784.4 1399.0,755.2 1398.9,755.1 1398.6,754.6 1398.6,754.5 1393.3,748.6 1393.1,748.4 1392.6,748.0 1392.2,747.9 1391.6,747.8 1391.2,747.8 1390.6,748.0 1390.4,748.1 1386.4,750.3 1386.2,750.4 1385.8,750.8 1385.6,751.1 1385.3,751.5 1385.2,751.8 1385.2,752.4 1385.2,752.7 1385.4,753.3 1385.5,753.4 1392.0,765.0 1392.0,765.0 1392.0,765.0 1392.0,765.1 1398.5,778.0 1398.6,778.2 1398.7,778.4 1398.7,778.5 1398.7,778.7 1398.7,778.9 1398.7,779.1 1398.7,779.3 1396.5,788.0 1396.4,788.2 1396.4,788.3 1396.3,788.5 1396.2,788.6 1396.1,788.8 1396.0,788.9 1395.8,789.0 1395.7,789.1 1395.5,789.2 1369.9,801.6 1369.9,801.6Z" fill="#d9a13b" fill-rule="evenodd"/>
<path d="M1453.3,730.9 1453.2,731.0 1453.2,731.1 1437.9,753.1 1437.9,753.1 1437.9,753.1 1437.9,753.1 1423.8,772.4 1423.7,772.5 1423.5,773.0 1423.4,773.3 1423.3,773.8 1423.4,774.1 1423.5,774.6 1423.5,774.8 1426.3,780.7 1426.3,780.8 1426.7,781.3 1426.9,781.5 1427.3,781.8 1427.6,781.9 1428.2,782.0 1428.4,782.0 1435.0,782.0 1435.2,782.0 1435.9,781.8 1436.3,781.7 1436.8,781.2 1437.0,781.1 1456.5,755.0 1456.6,754.9 1456.7,754.7 1456.7,754.7 1473.3,724.9 1473.4,724.6 1473.6,723.7 1473.6,723.5 1472.9,708.4 1472.8,708.2 1472.6,707.5 1472.4,707.2 1471.9,706.7 1471.8,706.5 1467.0,703.4 1466.9,703.3 1466.3,703.0 1466.0,703.0 1465.5,703.0 1465.1,703.0 1464.7,703.2 1464.4,703.4 1464.0,703.8 1463.9,704.0 1458.3,712.0 1458.2,712.1 1458.0,712.6 1457.9,712.9 1457.9,713.4 1457.9,713.7 1458.1,714.3 1458.1,714.4 1459.3,716.6 1459.4,716.8 1459.4,717.0 1459.5,717.1 1459.5,717.3 1459.5,717.5 1459.5,717.7 1459.4,717.9 1459.4,718.0 1459.3,718.2Z" fill="#d9a13b" fill-rule="evenodd"/>
<path d="M1477.2,747.8 1477.1,747.9 1477.0,748.1 1476.8,748.2 1469.1,753.1 1469.0,753.2 1468.3,753.9 1468.2,754.1 1465.2,759.9 1465.1,760.0 1465.0,760.5 1464.9,760.8 1465.0,761.3 1465.0,761.6 1465.2,762.0 1465.4,762.3 1465.8,762.7 1465.9,762.8 1469.1,765.0 1469.2,765.1 1469.7,765.3 1470.0,765.4 1470.5,765.5 1470.8,765.4 1471.4,765.2 1471.5,765.2 1493.3,753.5 1493.4,753.4 1493.8,753.1 1494.0,752.9 1494.3,752.5 1494.4,752.3 1497.7,744.3 1497.8,744.1 1497.9,743.5 1497.9,743.2 1497.8,742.7 1497.7,742.4 1497.4,742.0 1497.3,741.8 1493.4,737.3 1493.2,737.2 1492.8,736.8 1492.5,736.6 1492.0,736.5 1491.6,736.5 1491.0,736.6 1490.9,736.6 1485.4,738.4 1485.2,738.5 1484.4,739.1 1484.2,739.3Z" fill="#d9a13b" fill-rule="evenodd"/>
<path d="M1675.6,505.2 1675.5,505.2 1674.9,505.3 1674.6,505.5 1674.2,505.8 1674.0,506.0 1673.7,506.5 1673.6,506.8 1673.6,507.3 1673.6,507.6 1673.7,508.1 1673.8,508.4 1674.1,508.8 1674.2,509.0 1677.5,512.2 1677.6,512.3 1678.2,512.7 1678.5,512.8 1679.2,512.9 1679.4,512.9 1731.4,509.2 1731.5,509.2 1732.1,509.0 1732.4,508.9 1732.9,508.5 1733.0,508.4 1745.4,494.3 1745.5,494.1 1745.7,493.7 1745.8,493.5 1745.9,493.0 1746.0,492.9 1747.7,475.5 1747.7,475.3 1747.6,474.6 1747.5,474.3 1747.1,473.7 1747.0,473.5 1741.0,467.5 1740.8,467.4 1740.2,467.0 1739.8,466.9 1739.1,466.8 1738.9,466.8 1731.5,468.0 1731.4,468.1 1730.8,468.3 1730.5,468.5 1730.2,468.8 1730.0,469.0 1729.8,469.5 1729.7,469.8 1729.6,470.3 1729.7,470.6 1729.8,471.1 1729.9,471.3 1733.0,477.6 1733.1,477.7 1733.1,477.9 1733.2,478.1 1733.2,478.2 1733.2,478.4 1733.2,478.6 1733.2,478.7 1733.1,478.9 1728.7,493.0 1728.7,493.1 1728.6,493.3 1728.5,493.4 1728.4,493.6 1728.3,493.7 1728.1,493.8 1728.0,493.9 1727.9,494.0 1713.4,501.6 1713.2,501.7 1713.0,501.8 1712.9,501.8 1712.7,501.8Z" fill="#d9a13b" fill-rule="evenodd"/>
<path d="M1762.2,467.8 1760.6,475.7 1759.4,483.5 1758.5,490.6 1759.4,484.1 1760.6,476.2 1762.2,467.9 1764.6,460.5ZM1757.4,502.7 1757.6,507.9 1758.5,512.7 1760.5,517.2 1763.2,521.2 1766.6,524.6 1770.6,526.8 1775.4,527.8 1780.9,527.8 1786.8,526.8 1792.7,524.8 1798.8,521.6 1805.1,517.2 1811.3,512.1 1816.8,506.7 1821.5,500.8 1825.7,494.4 1829.5,487.6 1832.9,480.6 1836.1,473.1 1839.0,465.1 1841.3,457.3 1842.9,450.4 1843.6,444.5 1843.6,439.2 1843.0,434.5 1841.9,430.3 1840.3,426.6 1838.1,423.3 1835.5,420.5 1832.9,418.3 1830.3,416.5 1827.6,415.1 1824.5,414.4 1820.8,414.2 1816.4,414.8 1814.6,415.2 1816.7,414.8 1820.8,415.3 1823.9,417.5 1826.2,421.2 1827.8,425.7 1828.9,430.3 1829.4,434.9 1829.3,439.7 1828.8,444.9 1827.9,450.4 1826.7,456.6 1825.2,463.2 1823.2,470.0 1820.8,476.5 1818.0,482.9 1814.6,489.2 1810.9,495.2 1806.8,500.6 1802.1,505.6 1797.0,510.1 1791.7,513.9 1786.7,516.7 1781.8,518.6 1777.0,519.6 1772.5,519.7 1768.6,518.7 1765.3,516.3 1762.4,512.7 1760.2,508.6 1758.5,504.7 1757.7,501.5 1757.6,500.0Z" fill="#d9a13b" fill-rule="evenodd"/>
<path d="M1256.0,812.2 1252.5,812.7 1247.7,815.0 1243.2,817.3 1239.8,818.8 1236.6,820.2 1233.0,822.4 1228.5,825.8 1223.7,829.9 1219.4,834.3 1216.2,839.2 1213.6,844.5 1211.8,849.6 1210.8,854.5 1210.6,859.2 1210.9,863.2 1211.5,866.6 1212.5,869.3 1214.3,870.9 1217.1,871.1 1220.6,870.1 1224.5,868.3 1228.9,865.8 1233.6,862.3 1238.1,858.1 1242.4,853.0 1246.5,847.1 1250.0,841.1 1253.0,835.3 1255.3,829.4 1256.8,824.1 1257.6,819.2 1257.4,814.7Z" fill="#fff" fill-rule="evenodd" stroke="#f6b93f" stroke-width="2" stroke-linejoin="round"/>
<path d="M1325.2,782.3 1325.2,782.1 1325.2,781.5 1325.2,781.2 1325.1,780.7 1324.9,780.4 1324.6,780.0 1324.3,779.8 1323.9,779.6 1323.6,779.5 1323.1,779.4 1322.7,779.4 1322.2,779.6 1322.0,779.6 1301.2,790.0 1301.2,790.1 1300.9,790.2 1300.9,790.2 1284.8,801.5 1284.7,801.6 1284.3,802.0 1284.1,802.3 1283.9,802.8 1283.9,803.0 1282.6,809.4 1282.5,809.6 1282.6,810.3 1282.7,810.6 1282.9,811.2 1283.0,811.4 1289.0,818.8 1289.0,818.9 1289.3,819.2 1289.4,819.2 1302.4,829.3 1302.6,829.4 1303.2,829.7 1303.5,829.8 1304.1,829.8 1304.4,829.8 1304.9,829.5 1305.2,829.3 1305.7,828.9 1305.8,828.7 1309.5,822.6 1309.5,822.5 1309.6,822.3 1309.6,822.3 1318.0,802.1 1318.0,802.1 1318.1,802.0 1318.1,802.0 1324.8,783.4 1324.8,783.4 1324.9,783.3 1324.9,783.2Z" fill="#fff" fill-rule="evenodd" stroke="#f6b93f" stroke-width="2" stroke-linejoin="round"/>
<path d="M1275.5,844.9 1279.3,841.1 1280.6,844.5 1277.2,850.5Z" fill="#fff" fill-rule="evenodd" stroke="#f6b93f" stroke-width="2" stroke-linejoin="round"/>
<path d="M1360.3,761.2 1360.2,761.3 1359.7,761.7 1359.4,761.9 1359.1,762.4 1359.0,762.6 1354.6,773.5 1354.6,773.5 1346.1,795.6 1340.2,811.1 1340.2,811.3 1340.1,811.9 1340.1,812.3 1340.2,812.8 1340.4,813.1 1340.8,813.5 1341.1,813.8 1341.6,814.0 1341.8,814.1 1341.9,814.1 1342.0,814.1 1342.5,814.2 1342.8,814.2 1343.3,814.0 1343.5,814.0 1369.9,801.6 1369.9,801.6 1395.3,789.3 1395.4,789.2 1395.9,788.8 1396.2,788.5 1396.5,787.9 1396.5,787.7 1398.6,779.5 1398.6,779.3 1398.7,778.8 1398.6,778.5 1398.5,778.0 1398.4,777.8 1392.1,765.1 1392.0,765.1 1392.0,765.0 1392.0,765.0 1385.4,753.2 1385.3,753.0 1384.9,752.6 1384.7,752.4 1384.3,752.2 1384.0,752.1 1383.5,752.0 1383.2,752.0 1382.7,752.1 1382.5,752.2Z" fill="#fff" fill-rule="evenodd" stroke="#f6b93f" stroke-width="2" stroke-linejoin="round"/>
<path d="M1404.8,738.8 1404.6,738.9 1404.1,739.3 1403.9,739.5 1403.7,740.0 1403.6,740.3 1403.5,740.9 1403.6,741.2 1403.8,741.8 1403.8,742.0 1412.4,756.5 1412.4,756.5 1412.4,756.5 1412.4,756.5 1421.2,770.7 1421.3,770.8 1421.7,771.3 1422.0,771.4 1422.5,771.7 1422.8,771.7 1423.3,771.8 1423.6,771.7 1424.1,771.5 1424.4,771.4 1424.8,771.0 1424.9,770.8 1437.9,753.1 1437.9,753.1 1437.9,753.1 1438.0,753.1 1453.1,731.2 1453.2,731.1 1453.3,730.9 1453.3,730.8 1459.2,718.5 1459.3,718.3 1459.4,717.6 1459.4,717.2 1459.2,716.5 1459.1,716.3 1458.5,715.1 1458.4,715.0 1458.1,714.5 1457.8,714.3 1457.4,714.1 1457.0,714.0 1456.5,713.9 1456.2,713.9 1455.6,714.1 1455.5,714.1 1426.0,728.5Z" fill="#fff" fill-rule="evenodd" stroke="#f6b93f" stroke-width="2" stroke-linejoin="round"/>
<path d="M1467.7,751.8 1480.4,737.8 1484.7,738.7 1477.0,748.0 1468.5,753.5Z" fill="#fff" fill-rule="evenodd" stroke="#f6b93f" stroke-width="2" stroke-linejoin="round"/>
<path d="M1597.1,551.8 1597.1,551.8 1596.8,551.9 1596.7,552.0 1596.6,552.1 1596.5,552.2 1596.5,552.5 1596.5,552.5 1595.5,567.4 1595.5,567.4 1595.5,567.6 1595.6,567.7 1595.7,567.9 1595.7,568.0 1595.9,568.1 1595.9,568.1 1598.1,569.4 1598.2,569.5 1598.4,569.5 1598.5,569.5 1598.7,569.5 1598.8,569.5 1599.0,569.4 1599.1,569.3 1599.2,569.2 1599.3,569.1 1599.3,568.9 1599.4,568.8 1601.1,552.0 1601.1,551.9 1601.1,551.7 1601.1,551.6 1601.0,551.4 1600.9,551.4 1600.8,551.2 1600.7,551.2 1600.5,551.1 1600.4,551.1 1600.2,551.1 1600.2,551.1Z" fill="#fff" fill-rule="evenodd" stroke="#f6b93f" stroke-width="2" stroke-linejoin="round"/>
<path d="M1565.7,572.1 1565.6,572.1 1565.4,572.3 1565.3,572.3 1565.2,572.5 1565.1,572.6 1565.1,572.9 1565.0,572.9 1565.0,578.2 1565.1,578.2 1565.1,578.5 1565.2,578.6 1565.3,578.7 1565.4,578.8 1565.5,578.9 1565.7,579.0 1565.9,579.0 1566.0,579.0 1570.3,578.5 1570.3,578.5 1570.5,578.4 1570.6,578.4 1570.7,578.3 1570.8,578.2 1570.9,578.0 1571.0,577.9 1571.0,577.7 1571.0,577.7 1571.0,571.7 1571.0,571.6 1571.0,571.4 1570.9,571.3 1570.8,571.2 1570.7,571.1 1570.6,571.0 1570.5,570.9 1570.3,570.9 1570.2,570.9 1570.0,570.9 1569.9,570.9Z" fill="#fff" fill-rule="evenodd" stroke="#f6b93f" stroke-width="2" stroke-linejoin="round"/>
<path d="M1482.7,700.7 1482.5,700.7 1481.8,700.8 1481.5,700.9 1481.0,701.1 1480.7,701.4 1480.3,701.8 1480.2,702.1 1480.0,702.8 1480.0,703.0 1480.0,711.4 1480.0,711.6 1480.1,712.1 1480.2,712.4 1480.4,712.8 1480.6,713.0 1481.0,713.3 1481.3,713.5 1481.8,713.7 1481.9,713.7 1489.7,715.0 1489.8,715.0 1490.6,715.0 1490.7,714.9 1503.2,711.8 1503.4,711.7 1504.1,711.4 1504.3,711.3 1508.1,708.2 1508.2,708.1 1508.6,707.7 1508.8,707.4 1508.9,706.9 1509.0,706.5 1508.9,706.0 1508.8,705.7 1508.6,705.3 1508.4,705.0 1508.0,704.7 1507.7,704.5 1507.1,704.3 1506.9,704.3 1497.1,703.2 1497.0,703.2 1497.0,703.2 1496.9,703.2Z" fill="#fff" fill-rule="evenodd" stroke="#f6b93f" stroke-width="2" stroke-linejoin="round"/>
<path d="M1719.8,466.8 1719.7,466.8 1719.1,466.8 1718.7,466.9 1718.2,467.1 1718.0,467.2 1693.8,484.0 1693.7,484.0 1693.7,484.0 1693.7,484.0 1672.6,499.8 1672.5,500.0 1672.1,500.4 1671.9,500.8 1671.7,501.3 1671.7,501.7 1671.8,502.2 1671.9,502.6 1672.3,503.1 1672.4,503.3 1673.6,504.5 1673.7,504.6 1674.3,504.9 1674.7,505.1 1675.3,505.2 1675.5,505.2 1712.5,501.8 1712.7,501.8 1713.3,501.6 1713.5,501.5 1727.6,494.1 1727.8,494.0 1728.2,493.7 1728.4,493.4 1728.7,492.9 1728.8,492.7 1733.0,479.1 1733.1,479.0 1733.1,478.4 1733.1,478.1 1733.0,477.5 1732.9,477.3 1729.0,469.6 1728.9,469.4 1728.5,468.9 1728.2,468.7 1727.5,468.4 1727.3,468.3Z" fill="#fff" fill-rule="evenodd" stroke="#f6b93f" stroke-width="2" stroke-linejoin="round"/>
<path d="M1713.3,545.3 1713.4,545.2 1713.4,544.6 1713.4,544.2 1713.2,543.7 1713.1,543.4 1712.8,543.0 1712.5,542.8 1712.0,542.6 1711.7,542.5 1711.2,542.4 1710.9,542.4 1710.3,542.6 1710.1,542.7 1693.8,551.6 1693.7,551.6 1693.7,551.6 1693.7,551.7 1673.0,562.0 1672.8,562.1 1672.3,562.5 1672.1,562.8 1671.8,563.3 1671.7,563.7 1671.7,564.3 1671.8,564.7 1672.1,565.3 1672.2,565.4 1682.1,578.6 1682.1,578.6 1682.2,578.7 1682.2,578.8 1693.3,591.4 1693.4,591.5 1693.9,591.9 1694.2,592.1 1694.7,592.2 1695.1,592.2 1695.6,592.1 1695.9,592.0 1696.4,591.7 1696.6,591.5 1697.0,591.0 1697.0,590.8 1705.3,571.1 1705.3,571.0 1705.3,570.9 1705.4,570.9Z" fill="#fff" fill-rule="evenodd" stroke="#f6b93f" stroke-width="2" stroke-linejoin="round"/>
<path d="M1653.1,576.9 1652.9,576.8 1652.5,576.4 1652.2,576.3 1651.8,576.1 1651.5,576.1 1651.0,576.1 1650.7,576.2 1650.2,576.4 1650.0,576.5 1637.0,585.2 1636.8,585.3 1636.2,585.9 1636.1,586.0 1630.1,596.6 1630.0,596.8 1629.8,597.3 1629.8,597.6 1629.8,598.1 1629.8,598.3 1632.7,614.0 1632.7,614.2 1632.9,614.7 1633.1,615.0 1633.4,615.3 1633.7,615.5 1634.1,615.7 1634.4,615.8 1635.0,615.9 1635.2,615.9 1660.9,612.8 1661.1,612.8 1661.7,612.6 1662.0,612.4 1662.4,612.0 1662.6,611.8 1667.4,604.9 1667.5,604.8 1667.7,604.3 1667.8,604.0 1667.8,603.5 1667.8,603.3 1667.1,594.8 1667.1,594.6 1667.0,594.2 1666.9,593.9 1666.6,593.5 1666.6,593.4Z" fill="#fff" fill-rule="evenodd" stroke="#f6b93f" stroke-width="2" stroke-linejoin="round"/>
<path d="M1740.8,541.1 1740.8,541.2 1740.7,541.5 1740.7,541.6 1740.8,541.9 1740.9,542.0 1741.1,542.3 1741.1,542.3 1743.7,544.4 1743.8,544.4 1744.0,544.5 1744.2,544.6 1744.4,544.6 1744.5,544.6 1744.8,544.5 1744.9,544.4 1745.1,544.3 1745.2,544.2 1745.3,543.9 1745.3,543.9 1748.6,533.6 1748.7,533.5 1748.7,533.2 1748.7,533.0 1748.6,532.8 1748.5,532.6 1748.2,532.4 1748.2,532.4 1746.5,531.4 1746.4,531.3 1746.1,531.2 1746.0,531.2 1745.7,531.2 1745.6,531.3 1745.3,531.4 1745.2,531.5 1745.1,531.8 1745.0,531.8Z" fill="#fff" fill-rule="evenodd" stroke="#f6b93f" stroke-width="2" stroke-linejoin="round"/>
<path d="M1758.5,490.6 1759.4,484.1 1760.6,476.2 1762.2,467.9 1764.6,460.5 1767.8,453.8 1771.7,447.5 1776.1,441.7 1780.6,436.4 1785.4,431.5 1790.4,427.1 1795.6,423.3 1800.7,420.3 1806.0,417.8 1811.5,415.8 1816.7,414.8 1820.8,415.3 1823.9,417.5 1826.2,421.2 1827.8,425.7 1828.9,430.3 1829.4,434.9 1829.3,439.7 1828.8,444.9 1827.9,450.4 1826.7,456.6 1825.2,463.2 1823.2,470.0 1820.8,476.5 1818.0,482.9 1814.6,489.2 1810.9,495.2 1806.8,500.6 1802.1,505.6 1797.0,510.1 1791.7,513.9 1786.7,516.7 1781.8,518.6 1777.0,519.6 1772.5,519.7 1768.6,518.7 1765.3,516.3 1762.4,512.7 1760.2,508.6 1758.5,504.7 1757.7,501.5 1757.5,498.6 1757.9,495.2Z" fill="#fff" fill-rule="evenodd" stroke="#f6b93f" stroke-width="2" stroke-linejoin="round"/>
<defs><linearGradient id="hg2" x1="0" y1="0" x2="0.5" y2="1"><stop offset="0" stop-color="#26282b"/><stop offset="0.4" stop-color="#34373c"/><stop offset="0.75" stop-color="#222427"/><stop offset="1" stop-color="#1a1b1d"/></linearGradient></defs>
<path d="M1517.3,617.7 1517.2,617.8 1517.1,618.4 1517.1,618.7 1517.2,619.2 1517.4,619.5 1517.6,620.0 1517.9,620.2 1518.3,620.5 1518.5,620.6 1537.9,629.0 1538.1,629.1 1538.7,629.2 1539.1,629.2 1539.6,629.1 1540.0,628.9 1540.5,628.5 1540.6,628.4 1554.5,611.4 1554.6,611.2 1554.9,610.7 1555.0,610.6 1559.1,598.9 1559.1,598.7 1559.2,598.1 1559.2,597.8 1559.0,597.2 1558.9,596.9 1558.5,596.5 1558.2,596.3 1557.7,596.0 1557.5,595.9 1537.4,590.9 1537.2,590.9 1536.7,590.9 1536.4,590.9 1536.0,591.0 1535.7,591.1 1535.3,591.4 1535.2,591.5 1522.9,603.8 1522.8,604.0 1522.4,604.6 1522.3,604.7Z" fill="url(#hg2)" fill-rule="evenodd"/>
<path d="M1418.9,675.6 1441.1,662.0 1443.1,664.7 1424.0,674.3Z" fill="#242527" fill-rule="evenodd"/>
<path d="M1451.4,648.0 1451.2,648.1 1450.7,648.5 1450.5,648.7 1450.1,649.3 1450.0,649.4 1447.9,655.2 1443.4,667.1 1443.4,667.3 1443.3,667.9 1443.3,668.3 1443.5,668.9 1443.7,669.2 1444.2,669.7 1444.3,669.8 1454.8,676.6 1454.9,676.7 1455.4,676.9 1455.7,677.0 1456.1,677.0 1456.4,677.0 1456.9,676.8 1457.1,676.7 1457.6,676.4 1457.7,676.3 1464.7,668.9 1464.8,668.9 1464.9,668.7 1465.0,668.7 1474.8,655.6 1474.9,655.5 1475.1,654.9 1475.2,654.8 1478.2,645.5 1478.2,645.3 1478.3,644.8 1478.3,644.5 1478.2,644.1 1478.1,643.8 1477.8,643.4 1477.6,643.2 1477.2,642.8 1477.1,642.8 1472.6,640.4 1472.5,640.4 1471.8,640.2 1471.5,640.2 1470.8,640.3 1470.6,640.3Z" fill="url(#hg2)" fill-rule="evenodd"/>
<path d="M1483.7,685.5 1483.6,685.6 1483.3,686.1 1483.2,686.2 1480.8,692.4 1480.7,692.6 1480.6,693.1 1480.6,693.4 1480.7,693.9 1480.8,694.2 1481.1,694.6 1481.3,694.9 1481.7,695.2 1481.8,695.3 1496.6,702.9 1496.7,703.0 1497.3,703.2 1497.5,703.2 1511.1,704.7 1511.3,704.7 1512.0,704.6 1512.4,704.5 1513.0,704.1 1513.1,703.9 1525.6,690.0 1525.7,689.9 1526.0,689.3 1526.1,689.0 1526.2,688.4 1526.2,688.2 1524.7,672.2 1524.7,672.1 1524.5,671.4 1524.3,671.1 1523.9,670.7 1523.6,670.5 1523.0,670.2 1522.9,670.2 1501.8,665.7 1501.6,665.7 1501.1,665.7 1500.8,665.7 1500.3,665.9 1500.0,666.0 1499.6,666.4 1499.5,666.5Z" fill="url(#hg2)" fill-rule="evenodd"/>
<path d="M1243.8,817.0 1243.2,817.3 1239.8,818.8 1236.6,820.2 1233.0,822.4 1228.5,825.8 1223.7,829.9 1219.4,834.3 1216.2,839.2 1213.6,844.5 1212.3,848.2 1234.8,861.2 1238.1,858.1 1242.4,853.0 1246.5,847.1 1250.0,841.1 1253.0,835.3 1255.3,829.4 1256.7,824.5Z" fill="#2a2c30" fill-rule="evenodd"/>
<path d="M1244.0,850.7 1246.5,847.1 1250.0,841.1 1253.0,835.3 1255.2,829.6 1237.9,819.6 1236.6,820.2 1233.0,822.4 1228.5,825.8 1223.7,829.9 1219.4,834.3 1218.4,835.9Z" fill="#35383d" fill-rule="evenodd"/>
<path d="M1255.8,827.8 1256.1,826.7 1241.2,818.2 1240.0,818.7Z" fill="#1d1e21" fill-rule="evenodd"/>
<path d="M1255.2,829.8 1255.3,829.4 1255.5,828.8 1238.8,819.2 1237.7,819.7Z" fill="#1d1e21" fill-rule="evenodd"/>
<path d="M1243.3,851.8 1244.0,850.7 1218.4,835.9 1217.7,837.0Z" fill="#17181a" fill-rule="evenodd"/>
<path d="M1241.7,853.9 1242.4,853.0 1242.5,852.8 1216.9,838.1 1216.2,839.2Z" fill="#17181a" fill-rule="evenodd"/>
<path d="M1234.8,861.2 1238.1,858.1 1241.7,853.9 1216.2,839.2 1216.2,839.2 1213.6,844.5 1212.3,848.2Z" fill="#222427" fill-rule="evenodd"/>
<path d="M1256.0,812.2 1252.5,812.7 1247.7,815.0 1243.2,817.3 1239.8,818.8 1236.6,820.2 1233.0,822.4 1228.5,825.8 1223.7,829.9 1219.4,834.3 1216.2,839.2 1213.6,844.5 1211.8,849.6 1210.8,854.5 1210.6,859.2 1210.9,863.2 1211.5,866.6 1212.5,869.3 1214.3,870.9 1217.1,871.1 1220.6,870.1 1224.5,868.3 1228.9,865.8 1233.6,862.3 1238.1,858.1 1242.4,853.0 1246.5,847.1 1250.0,841.1 1253.0,835.3 1255.3,829.4 1256.8,824.1 1257.6,819.2 1257.4,814.7Z" fill="none" fill-rule="evenodd" stroke="#f6b93f" stroke-width="2" stroke-linejoin="round"/>
<path d="M1325.2,782.3 1325.2,782.1 1325.2,781.5 1325.2,781.2 1325.1,780.7 1324.9,780.4 1324.6,780.0 1324.3,779.8 1323.9,779.6 1323.6,779.5 1323.1,779.4 1322.7,779.4 1322.2,779.6 1322.0,779.6 1301.2,790.0 1301.2,790.1 1300.9,790.2 1300.9,790.2 1284.8,801.5 1284.7,801.6 1284.3,802.0 1284.1,802.3 1283.9,802.8 1283.9,803.0 1282.6,809.4 1282.5,809.6 1282.6,810.3 1282.7,810.6 1282.9,811.2 1283.0,811.4 1289.0,818.8 1289.0,818.9 1289.3,819.2 1289.4,819.2 1302.4,829.3 1302.6,829.4 1303.2,829.7 1303.5,829.8 1304.1,829.8 1304.4,829.8 1304.9,829.5 1305.2,829.3 1305.7,828.9 1305.8,828.7 1309.5,822.6 1309.5,822.5 1309.6,822.3 1309.6,822.3 1318.0,802.1 1318.0,802.1 1318.1,802.0 1318.1,802.0 1324.8,783.4 1324.8,783.4 1324.9,783.3 1324.9,783.2Z" fill="none" fill-rule="evenodd" stroke="#f6b93f" stroke-width="2" stroke-linejoin="round"/>
<path d="M1275.5,844.9 1279.3,841.1 1280.6,844.5 1277.2,850.5Z" fill="none" fill-rule="evenodd" stroke="#f6b93f" stroke-width="2" stroke-linejoin="round"/>
<path d="M1360.3,761.2 1360.2,761.3 1359.7,761.7 1359.4,761.9 1359.1,762.4 1359.0,762.6 1354.6,773.5 1354.6,773.5 1346.1,795.6 1340.2,811.1 1340.2,811.3 1340.1,811.9 1340.1,812.3 1340.2,812.8 1340.4,813.1 1340.8,813.5 1341.1,813.8 1341.6,814.0 1341.8,814.1 1341.9,814.1 1342.0,814.1 1342.5,814.2 1342.8,814.2 1343.3,814.0 1343.5,814.0 1369.9,801.6 1369.9,801.6 1395.3,789.3 1395.4,789.2 1395.9,788.8 1396.2,788.5 1396.5,787.9 1396.5,787.7 1398.6,779.5 1398.6,779.3 1398.7,778.8 1398.6,778.5 1398.5,778.0 1398.4,777.8 1392.1,765.1 1392.0,765.1 1392.0,765.0 1392.0,765.0 1385.4,753.2 1385.3,753.0 1384.9,752.6 1384.7,752.4 1384.3,752.2 1384.0,752.1 1383.5,752.0 1383.2,752.0 1382.7,752.1 1382.5,752.2Z" fill="none" fill-rule="evenodd" stroke="#f6b93f" stroke-width="2" stroke-linejoin="round"/>
<path d="M1404.8,738.8 1404.6,738.9 1404.1,739.3 1403.9,739.5 1403.7,740.0 1403.6,740.3 1403.5,740.9 1403.6,741.2 1403.8,741.8 1403.8,742.0 1412.4,756.5 1412.4,756.5 1412.4,756.5 1412.4,756.5 1421.2,770.7 1421.3,770.8 1421.7,771.3 1422.0,771.4 1422.5,771.7 1422.8,771.7 1423.3,771.8 1423.6,771.7 1424.1,771.5 1424.4,771.4 1424.8,771.0 1424.9,770.8 1437.9,753.1 1437.9,753.1 1437.9,753.1 1438.0,753.1 1453.1,731.2 1453.2,731.1 1453.3,730.9 1453.3,730.8 1459.2,718.5 1459.3,718.3 1459.4,717.6 1459.4,717.2 1459.2,716.5 1459.1,716.3 1458.5,715.1 1458.4,715.0 1458.1,714.5 1457.8,714.3 1457.4,714.1 1457.0,714.0 1456.5,713.9 1456.2,713.9 1455.6,714.1 1455.5,714.1 1426.0,728.5Z" fill="none" fill-rule="evenodd" stroke="#f6b93f" stroke-width="2" stroke-linejoin="round"/>
<path d="M1467.7,751.8 1480.4,737.8 1484.7,738.7 1477.0,748.0 1468.5,753.5Z" fill="none" fill-rule="evenodd" stroke="#f6b93f" stroke-width="2" stroke-linejoin="round"/>
<path d="M1597.1,551.8 1597.1,551.8 1596.8,551.9 1596.7,552.0 1596.6,552.1 1596.5,552.2 1596.5,552.5 1596.5,552.5 1595.5,567.4 1595.5,567.4 1595.5,567.6 1595.6,567.7 1595.7,567.9 1595.7,568.0 1595.9,568.1 1595.9,568.1 1598.1,569.4 1598.2,569.5 1598.4,569.5 1598.5,569.5 1598.7,569.5 1598.8,569.5 1599.0,569.4 1599.1,569.3 1599.2,569.2 1599.3,569.1 1599.3,568.9 1599.4,568.8 1601.1,552.0 1601.1,551.9 1601.1,551.7 1601.1,551.6 1601.0,551.4 1600.9,551.4 1600.8,551.2 1600.7,551.2 1600.5,551.1 1600.4,551.1 1600.2,551.1 1600.2,551.1Z" fill="none" fill-rule="evenodd" stroke="#f6b93f" stroke-width="2" stroke-linejoin="round"/>
<path d="M1565.7,572.1 1565.6,572.1 1565.4,572.3 1565.3,572.3 1565.2,572.5 1565.1,572.6 1565.1,572.9 1565.0,572.9 1565.0,578.2 1565.1,578.2 1565.1,578.5 1565.2,578.6 1565.3,578.7 1565.4,578.8 1565.5,578.9 1565.7,579.0 1565.9,579.0 1566.0,579.0 1570.3,578.5 1570.3,578.5 1570.5,578.4 1570.6,578.4 1570.7,578.3 1570.8,578.2 1570.9,578.0 1571.0,577.9 1571.0,577.7 1571.0,577.7 1571.0,571.7 1571.0,571.6 1571.0,571.4 1570.9,571.3 1570.8,571.2 1570.7,571.1 1570.6,571.0 1570.5,570.9 1570.3,570.9 1570.2,570.9 1570.0,570.9 1569.9,570.9Z" fill="none" fill-rule="evenodd" stroke="#f6b93f" stroke-width="2" stroke-linejoin="round"/>
<path d="M1482.7,700.7 1482.5,700.7 1481.8,700.8 1481.5,700.9 1481.0,701.1 1480.7,701.4 1480.3,701.8 1480.2,702.1 1480.0,702.8 1480.0,703.0 1480.0,711.4 1480.0,711.6 1480.1,712.1 1480.2,712.4 1480.4,712.8 1480.6,713.0 1481.0,713.3 1481.3,713.5 1481.8,713.7 1481.9,713.7 1489.7,715.0 1489.8,715.0 1490.6,715.0 1490.7,714.9 1503.2,711.8 1503.4,711.7 1504.1,711.4 1504.3,711.3 1508.1,708.2 1508.2,708.1 1508.6,707.7 1508.8,707.4 1508.9,706.9 1509.0,706.5 1508.9,706.0 1508.8,705.7 1508.6,705.3 1508.4,705.0 1508.0,704.7 1507.7,704.5 1507.1,704.3 1506.9,704.3 1497.1,703.2 1497.0,703.2 1497.0,703.2 1496.9,703.2Z" fill="none" fill-rule="evenodd" stroke="#f6b93f" stroke-width="2" stroke-linejoin="round"/>
<path d="M1719.8,466.8 1719.7,466.8 1719.1,466.8 1718.7,466.9 1718.2,467.1 1718.0,467.2 1693.8,484.0 1693.7,484.0 1693.7,484.0 1693.7,484.0 1672.6,499.8 1672.5,500.0 1672.1,500.4 1671.9,500.8 1671.7,501.3 1671.7,501.7 1671.8,502.2 1671.9,502.6 1672.3,503.1 1672.4,503.3 1673.6,504.5 1673.7,504.6 1674.3,504.9 1674.7,505.1 1675.3,505.2 1675.5,505.2 1712.5,501.8 1712.7,501.8 1713.3,501.6 1713.5,501.5 1727.6,494.1 1727.8,494.0 1728.2,493.7 1728.4,493.4 1728.7,492.9 1728.8,492.7 1733.0,479.1 1733.1,479.0 1733.1,478.4 1733.1,478.1 1733.0,477.5 1732.9,477.3 1729.0,469.6 1728.9,469.4 1728.5,468.9 1728.2,468.7 1727.5,468.4 1727.3,468.3Z" fill="none" fill-rule="evenodd" stroke="#f6b93f" stroke-width="2" stroke-linejoin="round"/>
<path d="M1713.3,545.3 1713.4,545.2 1713.4,544.6 1713.4,544.2 1713.2,543.7 1713.1,543.4 1712.8,543.0 1712.5,542.8 1712.0,542.6 1711.7,542.5 1711.2,542.4 1710.9,542.4 1710.3,542.6 1710.1,542.7 1693.8,551.6 1693.7,551.6 1693.7,551.6 1693.7,551.7 1673.0,562.0 1672.8,562.1 1672.3,562.5 1672.1,562.8 1671.8,563.3 1671.7,563.7 1671.7,564.3 1671.8,564.7 1672.1,565.3 1672.2,565.4 1682.1,578.6 1682.1,578.6 1682.2,578.7 1682.2,578.8 1693.3,591.4 1693.4,591.5 1693.9,591.9 1694.2,592.1 1694.7,592.2 1695.1,592.2 1695.6,592.1 1695.9,592.0 1696.4,591.7 1696.6,591.5 1697.0,591.0 1697.0,590.8 1705.3,571.1 1705.3,571.0 1705.3,570.9 1705.4,570.9Z" fill="none" fill-rule="evenodd" stroke="#f6b93f" stroke-width="2" stroke-linejoin="round"/>
<path d="M1653.1,576.9 1652.9,576.8 1652.5,576.4 1652.2,576.3 1651.8,576.1 1651.5,576.1 1651.0,576.1 1650.7,576.2 1650.2,576.4 1650.0,576.5 1637.0,585.2 1636.8,585.3 1636.2,585.9 1636.1,586.0 1630.1,596.6 1630.0,596.8 1629.8,597.3 1629.8,597.6 1629.8,598.1 1629.8,598.3 1632.7,614.0 1632.7,614.2 1632.9,614.7 1633.1,615.0 1633.4,615.3 1633.7,615.5 1634.1,615.7 1634.4,615.8 1635.0,615.9 1635.2,615.9 1660.9,612.8 1661.1,612.8 1661.7,612.6 1662.0,612.4 1662.4,612.0 1662.6,611.8 1667.4,604.9 1667.5,604.8 1667.7,604.3 1667.8,604.0 1667.8,603.5 1667.8,603.3 1667.1,594.8 1667.1,594.6 1667.0,594.2 1666.9,593.9 1666.6,593.5 1666.6,593.4Z" fill="none" fill-rule="evenodd" stroke="#f6b93f" stroke-width="2" stroke-linejoin="round"/>
<path d="M1740.8,541.1 1740.8,541.2 1740.7,541.5 1740.7,541.6 1740.8,541.9 1740.9,542.0 1741.1,542.3 1741.1,542.3 1743.7,544.4 1743.8,544.4 1744.0,544.5 1744.2,544.6 1744.4,544.6 1744.5,544.6 1744.8,544.5 1744.9,544.4 1745.1,544.3 1745.2,544.2 1745.3,543.9 1745.3,543.9 1748.6,533.6 1748.7,533.5 1748.7,533.2 1748.7,533.0 1748.6,532.8 1748.5,532.6 1748.2,532.4 1748.2,532.4 1746.5,531.4 1746.4,531.3 1746.1,531.2 1746.0,531.2 1745.7,531.2 1745.6,531.3 1745.3,531.4 1745.2,531.5 1745.1,531.8 1745.0,531.8Z" fill="none" fill-rule="evenodd" stroke="#f6b93f" stroke-width="2" stroke-linejoin="round"/>
<path d="M1758.5,490.6 1759.4,484.1 1760.6,476.2 1762.2,467.9 1764.6,460.5 1767.8,453.8 1771.7,447.5 1776.1,441.7 1780.6,436.4 1785.4,431.5 1790.4,427.1 1795.6,423.3 1800.7,420.3 1806.0,417.8 1811.5,415.8 1816.7,414.8 1820.8,415.3 1823.9,417.5 1826.2,421.2 1827.8,425.7 1828.9,430.3 1829.4,434.9 1829.3,439.7 1828.8,444.9 1827.9,450.4 1826.7,456.6 1825.2,463.2 1823.2,470.0 1820.8,476.5 1818.0,482.9 1814.6,489.2 1810.9,495.2 1806.8,500.6 1802.1,505.6 1797.0,510.1 1791.7,513.9 1786.7,516.7 1781.8,518.6 1777.0,519.6 1772.5,519.7 1768.6,518.7 1765.3,516.3 1762.4,512.7 1760.2,508.6 1758.5,504.7 1757.7,501.5 1757.5,498.6 1757.9,495.2Z" fill="none" fill-rule="evenodd" stroke="#f6b93f" stroke-width="2" stroke-linejoin="round"/>
<path d="M1187.6,898.1 1187.4,899.1 1187.0,900.0 1186.6,900.9 1186.0,901.7 1185.4,902.4 1184.7,903.0 1184.0,903.4 1183.2,903.7 1182.5,903.8 1181.7,903.7 1181.0,903.5 1180.3,903.2 1179.7,902.7 1179.2,902.0 1178.7,901.3 1178.4,900.4 1178.1,899.5 1178.0,898.5 1178.0,897.4 1178.1,896.4 1178.4,895.4 1178.7,894.4 1179.2,893.6 1179.7,892.8 1180.3,892.1 1181.0,891.5 1181.7,891.1 1182.5,890.8 1183.3,890.7 1184.0,890.7 1184.7,891.0 1185.4,891.3 1186.0,891.8 1186.6,892.5 1187.0,893.2 1187.4,894.1 1187.6,895.0 1187.7,896.0 1187.7,897.1Z" fill="#d9a13b" fill-rule="evenodd" stroke="#b98a2e" stroke-width="0.8" stroke-linejoin="round"/>
<path d="M1379.9,705.4 1379.6,706.5 1379.2,707.6 1378.7,708.6 1378.1,709.4 1377.5,710.2 1376.7,710.8 1375.9,711.3 1375.1,711.6 1374.3,711.7 1373.5,711.6 1372.7,711.4 1372.0,711.0 1371.3,710.4 1370.7,709.7 1370.2,708.9 1369.9,708.0 1369.6,706.9 1369.5,705.9 1369.5,704.8 1369.6,703.6 1369.9,702.5 1370.3,701.5 1370.7,700.5 1371.3,699.6 1372.0,698.9 1372.7,698.3 1373.5,697.8 1374.3,697.5 1375.2,697.4 1376.0,697.4 1376.8,697.7 1377.5,698.1 1378.2,698.6 1378.8,699.3 1379.2,700.2 1379.6,701.1 1379.9,702.1 1380.0,703.2 1380.0,704.3Z" fill="#d9a13b" fill-rule="evenodd" stroke="#b98a2e" stroke-width="0.8" stroke-linejoin="round"/>
<path d="M1641.9,523.4 1641.7,524.5 1641.3,525.5 1640.8,526.5 1640.2,527.4 1639.5,528.1 1638.8,528.7 1638.0,529.2 1637.2,529.5 1636.4,529.6 1635.5,529.6 1634.8,529.3 1634.0,528.9 1633.4,528.4 1632.8,527.7 1632.3,526.8 1631.9,525.9 1631.7,524.9 1631.5,523.8 1631.5,522.7 1631.7,521.6 1631.9,520.5 1632.3,519.4 1632.8,518.4 1633.4,517.6 1634.1,516.8 1634.8,516.2 1635.6,515.7 1636.4,515.4 1637.2,515.3 1638.1,515.4 1638.8,515.6 1639.6,516.0 1640.2,516.6 1640.8,517.3 1641.3,518.1 1641.7,519.0 1641.9,520.1 1642.1,521.1 1642.1,522.3Z" fill="#d9a13b" fill-rule="evenodd" stroke="#b98a2e" stroke-width="0.8" stroke-linejoin="round"/>
<path d="M1821.9,403.1 1821.7,404.2 1821.3,405.3 1820.8,406.3 1820.2,407.2 1819.5,408.0 1818.8,408.6 1818.0,409.1 1817.2,409.4 1816.3,409.5 1815.5,409.5 1814.7,409.3 1814.0,408.8 1813.3,408.3 1812.8,407.6 1812.3,406.7 1811.9,405.7 1811.7,404.7 1811.5,403.6 1811.6,402.4 1811.7,401.3 1812.0,400.2 1812.3,399.1 1812.8,398.1 1813.4,397.2 1814.1,396.4 1814.8,395.8 1815.6,395.3 1816.5,395.0 1817.3,394.9 1818.1,394.9 1818.9,395.1 1819.6,395.5 1820.3,396.1 1820.9,396.8 1821.3,397.7 1821.7,398.6 1822.0,399.7 1822.1,400.8 1822.1,401.9Z" fill="#d9a13b" fill-rule="evenodd" stroke="#b98a2e" stroke-width="0.8" stroke-linejoin="round"/>
<path d="M1743.6,451.3 1743.3,452.4 1742.9,453.5 1742.4,454.5 1741.8,455.4 1741.2,456.2 1740.4,456.8 1739.6,457.3 1738.8,457.6 1738.0,457.8 1737.2,457.7 1736.4,457.5 1735.6,457.1 1735.0,456.5 1734.4,455.8 1733.9,454.9 1733.6,454.0 1733.3,452.9 1733.2,451.8 1733.2,450.7 1733.3,449.5 1733.6,448.4 1734.0,447.3 1734.5,446.3 1735.1,445.4 1735.7,444.6 1736.5,444.0 1737.3,443.5 1738.1,443.2 1738.9,443.1 1739.7,443.1 1740.5,443.4 1741.3,443.8 1741.9,444.3 1742.5,445.1 1743.0,445.9 1743.4,446.9 1743.6,447.9 1743.7,449.0 1743.7,450.2Z" fill="#d9a13b" fill-rule="evenodd" stroke="#b98a2e" stroke-width="0.8" stroke-linejoin="round"/>
<path d="M1539.8,733.6 1539.5,734.6 1539.2,735.7 1538.7,736.6 1538.1,737.5 1537.5,738.2 1536.8,738.8 1536.0,739.2 1535.2,739.5 1534.4,739.7 1533.6,739.6 1532.9,739.4 1532.2,739.0 1531.5,738.5 1531.0,737.8 1530.5,737.0 1530.2,736.1 1529.9,735.1 1529.8,734.0 1529.8,732.9 1529.9,731.8 1530.2,730.8 1530.5,729.8 1531.0,728.8 1531.6,728.0 1532.2,727.2 1532.9,726.6 1533.7,726.2 1534.5,725.9 1535.3,725.8 1536.1,725.8 1536.8,726.0 1537.5,726.4 1538.2,727.0 1538.7,727.6 1539.2,728.5 1539.6,729.4 1539.8,730.4 1539.9,731.4 1539.9,732.5Z" fill="#d9a13b" fill-rule="evenodd" stroke="#b98a2e" stroke-width="0.8" stroke-linejoin="round"/>
<path d="M1379.9,704.7 1379.7,705.7 1379.3,706.8 1378.9,707.7 1378.3,708.6 1377.6,709.3 1376.9,709.9 1376.2,710.3 1375.4,710.6 1374.6,710.8 1373.8,710.7 1373.0,710.5 1372.3,710.1 1371.7,709.6 1371.1,708.9 1370.7,708.1 1370.3,707.2 1370.1,706.2 1370.0,705.1 1370.0,704.0 1370.1,702.9 1370.3,701.9 1370.7,700.8 1371.2,699.9 1371.8,699.1 1372.4,698.3 1373.1,697.7 1373.9,697.3 1374.7,697.0 1375.4,696.9 1376.2,696.9 1377.0,697.1 1377.7,697.5 1378.3,698.1 1378.9,698.7 1379.4,699.5 1379.7,700.5 1380.0,701.4 1380.1,702.5 1380.1,703.6Z" fill="#d9a13b" fill-rule="evenodd" stroke="#b98a2e" stroke-width="0.8" stroke-linejoin="round"/>
<path d="M1540.2,732.6 1539.9,733.7 1539.6,734.7 1539.1,735.6 1538.5,736.5 1537.9,737.2 1537.2,737.8 1536.4,738.3 1535.6,738.6 1534.8,738.7 1534.0,738.6 1533.3,738.4 1532.6,738.0 1531.9,737.5 1531.4,736.8 1530.9,736.0 1530.6,735.1 1530.3,734.1 1530.2,733.0 1530.2,732.0 1530.3,730.9 1530.6,729.8 1531.0,728.8 1531.4,727.8 1532.0,727.0 1532.6,726.3 1533.4,725.7 1534.1,725.2 1534.9,724.9 1535.7,724.8 1536.5,724.8 1537.2,725.1 1537.9,725.5 1538.6,726.0 1539.1,726.7 1539.6,727.5 1540.0,728.4 1540.2,729.4 1540.3,730.4 1540.3,731.5Z" fill="#d9a13b" fill-rule="evenodd" stroke="#b98a2e" stroke-width="0.8" stroke-linejoin="round"/>
<path d="M1818.6,448.0 1814.8,449.2 1810.2,451.3 1804.6,454.1 1798.3,457.6 1791.3,461.8 1782.9,467.1 1772.1,473.6 1758.2,482.0 1741.7,491.9 1724.2,502.4 1707.2,512.5 1690.4,522.7 1673.1,533.2 1656.7,543.1 1642.3,551.5 1630.4,557.8 1620.4,562.7 1611.6,566.8 1603.3,571.0 1595.8,575.1 1589.1,578.9 1583.1,582.8 1577.4,587.2 1571.9,592.3 1566.8,597.7 1562.2,603.6 1557.9,609.9 1554.0,616.8 1550.5,624.3 1547.4,631.9 1544.9,639.1 1543.0,645.8 1541.6,652.3 1540.6,658.7 1540.0,665.1 1539.8,671.7 1539.9,678.3 1540.5,684.8 1541.7,691.1 1543.4,697.3 1545.8,703.4 1548.5,709.0 1551.4,713.8 1554.4,717.3 1557.5,719.9 1561.0,722.1 1564.9,724.4 1569.3,727.2 1574.1,730.1 1579.3,732.6 1584.7,734.3 1590.6,735.0 1596.8,735.0 1603.2,734.3 1609.5,733.0 1615.6,731.1 1621.8,728.6 1628.0,725.5 1634.2,721.9 1640.4,717.7 1646.5,712.9 1652.7,707.6 1658.9,702.1 1665.1,696.3 1671.3,690.1 1677.5,683.7 1683.6,677.4 1689.8,671.2 1696.0,665.0 1702.2,658.8 1708.4,652.7 1714.5,646.5 1720.7,640.5 1726.9,634.3 1733.1,627.9 1739.3,621.3 1745.5,614.4 1751.6,607.5 1757.8,600.7 1764.0,594.2 1770.2,587.7 1776.4,581.2 1782.6,574.8 1788.7,568.2 1794.9,561.7 1801.1,555.2 1807.3,548.8 1813.6,542.6 1820.1,536.5 1826.3,530.4 1832.0,524.1 1837.2,517.3 1842.0,510.2 1846.1,503.2 1849.3,496.9 1851.4,491.3 1852.6,486.2 1853.1,481.5 1853.0,477.1 1852.4,472.9 1851.1,469.1 1849.2,465.5 1846.8,462.3 1843.6,459.3 1839.7,456.7 1835.6,454.4 1832.0,452.4 1829.4,450.5 1827.2,448.9 1825.0,447.7 1822.1,447.4ZM1819.7,479.7 1821.3,480.0 1822.5,480.8 1823.1,481.7 1823.1,482.9 1822.5,484.3 1821.5,486.0 1820.1,487.9 1818.6,489.8 1816.7,491.8 1814.3,494.4 1811.1,497.9 1806.9,502.8 1802.0,508.6 1796.3,515.0 1790.0,521.6 1782.5,528.7 1774.1,536.2 1765.6,543.8 1757.8,551.2 1751.1,558.2 1745.0,565.1 1739.2,571.9 1733.2,578.4 1727.0,584.7 1720.9,590.8 1714.7,596.8 1708.5,603.1 1702.3,609.8 1696.0,616.7 1689.7,623.7 1683.5,630.4 1677.3,636.7 1671.2,642.9 1665.0,649.0 1658.8,655.0 1652.7,661.1 1646.5,667.2 1640.3,673.1 1634.2,678.7 1627.9,684.2 1621.5,689.5 1615.3,694.4 1609.5,698.5 1604.0,701.9 1598.8,704.5 1594.0,706.6 1589.7,708.3 1586.0,709.4 1582.8,710.0 1580.0,710.2 1577.4,709.9 1575.0,709.2 1572.8,708.1 1570.9,706.4 1569.3,704.0 1567.8,700.9 1566.6,697.0 1565.7,692.6 1565.0,687.8 1564.6,682.7 1564.3,677.1 1564.4,671.2 1565.0,665.1 1566.2,658.8 1567.9,652.1 1570.0,645.5 1572.5,639.1 1575.5,633.1 1578.9,627.4 1582.7,621.8 1587.1,616.4 1592.0,611.3 1597.4,606.5 1603.3,601.7 1609.8,596.9 1616.5,592.5 1623.4,588.3 1631.7,583.6 1642.3,577.5 1656.2,569.4 1672.7,560.0 1690.2,550.0 1707.2,540.1 1724.2,530.0 1741.7,519.3 1758.2,509.4 1772.1,501.2 1783.0,495.3 1791.6,491.0 1798.6,487.7 1804.6,485.0 1809.4,482.7 1812.7,481.2 1815.3,480.3 1817.6,479.8Z" fill="#242527" fill-rule="evenodd"/>
<path d="M1819.2,457.4 1823.2,457.7 1827.5,458.7 1831.7,460.3 1835.4,462.2 1838.7,464.7 1841.7,467.7 1844.2,470.9 1846.1,474.2 1847.4,477.5 1848.2,480.8 1848.4,484.3 1848.1,488.2 1847.1,492.6 1845.6,497.4 1843.6,502.5 1840.9,507.7 1837.8,513.1 1834.1,518.6 1829.8,524.4 1824.7,530.4 1818.6,536.5 1811.6,542.9 1804.1,549.5 1796.5,556.4 1788.6,563.7 1780.5,571.4 1772.2,579.3 1764.0,587.2 1755.9,595.3 1747.8,603.5 1739.7,611.7 1731.5,619.7 1723.4,627.2 1715.3,634.5 1707.2,641.6 1699.1,648.9 1690.8,656.3 1682.4,663.8 1674.2,671.2 1666.6,678.1 1659.7,684.5 1653.1,690.6 1647.0,696.3 1641.3,701.4 1636.0,706.0 1631.2,710.1 1626.7,713.7 1622.2,717.0 1617.7,720.0 1613.4,722.7 1609.1,725.0 1605.0,726.8 1600.8,728.1 1596.7,729.1 1592.7,729.5 1588.7,729.4 1585.0,728.6 1581.4,727.1 1577.9,725.2 1574.1,722.9 1570.0,720.0 1565.6,716.7 1561.4,713.0 1557.9,708.9 1555.1,704.5 1552.9,699.8 1551.1,694.8 1549.8,689.4 1548.9,683.7 1548.5,677.7 1548.5,671.4 1548.8,665.1 1549.5,658.7 1550.5,652.2 1552.0,645.7 1554.0,639.1 1556.6,632.5 1559.7,625.8 1563.2,619.3 1567.0,613.2 1570.9,607.4 1575.1,601.9 1579.7,596.8 1584.5,592.1 1589.5,587.9 1594.8,584.2 1600.6,580.6 1607.2,576.8 1614.4,573.1 1622.1,569.6 1631.1,565.4 1642.3,559.6 1656.4,551.6 1672.9,542.0 1690.3,531.7 1707.2,521.6 1724.2,511.5 1741.7,501.0 1758.2,491.1 1772.1,482.7 1782.9,476.1 1791.5,470.9 1798.5,466.7 1804.6,463.2 1809.4,460.5 1812.9,458.8 1815.8,457.8Z" fill="none" stroke="#3a3b3d" stroke-width="1" opacity="0.9"/>
<defs><linearGradient id="hg" x1="0" y1="0" x2="0.4" y2="1"><stop offset="0" stop-color="#2c2e32"/><stop offset="0.5" stop-color="#3a3d42"/><stop offset="1" stop-color="#1f2023"/></linearGradient></defs>
<path d="M1575.4,637.3 1575.1,637.7 1575.0,638.1 1574.9,638.7 1574.8,638.8 1574.8,648.8 1574.9,648.9 1574.9,649.5 1575.1,649.8 1575.3,650.2 1575.5,650.4 1575.9,650.8 1576.1,650.8 1609.4,668.7 1609.4,668.7 1609.5,668.7 1609.5,668.8 1620.9,674.4 1621.0,674.5 1621.6,674.7 1622.0,674.7 1622.6,674.6 1622.8,674.5 1633.3,670.3 1633.5,670.2 1633.9,669.9 1634.2,669.7 1634.5,669.3 1634.6,669.2 1641.2,655.9 1641.3,655.7 1641.4,655.3 1641.5,655.0 1641.5,654.5 1641.5,654.3 1639.3,642.6 1639.3,642.4 1639.0,641.8 1638.8,641.5 1638.3,641.1 1638.2,641.0 1609.8,624.4 1609.7,624.4 1609.2,624.2 1609.0,624.1 1593.4,620.8 1593.2,620.8 1592.7,620.7 1592.4,620.8 1592.0,620.9 1591.8,621.0 1591.4,621.3 1591.2,621.4 1575.5,637.1Z" fill="url(#hg)" fill-rule="evenodd"/>
<path d="M1564.7,672.0 1565.3,672.0 1565.4,672.0 1569.4,671.3 1569.6,671.2 1570.2,671.0 1570.3,671.0 1586.5,661.9 1586.6,661.8 1587.1,661.4 1587.3,661.1 1587.5,660.6 1587.6,660.3 1587.6,659.7 1587.6,659.4 1587.4,658.9 1587.2,658.6 1586.8,658.2 1586.6,658.0 1575.5,650.6 1575.3,650.5 1574.3,650.2 1574.0,650.2 1568.5,650.2 1567.9,652.1 1566.2,658.8 1565.0,665.1 1564.4,671.2 1564.4,671.9Z" fill="#fff" fill-rule="evenodd"/>
<path d="M1827.1,521.6 L1819.2,528.2 L1807.9,537.5 L1795.1,548.2 L1782.6,558.7 L1770.5,568.9 L1758.1,579.4 L1745.6,590.1 L1733.1,600.7 L1720.7,611.2 L1708.4,621.6 L1696.0,632.1 L1683.6,642.8 L1671.0,654.2 L1658.1,666.3 L1645.7,677.7 L1634.2,687.3 L1623.8,694.7 L1614.2,700.6 L1605.4,705.4 L1597.1,709.5 L1589.4,712.9 L1582.4,715.4 L1575.9,717.4 L1569.9,719.4 L1564.0,721.6 L1558.3,723.8 L1553.5,725.6 L1550.1,726.8" fill="none" stroke="#f6b93f" stroke-width="2" stroke-linecap="round" stroke-linejoin="round"/>
<path d="M1849.0,488.6 L1846.4,493.9 L1842.8,501.5 L1838.7,509.7 L1834.9,516.7 L1831.4,522.0 L1828.0,526.5 L1824.5,530.7 L1820.8,534.8 L1816.6,539.3 L1811.9,544.0 L1807.7,548.0 L1804.8,550.9" fill="none" stroke="#f6b93f" stroke-width="2" stroke-linecap="round" stroke-linejoin="round"/>
<path d="M1758.5,490.6 L1758.9,487.7 L1759.3,483.4 L1759.9,478.8 L1760.6,474.5 L1761.5,470.5 L1762.7,466.5 L1763.8,462.9 L1764.6,460.5" fill="none" stroke="#f6b93f" stroke-width="2" stroke-linecap="round" stroke-linejoin="round"/>
<path d="M1828.9,430.3 L1828.8,433.8 L1828.8,438.7 L1828.6,444.5 L1827.9,450.4 L1826.6,456.8 L1824.8,463.9 L1822.8,470.7 L1820.8,476.5 L1818.7,481.2 L1816.4,485.2 L1814.3,488.4 L1812.8,490.6" fill="none" stroke="#f6b93f" stroke-width="2" stroke-linecap="round" stroke-linejoin="round"/>
<path d="M1668.8,559.9 L1673.7,556.5 L1680.8,551.7 L1688.1,546.3 L1693.5,541.4 L1696.0,536.9 L1696.9,532.3 L1697.6,528.3 L1699.7,525.3 L1704.5,523.4 L1710.8,522.2 L1716.8,522.0 L1720.7,522.8 L1721.9,525.1 L1721.4,528.6 L1719.9,532.6 L1718.3,536.4 L1716.1,540.4 L1713.2,544.7 L1710.3,548.6 L1708.4,551.3" fill="none" stroke="#f6b93f" stroke-width="2" stroke-linecap="round" stroke-linejoin="round"/>
<path d="M1562.5,650.2 L1564.6,647.5 L1567.6,643.5 L1571.1,639.2 L1574.8,635.4 L1578.9,632.1 L1583.4,629.0 L1588.0,626.0 L1592.1,623.0 L1596.2,619.1 L1600.3,614.6 L1603.7,611.3 L1605.7,610.6 L1606.2,613.8 L1605.5,619.7 L1604.0,626.7 L1602.0,632.9 L1599.6,638.2 L1596.6,643.4 L1593.1,648.3 L1589.7,652.7 L1586.0,656.4 L1582.1,659.8 L1578.3,662.6 L1574.8,665.0 L1571.8,667.4 L1569.1,669.5 L1566.8,670.6 L1564.9,670.0 L1563.7,666.3 L1563.1,660.4 L1562.7,654.3 L1562.5,650.2" fill="none" stroke="#f6b93f" stroke-width="2" stroke-linecap="round" stroke-linejoin="round"/>
<path d="M1613.2,665.0 L1615.2,661.1 L1618.1,655.4 L1621.3,649.6 L1624.3,645.2 L1627.3,642.4 L1630.4,640.5 L1633.0,639.6 L1634.2,640.3 L1633.7,643.3 L1631.9,648.2 L1629.5,653.5 L1626.8,657.6 L1623.5,660.3 L1619.5,662.4 L1615.8,663.9 L1613.2,665.0" fill="none" stroke="#f6b93f" stroke-width="2" stroke-linecap="round" stroke-linejoin="round"/>
<path d="M1541.7,704.0 L1542.7,699.9 L1544.2,693.7 L1546.4,687.8 L1549.8,684.6 L1555.5,685.0 L1563.0,687.6 L1569.9,691.2 L1574.1,694.3 L1574.7,696.7 L1572.9,699.2 L1569.7,701.6 L1566.0,704.0 L1561.2,706.9 L1555.2,710.1 L1549.2,712.7 L1544.9,713.8 L1542.8,712.5 L1542.0,709.5 L1541.8,706.3 L1541.7,704.0" fill="none" stroke="#f6b93f" stroke-width="2" stroke-linecap="round" stroke-linejoin="round"/>
<path d="M1510.0,886.8 1510.0,762.6 1402.6,825.0Z" fill="#f6cd7d" fill-rule="evenodd"/>
<path d="M1510.0,886.8 1510.0,762.6 1618.2,824.2Z" fill="#efc678" fill-rule="evenodd"/>
<path d="M1510.0,886.8 1618.2,824.2 1618.2,949.4Z" fill="#e9c275" fill-rule="evenodd"/>
<path d="M1510.0,886.8 1618.2,949.4 1510.0,1011.4Z" fill="#f5cd7d" fill-rule="evenodd"/>
<path d="M1510.0,886.8 1510.0,1011.4 1402.6,949.6Z" fill="#ecc477" fill-rule="evenodd"/>
<path d="M1510.0,886.8 1402.6,949.6 1402.6,825.0Z" fill="#e8c178" fill-rule="evenodd"/>
<path d="M1510.0,886.8 L1510.0,762.6" fill="none" stroke="#8f6f24" stroke-width="1.3" stroke-linecap="round" stroke-linejoin="round" opacity="0.9"/>
<path d="M1510.0,886.8 L1402.6,825.0" fill="none" stroke="#8f6f24" stroke-width="1.3" stroke-linecap="round" stroke-linejoin="round" opacity="0.9"/>
<path d="M1510.0,886.8 L1618.2,824.2" fill="none" stroke="#8f6f24" stroke-width="1.3" stroke-linecap="round" stroke-linejoin="round" opacity="0.9"/>
<path d="M1510.0,886.8 L1402.6,949.6" fill="none" stroke="#8f6f24" stroke-width="1.3" stroke-linecap="round" stroke-linejoin="round" opacity="0.9"/>
<path d="M1510.0,886.8 L1618.2,949.4" fill="none" stroke="#8f6f24" stroke-width="1.3" stroke-linecap="round" stroke-linejoin="round" opacity="0.9"/>
<path d="M1510.0,886.8 L1510.0,1011.4" fill="none" stroke="#8f6f24" stroke-width="1.3" stroke-linecap="round" stroke-linejoin="round" opacity="0.9"/>
<polygon points="1510.0,762.6 1618.2,824.2 1618.2,949.4 1510.0,1011.4 1402.6,949.6 1402.6,825.0" fill="none" stroke="#f6b93f" stroke-width="2.6" stroke-linejoin="round"/>
</svg>
<div id="topline"></div><div id="topline2"></div><div id="rightline"></div><div id="botline"></div>
</body></html>
